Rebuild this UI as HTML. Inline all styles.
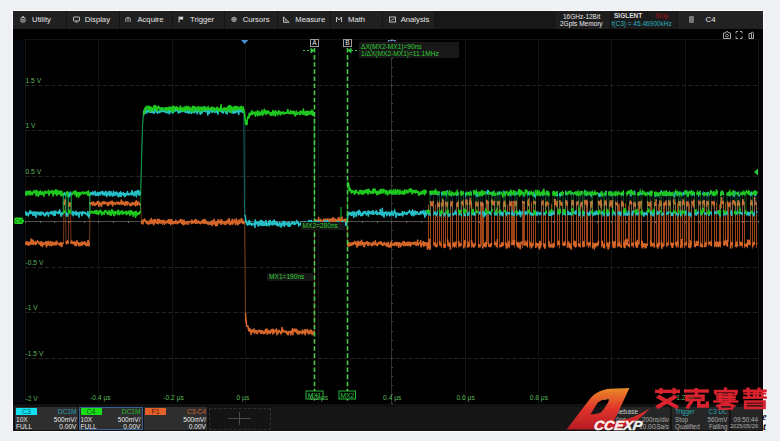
<!DOCTYPE html>
<html><head><meta charset="utf-8"><style>
*{margin:0;padding:0;box-sizing:border-box}
html,body{width:780px;height:441px;overflow:hidden;background:#eff0f4;font-family:"Liberation Sans",sans-serif}
.abs{position:absolute}
#scr{position:absolute;left:13px;top:11px;width:750px;height:420px;background:#000;outline:1px solid #fbfbfd}
#top{position:absolute;left:13px;top:11px;width:750px;height:17.5px;background:#181818}
.mi{position:absolute;top:11px;width:52.8px;height:17.5px;background:#202020;color:#e6e6e6;font-size:7.7px;line-height:17px;white-space:nowrap}
.mi .ic{position:absolute;left:8px;top:6px;width:5px;height:5px;border:1px solid #bbb;border-radius:1px}
.mi .mt{position:absolute;left:19.1px;top:0}
.mi svg{position:absolute;left:7px;top:5px}
.st{position:absolute;font-size:6.5px;color:#e8e8e8;white-space:nowrap;line-height:8px}
.ax{position:absolute;font-size:6.7px;color:#5cb85c;white-space:nowrap;line-height:9px}
svg{position:absolute;left:0;top:0}
.lab{position:absolute;background:#161616;color:#2ecc2e;font-size:6.6px;line-height:7.7px;height:7.7px;white-space:nowrap;padding:0 2px}
.ch{position:absolute;top:407px;height:23px;background:#2e2e2e;font-size:6.6px;color:#e8e8e8;line-height:7px;white-space:nowrap}
.ch .tag{position:absolute;left:1px;top:1px;width:21px;height:6.5px;text-align:center;color:#0a3a3a;font-size:7px;line-height:7px}
.ch .r{position:absolute;right:1px}
.ch .l{position:absolute;left:1px}
.bb{position:absolute;top:407px;height:23px;background:#262626;font-size:6.3px;color:#ababab;line-height:7px;white-space:nowrap;border-right:1px solid #141414}
.wm{position:absolute;white-space:nowrap}
</style></head><body>
<div id="scr"></div>
<div id="top"></div>
<div class="mi" style="left:13.0px"><svg width="7" height="7" viewBox="0 0 7 7"><rect x="1" y="1.5" width="4" height="4.5" rx="0.8" fill="none" stroke="#ccc" stroke-width="0.9"/><circle cx="3" cy="3.8" r="0.9" fill="#ccc"/><rect x="2.4" y="0" width="1.2" height="1.5" fill="#ccc"/></svg><span class="mt">Utility</span></div>
<div class="mi" style="left:65.7px"><svg width="7" height="7" viewBox="0 0 7 7"><rect x="0.5" y="1" width="6" height="4" rx="0.5" fill="none" stroke="#ccc" stroke-width="0.9"/><rect x="2.5" y="5.5" width="2" height="1" fill="#ccc"/></svg><span class="mt">Display</span></div>
<div class="mi" style="left:118.3px"><svg width="7" height="7" viewBox="0 0 7 7"><path d="M0.8,6 V2.5 Q3,0 5.2,2.5 V6 M3,2 V6" fill="none" stroke="#ccc" stroke-width="0.8"/></svg><span class="mt">Acquire</span></div>
<div class="mi" style="left:170.9px"><svg width="7" height="7" viewBox="0 0 7 7"><path d="M1,0.5 V6.5" stroke="#ddd" stroke-width="0.9"/><path d="M1.4,0.8 H5.5 L4.8,2.2 L5.5,3.6 H1.4 Z" fill="#ddd"/></svg><span class="mt">Trigger</span></div>
<div class="mi" style="left:223.6px"><svg width="7" height="7" viewBox="0 0 7 7"><circle cx="3" cy="3.3" r="2.6" fill="#aaa"/><path d="M1,2.3 H5 M1,4.3 H5 M2,1 V5.6 M4,1 V5.6" stroke="#666" stroke-width="0.5"/></svg><span class="mt">Cursors</span></div>
<div class="mi" style="left:276.2px"><svg width="7" height="7" viewBox="0 0 7 7"><path d="M0.5,6.3 V0.8 L6,6.3 Z" fill="none" stroke="#ccc" stroke-width="0.9"/><path d="M1.5,4 H3 M1.5,5 H4" stroke="#ccc" stroke-width="0.5"/></svg><span class="mt">Measure</span></div>
<div class="mi" style="left:328.9px"><svg width="7" height="7" viewBox="0 0 7 7"><path d="M0.5,6 V1 L3,4 L5.5,1 V6" fill="none" stroke="#ccc" stroke-width="0.9"/></svg><span class="mt">Math</span></div>
<div class="mi" style="left:381.6px"><svg width="7" height="7" viewBox="0 0 7 7"><rect x="0.5" y="1" width="6" height="5" fill="none" stroke="#ccc" stroke-width="0.9"/><path d="M1.5,5 L3,3 L4,4 L5.5,2" fill="none" stroke="#ccc" stroke-width="0.6"/></svg><span class="mt">Analysis</span></div>
<div class="abs" style="left:66.4px;top:11px;width:1px;height:17.5px;background:#151515"></div>
<div class="abs" style="left:119.0px;top:11px;width:1px;height:17.5px;background:#151515"></div>
<div class="abs" style="left:171.6px;top:11px;width:1px;height:17.5px;background:#151515"></div>
<div class="abs" style="left:224.3px;top:11px;width:1px;height:17.5px;background:#151515"></div>
<div class="abs" style="left:276.9px;top:11px;width:1px;height:17.5px;background:#151515"></div>
<div class="abs" style="left:329.6px;top:11px;width:1px;height:17.5px;background:#151515"></div>
<div class="abs" style="left:382.2px;top:11px;width:1px;height:17.5px;background:#151515"></div>
<div class="abs" style="left:434.9px;top:11px;width:1px;height:17.5px;background:#151515"></div>
<div class="abs" style="left:553.5px;top:11px;width:56px;height:17.5px;background:#1e1e1e;border-left:1px solid #141414"></div>
<div class="abs" style="left:609.5px;top:11px;width:67px;height:17.5px;background:#1b1b1b;border-left:1px solid #141414"></div>
<div class="abs" style="left:647px;top:11px;width:1px;height:7px;background:#141414"></div>
<div class="abs" style="left:676.5px;top:11px;width:86.5px;height:17.5px;background:#222;border-left:1px solid #141414"></div>
<div class="st" style="left:563px;top:12.5px">16GHz-12Bit</div>
<div class="st" style="left:560px;top:19.5px">2Gpts Memory</div>
<div class="st" style="left:614px;top:11.5px;font-weight:bold;color:#ddd">SIGLENT</div>
<div class="st" style="left:655px;top:12px;color:#a01818">Stop</div>
<div class="st" style="left:611.5px;top:19.5px;color:#2ab0bd">f(C3) = 45.46900kHz</div>
<div class="abs" style="left:689px;top:16px;width:5px;height:7px;background:#777;border-radius:1px"></div>
<div class="st" style="left:705.5px;top:15.5px;font-size:7.8px">C4</div>
<svg width="40" height="10" viewBox="0 0 40 10" style="position:absolute;left:722px;top:30px">
<path d="M1.5,3 H3 L4,1.8 H6 L7,3 H8.5 V8.5 H1.5 Z" fill="none" stroke="#bbb" stroke-width="0.9"/><circle cx="5" cy="5.6" r="1.4" fill="none" stroke="#bbb" stroke-width="0.8"/>
<path d="M14,3.5 V1.5 H16 M18,1.5 H20 V3.5 M20,6.5 V8.5 H18 M16,8.5 H14 V6.5" fill="none" stroke="#bbb" stroke-width="0.9"/>
<path d="M27,8.5 V3.5 H29.5 V8.5 Z M29,2.5 Q31,1 31.5,3.5 V8.5 H30" fill="none" stroke="#bbb" stroke-width="0.9"/>
</svg>
<div class="abs" style="left:14px;top:40px;width:10px;height:363px;background:#05070e"></div>
<svg width="780" height="441" viewBox="0 0 780 441">
<line x1="25.5" y1="39.4" x2="25.5" y2="403.4" stroke="#121212" stroke-width="1"/>
<line x1="98.5" y1="39.4" x2="98.5" y2="403.4" stroke="#121212" stroke-width="1"/>
<line x1="172.5" y1="39.4" x2="172.5" y2="403.4" stroke="#121212" stroke-width="1"/>
<line x1="245.5" y1="39.4" x2="245.5" y2="403.4" stroke="#121212" stroke-width="1"/>
<line x1="318.5" y1="39.4" x2="318.5" y2="403.4" stroke="#121212" stroke-width="1"/>
<line x1="391.5" y1="39.4" x2="391.5" y2="403.4" stroke="#303030" stroke-width="1"/>
<line x1="465.5" y1="39.4" x2="465.5" y2="403.4" stroke="#121212" stroke-width="1"/>
<line x1="538.5" y1="39.4" x2="538.5" y2="403.4" stroke="#121212" stroke-width="1"/>
<line x1="611.5" y1="39.4" x2="611.5" y2="403.4" stroke="#121212" stroke-width="1"/>
<line x1="685.5" y1="39.4" x2="685.5" y2="403.4" stroke="#121212" stroke-width="1"/>
<line x1="758.5" y1="39.4" x2="758.5" y2="403.4" stroke="#121212" stroke-width="1"/>
<line x1="25.0" y1="39.5" x2="757.8" y2="39.5" stroke="#121212" stroke-width="1"/>
<line x1="25.0" y1="85.5" x2="757.8" y2="85.5" stroke="#222" stroke-width="1" stroke-dasharray="4.5 2"/>
<line x1="25.0" y1="130.5" x2="757.8" y2="130.5" stroke="#222" stroke-width="1" stroke-dasharray="4.5 2"/>
<line x1="25.0" y1="176.5" x2="757.8" y2="176.5" stroke="#222" stroke-width="1" stroke-dasharray="4.5 2"/>
<line x1="25.0" y1="221.5" x2="757.8" y2="221.5" stroke="#4e4e4e" stroke-width="1"/>
<line x1="25.0" y1="267.5" x2="757.8" y2="267.5" stroke="#222" stroke-width="1" stroke-dasharray="4.5 2"/>
<line x1="25.0" y1="312.5" x2="757.8" y2="312.5" stroke="#222" stroke-width="1" stroke-dasharray="4.5 2"/>
<line x1="25.0" y1="358.5" x2="757.8" y2="358.5" stroke="#222" stroke-width="1" stroke-dasharray="4.5 2"/>
<rect x="25" y="221" width="1" height="2" fill="#6a6a6a"/>
<rect x="40" y="221" width="1" height="2" fill="#6a6a6a"/>
<rect x="54" y="221" width="1" height="2" fill="#6a6a6a"/>
<rect x="69" y="221" width="1" height="2" fill="#6a6a6a"/>
<rect x="84" y="221" width="1" height="2" fill="#6a6a6a"/>
<rect x="98" y="221" width="1" height="2" fill="#6a6a6a"/>
<rect x="113" y="221" width="1" height="2" fill="#6a6a6a"/>
<rect x="128" y="221" width="1" height="2" fill="#6a6a6a"/>
<rect x="142" y="221" width="1" height="2" fill="#6a6a6a"/>
<rect x="157" y="221" width="1" height="2" fill="#6a6a6a"/>
<rect x="172" y="221" width="1" height="2" fill="#6a6a6a"/>
<rect x="186" y="221" width="1" height="2" fill="#6a6a6a"/>
<rect x="201" y="221" width="1" height="2" fill="#6a6a6a"/>
<rect x="216" y="221" width="1" height="2" fill="#6a6a6a"/>
<rect x="230" y="221" width="1" height="2" fill="#6a6a6a"/>
<rect x="245" y="221" width="1" height="2" fill="#6a6a6a"/>
<rect x="259" y="221" width="1" height="2" fill="#6a6a6a"/>
<rect x="274" y="221" width="1" height="2" fill="#6a6a6a"/>
<rect x="289" y="221" width="1" height="2" fill="#6a6a6a"/>
<rect x="303" y="221" width="1" height="2" fill="#6a6a6a"/>
<rect x="318" y="221" width="1" height="2" fill="#6a6a6a"/>
<rect x="333" y="221" width="1" height="2" fill="#6a6a6a"/>
<rect x="347" y="221" width="1" height="2" fill="#6a6a6a"/>
<rect x="362" y="221" width="1" height="2" fill="#6a6a6a"/>
<rect x="377" y="221" width="1" height="2" fill="#6a6a6a"/>
<rect x="391" y="221" width="1" height="2" fill="#6a6a6a"/>
<rect x="406" y="221" width="1" height="2" fill="#6a6a6a"/>
<rect x="421" y="221" width="1" height="2" fill="#6a6a6a"/>
<rect x="435" y="221" width="1" height="2" fill="#6a6a6a"/>
<rect x="450" y="221" width="1" height="2" fill="#6a6a6a"/>
<rect x="465" y="221" width="1" height="2" fill="#6a6a6a"/>
<rect x="479" y="221" width="1" height="2" fill="#6a6a6a"/>
<rect x="494" y="221" width="1" height="2" fill="#6a6a6a"/>
<rect x="509" y="221" width="1" height="2" fill="#6a6a6a"/>
<rect x="523" y="221" width="1" height="2" fill="#6a6a6a"/>
<rect x="538" y="221" width="1" height="2" fill="#6a6a6a"/>
<rect x="553" y="221" width="1" height="2" fill="#6a6a6a"/>
<rect x="567" y="221" width="1" height="2" fill="#6a6a6a"/>
<rect x="582" y="221" width="1" height="2" fill="#6a6a6a"/>
<rect x="597" y="221" width="1" height="2" fill="#6a6a6a"/>
<rect x="611" y="221" width="1" height="2" fill="#6a6a6a"/>
<rect x="626" y="221" width="1" height="2" fill="#6a6a6a"/>
<rect x="641" y="221" width="1" height="2" fill="#6a6a6a"/>
<rect x="655" y="221" width="1" height="2" fill="#6a6a6a"/>
<rect x="670" y="221" width="1" height="2" fill="#6a6a6a"/>
<rect x="685" y="221" width="1" height="2" fill="#6a6a6a"/>
<rect x="699" y="221" width="1" height="2" fill="#6a6a6a"/>
<rect x="714" y="221" width="1" height="2" fill="#6a6a6a"/>
<rect x="728" y="221" width="1" height="2" fill="#6a6a6a"/>
<rect x="743" y="221" width="1" height="2" fill="#6a6a6a"/>
<rect x="758" y="221" width="1" height="2" fill="#6a6a6a"/>
<rect x="391" y="39" width="2" height="1" fill="#4c4c4c"/>
<rect x="391" y="48" width="2" height="1" fill="#4c4c4c"/>
<rect x="391" y="58" width="2" height="1" fill="#4c4c4c"/>
<rect x="391" y="67" width="2" height="1" fill="#4c4c4c"/>
<rect x="391" y="76" width="2" height="1" fill="#4c4c4c"/>
<rect x="391" y="85" width="2" height="1" fill="#4c4c4c"/>
<rect x="391" y="94" width="2" height="1" fill="#4c4c4c"/>
<rect x="391" y="103" width="2" height="1" fill="#4c4c4c"/>
<rect x="391" y="112" width="2" height="1" fill="#4c4c4c"/>
<rect x="391" y="121" width="2" height="1" fill="#4c4c4c"/>
<rect x="391" y="130" width="2" height="1" fill="#4c4c4c"/>
<rect x="391" y="140" width="2" height="1" fill="#4c4c4c"/>
<rect x="391" y="149" width="2" height="1" fill="#4c4c4c"/>
<rect x="391" y="158" width="2" height="1" fill="#4c4c4c"/>
<rect x="391" y="167" width="2" height="1" fill="#4c4c4c"/>
<rect x="391" y="176" width="2" height="1" fill="#4c4c4c"/>
<rect x="391" y="185" width="2" height="1" fill="#4c4c4c"/>
<rect x="391" y="194" width="2" height="1" fill="#4c4c4c"/>
<rect x="391" y="203" width="2" height="1" fill="#4c4c4c"/>
<rect x="391" y="212" width="2" height="1" fill="#4c4c4c"/>
<rect x="391" y="221" width="2" height="1" fill="#4c4c4c"/>
<rect x="391" y="230" width="2" height="1" fill="#4c4c4c"/>
<rect x="391" y="240" width="2" height="1" fill="#4c4c4c"/>
<rect x="391" y="249" width="2" height="1" fill="#4c4c4c"/>
<rect x="391" y="258" width="2" height="1" fill="#4c4c4c"/>
<rect x="391" y="267" width="2" height="1" fill="#4c4c4c"/>
<rect x="391" y="276" width="2" height="1" fill="#4c4c4c"/>
<rect x="391" y="285" width="2" height="1" fill="#4c4c4c"/>
<rect x="391" y="294" width="2" height="1" fill="#4c4c4c"/>
<rect x="391" y="303" width="2" height="1" fill="#4c4c4c"/>
<rect x="391" y="312" width="2" height="1" fill="#4c4c4c"/>
<rect x="391" y="321" width="2" height="1" fill="#4c4c4c"/>
<rect x="391" y="331" width="2" height="1" fill="#4c4c4c"/>
<rect x="391" y="340" width="2" height="1" fill="#4c4c4c"/>
<rect x="391" y="349" width="2" height="1" fill="#4c4c4c"/>
<rect x="391" y="358" width="2" height="1" fill="#4c4c4c"/>
<rect x="391" y="367" width="2" height="1" fill="#4c4c4c"/>
<rect x="391" y="376" width="2" height="1" fill="#4c4c4c"/>
<rect x="391" y="385" width="2" height="1" fill="#4c4c4c"/>
<rect x="391" y="394" width="2" height="1" fill="#4c4c4c"/>
<rect x="391" y="403" width="2" height="1" fill="#4c4c4c"/>
<g clip-path="url(#gc)">
<clipPath id="gc"><rect x="25" y="39" width="733" height="365"/></clipPath>
<polyline fill="none" stroke="#1ec81e" stroke-width="1" stroke-opacity="0.55" points="314.5,222.4 314.8,221.1 315.2,221.2 315.5,221.3 315.9,220.9 316.2,222.2 316.6,221.4 316.9,221.4 317.2,221.5 317.6,221.1 317.9,220.5 318.3,222.0 318.6,222.3 318.9,220.3 319.3,222.4 319.6,222.7 320.0,221.6 320.3,222.9 320.7,219.4 321.0,222.8 321.3,220.7 321.7,221.8 322.0,220.6 322.4,223.8 322.7,221.1 323.1,222.1 323.4,220.0 323.7,221.2 324.1,221.9 324.4,221.4 324.8,220.7 325.1,222.9 325.4,220.0 325.8,221.5 326.1,221.3 326.5,221.1 326.8,222.1 327.2,221.7 327.5,221.3 327.8,222.1 328.2,221.4 328.5,222.0 328.9,222.7 329.2,221.7 329.6,221.5 329.9,220.9 330.2,222.8 330.6,222.4 330.9,222.0 331.3,221.8 331.6,220.7 331.9,221.5 332.3,221.8 332.6,220.3 333.0,220.5 333.3,221.4 333.7,223.3 334.0,221.8 334.3,220.1 334.7,222.7 335.0,222.3 335.4,222.2 335.7,220.9 336.1,221.4 336.4,223.6 336.7,222.6 337.1,225.9 337.4,219.7 337.8,219.9 338.1,221.1 338.4,220.6 338.8,220.8 339.1,222.2 339.5,222.8 339.8,220.1 340.2,222.0 340.5,221.5 341.0,207.0 341.5,222.3 341.8,221.7 342.2,222.8 342.5,222.6 342.9,220.7 343.2,221.6 343.6,221.7 343.9,220.3 344.2,221.2 344.6,222.5 344.9,221.9 345.3,221.5 345.6,224.0 346.0,222.1 346.3,222.4 346.7,220.6 347.0,221.5"/><path fill="none" stroke="#1ec81e" stroke-width="1.1" stroke-linejoin="round" d="M314.5,222.4 L314.8,221.1 L315.2,221.2 L315.5,221.3 L315.9,220.9 L316.2,222.2 L316.6,221.4 L316.9,221.4 L317.2,221.5 L317.6,221.1 L317.9,220.5 L318.3,222.0 L318.6,222.3 L318.9,220.3 L319.3,222.4 L319.6,222.7 L320.0,221.6 L320.3,222.9 L320.7,219.4 L321.0,222.8 L321.3,220.7 L321.7,221.8 L322.0,220.6 L322.4,223.8 L322.7,221.1 L323.1,222.1 L323.4,220.0 L323.7,221.2 L324.1,221.9 L324.4,221.4 L324.8,220.7 L325.1,222.9 L325.4,220.0 L325.8,221.5 L326.1,221.3 L326.5,221.1 L326.8,222.1 L327.2,221.7 L327.5,221.3 L327.8,222.1 L328.2,221.4 L328.5,222.0 L328.9,222.7 L329.2,221.7 L329.6,221.5 L329.9,220.9 L330.2,222.8 L330.6,222.4 L330.9,222.0 L331.3,221.8 L331.6,220.7 L331.9,221.5 L332.3,221.8 L332.6,220.3 L333.0,220.5 L333.3,221.4 L333.7,223.3 L334.0,221.8 L334.3,220.1 L334.7,222.7 L335.0,222.3 L335.4,222.2 L335.7,220.9 L336.1,221.4 L336.4,223.6 L336.7,222.6 L337.1,225.9 L337.4,219.7 L337.8,219.9 L338.1,221.1 L338.4,220.6 L338.8,220.8 L339.1,222.2 L339.5,222.8 L339.8,220.1 L340.2,222.0 L340.5,221.5 M341.5,222.3 L341.8,221.7 L342.2,222.8 L342.5,222.6 L342.9,220.7 L343.2,221.6 L343.6,221.7 L343.9,220.3 L344.2,221.2 L344.6,222.5 L344.9,221.9 L345.3,221.5 L345.6,224.0 L346.0,222.1 L346.3,222.4 L346.7,220.6 L347.0,221.5"/>
<polyline fill="none" stroke="#d4662a" stroke-width="1" stroke-opacity="0.55" points="25.0,245.1 25.3,242.9 25.7,243.2 26.0,242.9 26.4,241.7 26.7,244.2 27.0,241.8 27.4,244.6 27.7,242.4 28.1,245.2 28.4,243.9 28.7,245.1 29.1,242.0 29.4,244.2 29.8,244.5 30.1,243.9 30.5,243.3 30.8,242.7 31.1,239.0 31.5,244.2 31.8,241.7 32.2,242.1 32.5,244.0 32.8,239.9 33.2,242.4 33.5,244.4 33.9,243.5 34.2,243.2 34.5,242.4 34.9,243.7 35.2,241.4 35.6,242.7 35.9,244.6 36.2,242.2 36.6,243.3 36.9,243.0 37.3,241.8 37.6,240.8 37.9,242.3 38.3,242.4 38.6,242.1 39.0,243.4 39.3,243.9 39.7,244.3 40.0,244.0 40.3,241.9 40.7,245.4 41.0,244.0 41.4,244.5 41.7,241.7 42.0,245.0 42.4,246.6 42.7,244.2 43.1,245.0 43.4,242.7 43.7,243.7 44.1,243.4 44.4,244.4 44.8,243.7 45.1,243.9 45.4,242.2 45.8,241.9 46.1,243.5 46.5,246.9 46.8,242.1 47.1,244.2 47.5,245.3 47.8,242.6 48.2,241.2 48.5,244.0 48.8,243.4 49.2,242.3 49.5,245.6 49.9,244.5 50.2,243.5 50.6,241.6 50.9,245.2 51.2,245.1 51.6,244.6 51.9,245.7 52.3,242.1 52.6,242.1 52.9,244.7 53.3,244.1 53.6,243.4 54.0,242.8 54.3,244.9 54.6,243.8 55.0,244.7 55.3,241.9 55.7,243.6 56.0,244.1 56.3,244.9 56.7,241.2 57.0,243.2 57.4,242.6 57.7,243.5 58.0,243.3 58.4,244.1 58.7,244.6 59.1,243.9 59.4,243.4 59.8,244.7 60.1,245.4 60.4,243.6 60.8,242.4 61.1,245.9 61.5,244.8 61.8,246.5 62.1,242.9 62.5,243.0 62.8,243.3 63.2,243.4 63.5,243.5 64.0,201.3 64.4,204.5 64.8,201.2 65.1,199.5 65.5,203.3 66.0,243.4 66.3,242.0 66.7,243.9 67.0,241.9 67.3,241.6 67.6,240.7 68.0,241.8 68.3,243.5 68.8,202.9 69.1,206.3 69.5,204.2 69.8,202.4 70.2,205.2 70.5,203.3 71.0,243.8 71.3,240.9 71.7,241.1 72.0,241.4 72.4,242.7 72.7,243.6 73.0,242.7 73.4,242.7 73.7,242.2 74.0,243.7 74.4,244.6 74.7,242.0 75.1,245.2 75.4,242.3 75.7,243.1 76.1,245.8 76.4,244.3 76.7,243.6 77.1,240.8 77.4,243.6 77.8,243.0 78.1,243.2 78.4,245.0 78.8,242.7 79.1,246.0 79.5,243.6 79.8,243.7 80.1,243.1 80.5,243.6 80.8,245.4 81.1,243.8 81.5,242.1 81.8,242.4 82.2,245.1 82.5,244.3 82.8,242.3 83.2,243.3 83.5,243.6 83.9,244.3 84.2,242.2 84.5,243.6 84.9,241.7 85.2,242.4 85.5,243.2 85.9,245.4 86.2,243.4 86.6,245.8 86.9,244.0 87.2,245.3 87.6,243.3 87.9,241.0 88.2,240.5 88.6,242.9 88.9,246.0 89.3,243.3 89.6,243.5 90.0,202.6 90.3,204.2 90.7,202.8 91.0,202.8 91.4,203.6 91.7,203.9 92.0,202.5 92.4,202.2 92.7,205.5 93.1,202.1 93.4,202.0 93.7,203.0 94.1,203.1 94.4,203.7 94.8,205.5 95.1,205.1 95.4,203.2 95.8,203.5 96.1,204.7 96.5,203.1 96.8,203.5 97.2,201.8 97.5,203.9 97.8,203.2 98.2,201.3 98.5,203.6 98.9,206.4 99.2,203.8 99.5,202.2 99.9,205.1 100.2,203.8 100.6,203.6 100.9,205.4 101.2,204.6 101.6,206.2 101.9,202.2 102.3,202.7 102.6,203.2 102.9,203.6 103.3,201.7 103.6,203.7 104.0,201.4 104.3,202.5 104.6,203.0 105.0,203.7 105.3,203.8 105.7,202.2 106.0,203.8 106.3,203.7 106.7,203.2 107.0,203.3 107.4,202.6 107.7,205.8 108.0,205.2 108.4,203.7 108.7,205.1 109.1,202.1 109.4,202.6 109.8,202.8 110.1,203.9 110.4,202.8 110.8,202.0 111.1,201.2 111.5,201.8 111.8,204.6 112.1,204.0 112.5,201.3 112.8,205.9 113.2,202.6 113.5,202.7 113.8,203.1 114.2,203.4 114.5,202.8 114.9,203.3 115.2,204.4 115.5,204.6 115.9,202.4 116.2,203.1 116.6,202.3 116.9,202.7 117.2,203.2 117.6,202.9 117.9,204.1 118.3,202.0 118.6,203.8 118.9,204.3 119.3,202.9 119.6,202.8 120.0,204.1 120.3,202.8 120.6,202.8 121.0,203.6 121.3,199.9 121.7,204.3 122.0,203.6 122.4,204.1 122.7,201.4 123.0,202.7 123.4,203.9 123.7,204.1 124.1,202.5 124.4,202.7 124.7,205.4 125.1,203.7 125.4,205.0 125.8,201.4 126.1,203.9 126.4,202.5 126.8,202.6 127.1,205.1 127.5,201.8 127.8,202.0 128.1,202.3 128.5,203.0 128.8,203.3 129.2,203.9 129.5,205.0 129.8,204.0 130.2,205.8 130.5,204.8 130.9,204.1 131.2,203.1 131.5,205.2 131.9,202.9 132.2,204.7 132.6,203.3 132.9,202.5 133.2,204.2 133.6,204.3 133.9,203.7 134.3,204.8 134.6,203.5 135.0,202.3 135.3,203.4 135.6,205.9 136.0,202.0 136.3,200.8 136.7,203.3 137.0,201.9 137.3,205.2 137.7,203.5 138.0,202.0 138.4,203.2 138.7,202.0 139.0,204.0 139.4,204.6 139.7,205.0 140.1,204.8 140.4,203.3 141.5,222.0 141.8,223.6 142.2,222.7 142.5,220.2 142.9,223.9 143.2,220.8 143.5,221.2 143.9,219.8 144.2,220.9 144.6,219.1 144.9,220.3 145.2,220.8 145.6,220.4 145.9,221.5 146.3,223.1 146.6,221.6 146.9,222.6 147.3,223.5 147.6,221.2 148.0,224.1 148.3,221.9 148.6,221.9 149.0,222.5 149.3,223.9 149.7,220.3 150.0,223.3 150.3,221.3 150.7,222.1 151.0,220.6 151.4,218.5 151.7,223.6 152.0,223.1 152.4,220.5 152.7,220.7 153.1,220.3 153.4,221.9 153.7,224.8 154.1,221.8 154.4,219.6 154.8,223.0 155.1,220.7 155.4,219.8 155.8,222.5 156.1,222.0 156.5,222.2 156.8,223.0 157.1,223.3 157.5,219.1 157.8,222.2 158.2,223.6 158.5,223.7 158.8,220.6 159.2,219.5 159.5,220.5 159.9,222.5 160.2,221.7 160.5,223.1 160.9,221.8 161.2,220.2 161.6,220.5 161.9,221.7 162.2,223.2 162.6,224.1 162.9,220.6 163.3,222.6 163.6,221.9 163.9,220.4 164.3,220.4 164.6,224.2 165.0,221.4 165.3,221.9 165.6,222.6 166.0,222.5 166.3,223.0 166.7,220.9 167.0,221.5 167.3,222.4 167.7,222.5 168.0,221.0 168.4,219.6 168.7,223.2 169.0,223.2 169.4,223.3 169.7,221.8 170.1,219.5 170.4,221.4 170.7,224.8 171.1,222.4 171.4,222.3 171.8,219.7 172.1,221.1 172.4,223.4 172.8,222.5 173.1,221.8 173.5,223.7 173.8,223.0 174.1,222.8 174.5,221.8 174.8,222.6 175.2,223.4 175.5,222.4 175.8,220.3 176.2,221.8 176.5,221.6 176.9,222.6 177.2,223.8 177.5,221.9 177.9,221.4 178.2,223.0 178.6,222.7 178.9,220.9 179.2,222.6 179.6,222.3 179.9,222.5 180.3,219.9 180.6,219.3 180.9,219.9 181.3,219.7 181.6,223.4 182.0,223.4 182.3,220.2 182.6,224.0 183.0,220.4 183.3,220.9 183.7,225.0 184.0,220.2 184.3,223.0 184.7,223.1 185.0,223.5 185.4,222.9 185.7,222.4 186.0,224.1 186.4,221.9 186.7,222.1 187.1,222.6 187.4,221.5 187.7,221.8 188.1,223.7 188.4,224.3 188.8,222.8 189.1,221.9 189.4,221.3 189.8,221.5 190.1,221.5 190.5,221.4 190.8,221.9 191.1,221.7 191.5,223.5 191.8,220.0 192.2,221.4 192.5,223.1 192.8,221.4 193.2,221.4 193.5,222.8 193.8,221.9 194.2,220.7 194.5,222.2 194.9,222.9 195.2,219.7 195.5,223.3 195.9,219.6 196.2,223.0 196.6,220.2 196.9,222.3 197.2,222.0 197.6,223.4 197.9,221.9 198.3,221.4 198.6,221.0 198.9,222.3 199.3,221.7 199.6,223.2 200.0,222.6 200.3,223.7 200.6,223.0 201.0,222.3 201.3,221.9 201.7,222.9 202.0,223.1 202.3,220.2 202.7,222.6 203.0,221.5 203.4,222.5 203.7,223.1 204.0,219.4 204.4,221.9 204.7,223.4 205.1,219.6 205.4,222.3 205.7,222.0 206.1,221.2 206.4,223.3 206.8,223.3 207.1,222.1 207.4,224.0 207.8,224.0 208.1,222.3 208.5,223.2 208.8,223.2 209.1,224.4 209.5,223.1 209.8,223.0 210.2,222.2 210.5,223.0 210.8,224.2 211.2,221.9 211.5,221.9 211.9,220.7 212.2,225.6 212.5,221.5 212.9,221.3 213.2,221.2 213.6,223.7 213.9,222.5 214.2,219.2 214.6,222.2 214.9,224.6 215.3,222.0 215.6,222.2 215.9,226.0 216.3,221.7 216.6,221.7 217.0,222.9 217.3,225.4 217.6,222.7 218.0,219.8 218.3,221.8 218.7,221.7 219.0,223.1 219.3,221.5 219.7,222.2 220.0,220.3 220.4,220.3 220.7,222.1 221.0,224.3 221.4,220.7 221.7,219.8 222.1,223.7 222.4,222.6 222.7,223.2 223.1,221.8 223.4,222.4 223.8,221.9 224.1,222.1 224.4,224.5 224.8,221.5 225.1,221.5 225.5,222.1 225.8,221.8 226.1,224.4 226.5,221.8 226.8,222.6 227.2,220.3 227.5,222.8 227.8,223.0 228.2,223.0 228.5,219.8 228.9,221.2 229.2,218.4 229.5,224.4 229.9,221.9 230.2,224.3 230.6,224.7 230.9,223.5 231.2,221.2 231.6,221.8 231.9,223.2 232.3,219.3 232.6,224.0 232.9,224.1 233.3,223.3 233.6,221.7 234.0,222.6 234.3,219.8 234.6,220.7 235.0,221.4 235.3,221.0 235.7,224.4 236.0,222.7 236.3,218.7 236.7,223.7 237.0,222.8 237.4,221.7 237.7,221.1 238.0,224.9 238.4,222.4 238.7,222.4 239.1,219.8 239.4,221.3 239.7,223.3 240.1,222.2 240.4,221.4 240.8,221.6 241.1,219.8 241.4,218.6 241.8,222.8 242.1,220.0 242.5,219.9 242.8,222.5 243.1,223.3 243.5,221.6 243.8,223.6 244.2,222.1 244.5,222.0 245.5,312.7 245.9,321.6 246.2,320.0 246.6,326.0 247.0,325.7 247.3,326.4 247.7,326.3 248.0,326.0 248.3,328.7 248.7,330.7 249.0,330.6 249.3,328.5 249.7,330.4 250.0,331.6 250.3,331.4 250.7,329.3 251.0,334.4 251.3,330.5 251.7,330.4 252.0,331.8 252.4,331.9 252.7,330.8 253.0,329.7 253.4,329.9 253.7,331.6 254.1,328.9 254.4,333.2 254.7,332.5 255.1,331.9 255.4,331.9 255.8,330.4 256.1,330.8 256.4,332.8 256.8,330.9 257.1,333.8 257.5,333.0 257.8,332.6 258.1,331.3 258.5,330.3 258.8,331.4 259.2,330.3 259.5,331.1 259.8,331.1 260.2,330.8 260.5,333.2 260.9,330.4 261.2,330.6 261.6,333.3 261.9,332.0 262.2,332.3 262.6,330.8 262.9,332.1 263.3,333.5 263.6,331.7 263.9,332.2 264.3,333.4 264.6,332.5 265.0,333.4 265.3,330.0 265.6,329.2 266.0,330.1 266.3,332.3 266.7,330.7 267.0,328.9 267.3,334.2 267.7,333.5 268.0,330.9 268.4,330.8 268.7,330.7 269.0,332.7 269.4,332.3 269.7,331.9 270.1,333.6 270.4,330.5 270.7,330.0 271.1,331.7 271.4,331.6 271.8,331.8 272.1,332.3 272.4,329.6 272.8,333.9 273.1,329.2 273.5,332.2 273.8,332.2 274.1,332.9 274.5,332.0 274.8,330.6 275.2,331.5 275.5,329.8 275.8,331.5 276.2,331.4 276.5,329.1 276.9,334.8 277.2,330.9 277.5,332.5 277.9,333.6 278.2,331.7 278.6,331.2 278.9,330.2 279.2,330.7 279.6,330.8 279.9,331.5 280.3,332.9 280.6,332.0 280.9,333.9 281.3,332.3 281.6,332.1 282.0,327.5 282.3,331.6 282.6,332.2 283.0,329.7 283.3,331.7 283.7,330.8 284.0,331.5 284.4,331.7 284.7,331.4 285.0,331.7 285.4,332.3 285.7,332.2 286.1,330.9 286.4,333.1 286.7,331.9 287.1,332.3 287.4,334.3 287.8,334.2 288.1,334.9 288.4,331.5 288.8,332.4 289.1,332.5 289.5,332.0 289.8,331.6 290.1,333.0 290.5,333.4 290.8,334.9 291.2,331.1 291.5,332.5 291.8,330.8 292.2,331.5 292.5,328.6 292.9,334.8 293.2,329.6 293.5,332.0 293.9,329.4 294.2,331.4 294.6,330.4 294.9,329.0 295.2,330.4 295.6,331.6 295.9,331.7 296.3,329.2 296.6,332.8 296.9,331.5 297.3,330.3 297.6,334.0 298.0,330.9 298.3,332.2 298.6,334.0 299.0,332.0 299.3,331.8 299.7,333.3 300.0,331.3 300.3,332.0 300.7,331.7 301.0,331.4 301.4,333.0 301.7,332.3 302.0,333.9 302.4,332.5 302.7,330.0 303.1,332.5 303.4,331.5 303.8,331.6 304.1,333.3 304.4,332.5 304.8,329.7 305.1,334.8 305.5,331.8 305.8,329.7 306.1,331.5 306.5,332.6 306.8,330.4 307.2,330.8 307.5,329.5 307.8,332.4 308.2,331.2 308.5,334.1 308.9,332.4 309.2,332.3 309.5,331.1 309.9,333.4 310.2,330.1 310.6,332.4 310.9,332.7 311.2,330.9 311.6,330.3 311.9,333.6 312.3,334.6 312.6,332.6 312.9,334.6 313.3,332.7 313.6,331.8 314.0,331.5 314.3,332.0 314.5,219.3 314.8,222.3 315.2,220.2 315.5,220.1 315.9,221.5 316.2,221.7 316.5,220.0 316.9,221.3 317.2,220.8 317.5,221.2 317.9,220.8 318.2,220.4 318.6,217.6 318.9,220.2 319.2,222.7 319.6,220.5 319.9,221.2 320.3,221.8 320.6,219.6 320.9,221.1 321.3,220.6 321.6,221.5 321.9,221.8 322.3,221.1 322.6,220.7 323.0,222.3 323.3,221.1 323.6,218.9 324.0,222.7 324.3,221.6 324.7,220.1 325.0,220.9 325.3,219.6 325.7,221.1 326.0,218.9 326.3,222.4 326.7,221.6 327.0,219.5 327.4,221.6 327.7,218.9 328.0,220.2 328.4,219.5 328.7,221.9 329.1,221.9 329.4,219.0 329.7,221.2 330.1,221.6 330.4,220.4 330.8,224.3 331.1,218.7 331.4,222.8 331.8,223.0 332.1,220.4 332.4,219.3 332.8,222.6 333.1,217.4 333.5,220.8 333.8,218.9 334.1,220.9 334.5,220.1 334.8,219.1 335.2,221.7 335.5,222.5 335.8,219.0 336.2,221.8 336.5,221.0 336.8,219.9 337.2,220.1 337.5,221.6 337.9,222.4 338.2,220.5 338.5,217.4 338.9,222.0 339.2,221.4 339.6,218.1 339.9,220.1 340.2,220.8 340.6,220.4 340.9,221.3 341.2,219.6 341.6,221.7 341.9,217.0 342.3,221.3 342.6,220.0 342.9,220.7 343.3,221.7 343.6,222.7 344.0,219.4 344.3,220.7 344.6,219.4 345.0,220.9 345.3,220.0 345.6,219.1 346.0,222.4 346.3,221.3 346.7,220.8 347.0,220.8 347.5,245.9 347.8,241.7 348.2,244.5 348.5,246.2 348.9,243.5 349.2,242.8 349.5,242.9 349.9,245.7 350.2,245.5 350.6,244.4 350.9,245.3 351.2,243.1 351.6,243.4 351.9,245.1 352.3,242.7 352.6,244.3 352.9,243.9 353.3,242.8 353.6,244.3 354.0,242.2 354.3,243.1 354.7,241.2 355.0,242.2 355.3,242.7 355.7,244.5 356.0,244.0 356.4,242.2 356.7,243.6 357.0,247.1 357.4,244.1 357.7,244.5 358.1,241.0 358.4,243.3 358.7,245.6 359.1,242.0 359.4,242.7 359.8,242.9 360.1,243.8 360.4,244.8 360.8,241.5 361.1,244.9 361.5,240.3 361.8,242.7 362.1,244.5 362.5,242.3 362.8,242.8 363.2,243.2 363.5,246.2 363.8,242.5 364.2,245.3 364.5,246.7 364.9,243.4 365.2,242.8 365.5,244.0 365.9,242.5 366.2,243.4 366.6,242.4 366.9,241.9 367.2,241.7 367.6,245.2 367.9,243.0 368.3,242.3 368.6,245.4 369.0,243.7 369.3,243.5 369.6,242.9 370.0,243.9 370.3,243.5 370.7,243.3 371.0,243.7 371.3,245.0 371.7,243.7 372.0,245.8 372.4,245.3 372.7,242.5 373.0,242.6 373.4,242.1 373.7,242.9 374.1,244.9 374.4,243.4 374.7,243.2 375.1,244.1 375.4,240.8 375.8,244.4 376.1,243.7 376.4,244.9 376.8,243.5 377.1,245.3 377.5,245.4 377.8,243.5 378.1,244.7 378.5,242.6 378.8,242.9 379.2,242.4 379.5,243.6 379.8,242.2 380.2,242.4 380.5,243.6 380.9,241.8 381.2,244.7 381.6,242.6 381.9,243.6 382.2,243.5 382.6,245.3 382.9,244.8 383.3,243.6 383.6,243.1 383.9,245.1 384.3,243.7 384.6,242.4 385.0,244.1 385.3,244.8 385.6,243.9 386.0,244.0 386.3,246.0 386.7,243.2 387.0,245.0 387.3,246.1 387.7,246.3 388.0,242.3 388.4,244.7 388.7,244.1 389.0,247.3 389.4,245.7 389.7,245.3 390.1,245.6 390.4,244.7 390.7,242.4 391.1,247.1 391.4,241.5 391.8,245.0 392.1,245.0 392.4,244.2 392.8,245.3 393.1,243.9 393.5,245.1 393.8,244.3 394.2,242.9 394.5,245.3 394.8,243.1 395.2,244.8 395.5,242.4 395.9,244.3 396.2,244.7 396.5,245.5 396.9,242.4 397.2,243.2 397.6,243.9 397.9,242.5 398.2,244.8 398.6,247.3 398.9,244.9 399.3,244.8 399.6,242.7 399.9,244.7 400.3,244.7 400.6,246.7 401.0,243.4 401.3,245.7 401.6,243.4 402.0,243.5 402.3,243.3 402.7,244.3 403.0,241.8 403.3,243.4 403.7,246.0 404.0,241.4 404.4,245.2 404.7,245.0 405.0,243.3 405.4,242.8 405.7,245.5 406.1,243.4 406.4,244.4 406.8,243.6 407.1,242.3 407.4,245.4 407.8,244.9 408.1,242.6 408.5,245.5 408.8,242.2 409.1,242.1 409.5,245.1 409.8,243.3 410.2,243.9 410.5,246.2 410.8,242.4 411.2,244.8 411.5,243.4 411.9,244.1 412.2,243.6 412.5,242.8 412.9,244.0 413.2,242.6 413.6,244.0 413.9,242.6 414.2,243.5 414.6,244.1 414.9,242.0 415.3,243.8 415.6,244.9 415.9,244.1 416.3,245.2 416.6,242.5 417.0,244.8 417.3,244.4 417.6,240.0 418.0,243.9 418.3,245.2 418.7,243.8 419.0,244.0 419.3,243.7 419.7,243.7 420.0,242.5 420.4,243.0 420.7,240.8 421.1,246.9 421.4,243.9 421.7,244.2 422.1,244.8 422.4,244.6 422.8,243.8 423.1,241.7 423.4,242.2 423.8,246.3 424.1,244.5 424.5,244.9 424.8,242.4 425.1,243.3 425.5,244.3 425.8,242.8 426.2,245.6 426.5,244.0"/><path fill="none" stroke="#d4662a" stroke-width="1.5" stroke-linejoin="round" d="M25.0,245.1 L25.3,242.9 L25.7,243.2 L26.0,242.9 L26.4,241.7 L26.7,244.2 L27.0,241.8 L27.4,244.6 L27.7,242.4 L28.1,245.2 L28.4,243.9 L28.7,245.1 L29.1,242.0 L29.4,244.2 L29.8,244.5 L30.1,243.9 L30.5,243.3 L30.8,242.7 L31.1,239.0 L31.5,244.2 L31.8,241.7 L32.2,242.1 L32.5,244.0 L32.8,239.9 L33.2,242.4 L33.5,244.4 L33.9,243.5 L34.2,243.2 L34.5,242.4 L34.9,243.7 L35.2,241.4 L35.6,242.7 L35.9,244.6 L36.2,242.2 L36.6,243.3 L36.9,243.0 L37.3,241.8 L37.6,240.8 L37.9,242.3 L38.3,242.4 L38.6,242.1 L39.0,243.4 L39.3,243.9 L39.7,244.3 L40.0,244.0 L40.3,241.9 L40.7,245.4 L41.0,244.0 L41.4,244.5 L41.7,241.7 L42.0,245.0 L42.4,246.6 L42.7,244.2 L43.1,245.0 L43.4,242.7 L43.7,243.7 L44.1,243.4 L44.4,244.4 L44.8,243.7 L45.1,243.9 L45.4,242.2 L45.8,241.9 L46.1,243.5 L46.5,246.9 L46.8,242.1 L47.1,244.2 L47.5,245.3 L47.8,242.6 L48.2,241.2 L48.5,244.0 L48.8,243.4 L49.2,242.3 L49.5,245.6 L49.9,244.5 L50.2,243.5 L50.6,241.6 L50.9,245.2 L51.2,245.1 L51.6,244.6 L51.9,245.7 L52.3,242.1 L52.6,242.1 L52.9,244.7 L53.3,244.1 L53.6,243.4 L54.0,242.8 L54.3,244.9 L54.6,243.8 L55.0,244.7 L55.3,241.9 L55.7,243.6 L56.0,244.1 L56.3,244.9 L56.7,241.2 L57.0,243.2 L57.4,242.6 L57.7,243.5 L58.0,243.3 L58.4,244.1 L58.7,244.6 L59.1,243.9 L59.4,243.4 L59.8,244.7 L60.1,245.4 L60.4,243.6 L60.8,242.4 L61.1,245.9 L61.5,244.8 L61.8,246.5 L62.1,242.9 L62.5,243.0 L62.8,243.3 L63.2,243.4 L63.5,243.5 M64.0,201.3 L64.4,204.5 L64.8,201.2 L65.1,199.5 L65.5,203.3 M66.0,243.4 L66.3,242.0 L66.7,243.9 L67.0,241.9 L67.3,241.6 L67.6,240.7 L68.0,241.8 L68.3,243.5 M68.8,202.9 L69.1,206.3 L69.5,204.2 L69.8,202.4 L70.2,205.2 L70.5,203.3 M71.0,243.8 L71.3,240.9 L71.7,241.1 L72.0,241.4 L72.4,242.7 L72.7,243.6 L73.0,242.7 L73.4,242.7 L73.7,242.2 L74.0,243.7 L74.4,244.6 L74.7,242.0 L75.1,245.2 L75.4,242.3 L75.7,243.1 L76.1,245.8 L76.4,244.3 L76.7,243.6 L77.1,240.8 L77.4,243.6 L77.8,243.0 L78.1,243.2 L78.4,245.0 L78.8,242.7 L79.1,246.0 L79.5,243.6 L79.8,243.7 L80.1,243.1 L80.5,243.6 L80.8,245.4 L81.1,243.8 L81.5,242.1 L81.8,242.4 L82.2,245.1 L82.5,244.3 L82.8,242.3 L83.2,243.3 L83.5,243.6 L83.9,244.3 L84.2,242.2 L84.5,243.6 L84.9,241.7 L85.2,242.4 L85.5,243.2 L85.9,245.4 L86.2,243.4 L86.6,245.8 L86.9,244.0 L87.2,245.3 L87.6,243.3 L87.9,241.0 L88.2,240.5 L88.6,242.9 L88.9,246.0 L89.3,243.3 L89.6,243.5 M90.0,202.6 L90.3,204.2 L90.7,202.8 L91.0,202.8 L91.4,203.6 L91.7,203.9 L92.0,202.5 L92.4,202.2 L92.7,205.5 L93.1,202.1 L93.4,202.0 L93.7,203.0 L94.1,203.1 L94.4,203.7 L94.8,205.5 L95.1,205.1 L95.4,203.2 L95.8,203.5 L96.1,204.7 L96.5,203.1 L96.8,203.5 L97.2,201.8 L97.5,203.9 L97.8,203.2 L98.2,201.3 L98.5,203.6 L98.9,206.4 L99.2,203.8 L99.5,202.2 L99.9,205.1 L100.2,203.8 L100.6,203.6 L100.9,205.4 L101.2,204.6 L101.6,206.2 L101.9,202.2 L102.3,202.7 L102.6,203.2 L102.9,203.6 L103.3,201.7 L103.6,203.7 L104.0,201.4 L104.3,202.5 L104.6,203.0 L105.0,203.7 L105.3,203.8 L105.7,202.2 L106.0,203.8 L106.3,203.7 L106.7,203.2 L107.0,203.3 L107.4,202.6 L107.7,205.8 L108.0,205.2 L108.4,203.7 L108.7,205.1 L109.1,202.1 L109.4,202.6 L109.8,202.8 L110.1,203.9 L110.4,202.8 L110.8,202.0 L111.1,201.2 L111.5,201.8 L111.8,204.6 L112.1,204.0 L112.5,201.3 L112.8,205.9 L113.2,202.6 L113.5,202.7 L113.8,203.1 L114.2,203.4 L114.5,202.8 L114.9,203.3 L115.2,204.4 L115.5,204.6 L115.9,202.4 L116.2,203.1 L116.6,202.3 L116.9,202.7 L117.2,203.2 L117.6,202.9 L117.9,204.1 L118.3,202.0 L118.6,203.8 L118.9,204.3 L119.3,202.9 L119.6,202.8 L120.0,204.1 L120.3,202.8 L120.6,202.8 L121.0,203.6 L121.3,199.9 L121.7,204.3 L122.0,203.6 L122.4,204.1 L122.7,201.4 L123.0,202.7 L123.4,203.9 L123.7,204.1 L124.1,202.5 L124.4,202.7 L124.7,205.4 L125.1,203.7 L125.4,205.0 L125.8,201.4 L126.1,203.9 L126.4,202.5 L126.8,202.6 L127.1,205.1 L127.5,201.8 L127.8,202.0 L128.1,202.3 L128.5,203.0 L128.8,203.3 L129.2,203.9 L129.5,205.0 L129.8,204.0 L130.2,205.8 L130.5,204.8 L130.9,204.1 L131.2,203.1 L131.5,205.2 L131.9,202.9 L132.2,204.7 L132.6,203.3 L132.9,202.5 L133.2,204.2 L133.6,204.3 L133.9,203.7 L134.3,204.8 L134.6,203.5 L135.0,202.3 L135.3,203.4 L135.6,205.9 L136.0,202.0 L136.3,200.8 L136.7,203.3 L137.0,201.9 L137.3,205.2 L137.7,203.5 L138.0,202.0 L138.4,203.2 L138.7,202.0 L139.0,204.0 L139.4,204.6 L139.7,205.0 L140.1,204.8 L140.4,203.3 M141.5,222.0 L141.8,223.6 L142.2,222.7 L142.5,220.2 L142.9,223.9 L143.2,220.8 L143.5,221.2 L143.9,219.8 L144.2,220.9 L144.6,219.1 L144.9,220.3 L145.2,220.8 L145.6,220.4 L145.9,221.5 L146.3,223.1 L146.6,221.6 L146.9,222.6 L147.3,223.5 L147.6,221.2 L148.0,224.1 L148.3,221.9 L148.6,221.9 L149.0,222.5 L149.3,223.9 L149.7,220.3 L150.0,223.3 L150.3,221.3 L150.7,222.1 L151.0,220.6 L151.4,218.5 L151.7,223.6 L152.0,223.1 L152.4,220.5 L152.7,220.7 L153.1,220.3 L153.4,221.9 L153.7,224.8 L154.1,221.8 L154.4,219.6 L154.8,223.0 L155.1,220.7 L155.4,219.8 L155.8,222.5 L156.1,222.0 L156.5,222.2 L156.8,223.0 L157.1,223.3 L157.5,219.1 L157.8,222.2 L158.2,223.6 L158.5,223.7 L158.8,220.6 L159.2,219.5 L159.5,220.5 L159.9,222.5 L160.2,221.7 L160.5,223.1 L160.9,221.8 L161.2,220.2 L161.6,220.5 L161.9,221.7 L162.2,223.2 L162.6,224.1 L162.9,220.6 L163.3,222.6 L163.6,221.9 L163.9,220.4 L164.3,220.4 L164.6,224.2 L165.0,221.4 L165.3,221.9 L165.6,222.6 L166.0,222.5 L166.3,223.0 L166.7,220.9 L167.0,221.5 L167.3,222.4 L167.7,222.5 L168.0,221.0 L168.4,219.6 L168.7,223.2 L169.0,223.2 L169.4,223.3 L169.7,221.8 L170.1,219.5 L170.4,221.4 L170.7,224.8 L171.1,222.4 L171.4,222.3 L171.8,219.7 L172.1,221.1 L172.4,223.4 L172.8,222.5 L173.1,221.8 L173.5,223.7 L173.8,223.0 L174.1,222.8 L174.5,221.8 L174.8,222.6 L175.2,223.4 L175.5,222.4 L175.8,220.3 L176.2,221.8 L176.5,221.6 L176.9,222.6 L177.2,223.8 L177.5,221.9 L177.9,221.4 L178.2,223.0 L178.6,222.7 L178.9,220.9 L179.2,222.6 L179.6,222.3 L179.9,222.5 L180.3,219.9 L180.6,219.3 L180.9,219.9 L181.3,219.7 L181.6,223.4 L182.0,223.4 L182.3,220.2 L182.6,224.0 L183.0,220.4 L183.3,220.9 L183.7,225.0 L184.0,220.2 L184.3,223.0 L184.7,223.1 L185.0,223.5 L185.4,222.9 L185.7,222.4 L186.0,224.1 L186.4,221.9 L186.7,222.1 L187.1,222.6 L187.4,221.5 L187.7,221.8 L188.1,223.7 L188.4,224.3 L188.8,222.8 L189.1,221.9 L189.4,221.3 L189.8,221.5 L190.1,221.5 L190.5,221.4 L190.8,221.9 L191.1,221.7 L191.5,223.5 L191.8,220.0 L192.2,221.4 L192.5,223.1 L192.8,221.4 L193.2,221.4 L193.5,222.8 L193.8,221.9 L194.2,220.7 L194.5,222.2 L194.9,222.9 L195.2,219.7 L195.5,223.3 L195.9,219.6 L196.2,223.0 L196.6,220.2 L196.9,222.3 L197.2,222.0 L197.6,223.4 L197.9,221.9 L198.3,221.4 L198.6,221.0 L198.9,222.3 L199.3,221.7 L199.6,223.2 L200.0,222.6 L200.3,223.7 L200.6,223.0 L201.0,222.3 L201.3,221.9 L201.7,222.9 L202.0,223.1 L202.3,220.2 L202.7,222.6 L203.0,221.5 L203.4,222.5 L203.7,223.1 L204.0,219.4 L204.4,221.9 L204.7,223.4 L205.1,219.6 L205.4,222.3 L205.7,222.0 L206.1,221.2 L206.4,223.3 L206.8,223.3 L207.1,222.1 L207.4,224.0 L207.8,224.0 L208.1,222.3 L208.5,223.2 L208.8,223.2 L209.1,224.4 L209.5,223.1 L209.8,223.0 L210.2,222.2 L210.5,223.0 L210.8,224.2 L211.2,221.9 L211.5,221.9 L211.9,220.7 L212.2,225.6 L212.5,221.5 L212.9,221.3 L213.2,221.2 L213.6,223.7 L213.9,222.5 L214.2,219.2 L214.6,222.2 L214.9,224.6 L215.3,222.0 L215.6,222.2 L215.9,226.0 L216.3,221.7 L216.6,221.7 L217.0,222.9 L217.3,225.4 L217.6,222.7 L218.0,219.8 L218.3,221.8 L218.7,221.7 L219.0,223.1 L219.3,221.5 L219.7,222.2 L220.0,220.3 L220.4,220.3 L220.7,222.1 L221.0,224.3 L221.4,220.7 L221.7,219.8 L222.1,223.7 L222.4,222.6 L222.7,223.2 L223.1,221.8 L223.4,222.4 L223.8,221.9 L224.1,222.1 L224.4,224.5 L224.8,221.5 L225.1,221.5 L225.5,222.1 L225.8,221.8 L226.1,224.4 L226.5,221.8 L226.8,222.6 L227.2,220.3 L227.5,222.8 L227.8,223.0 L228.2,223.0 L228.5,219.8 L228.9,221.2 L229.2,218.4 L229.5,224.4 L229.9,221.9 L230.2,224.3 L230.6,224.7 L230.9,223.5 L231.2,221.2 L231.6,221.8 L231.9,223.2 L232.3,219.3 L232.6,224.0 L232.9,224.1 L233.3,223.3 L233.6,221.7 L234.0,222.6 L234.3,219.8 L234.6,220.7 L235.0,221.4 L235.3,221.0 L235.7,224.4 L236.0,222.7 L236.3,218.7 L236.7,223.7 L237.0,222.8 L237.4,221.7 L237.7,221.1 L238.0,224.9 L238.4,222.4 L238.7,222.4 L239.1,219.8 L239.4,221.3 L239.7,223.3 L240.1,222.2 L240.4,221.4 L240.8,221.6 L241.1,219.8 L241.4,218.6 L241.8,222.8 L242.1,220.0 L242.5,219.9 L242.8,222.5 L243.1,223.3 L243.5,221.6 L243.8,223.6 L244.2,222.1 L244.5,222.0 M245.5,312.7 L245.9,321.6 L246.2,320.0 L246.6,326.0 L247.0,325.7 L247.3,326.4 L247.7,326.3 L248.0,326.0 L248.3,328.7 L248.7,330.7 L249.0,330.6 L249.3,328.5 L249.7,330.4 L250.0,331.6 L250.3,331.4 L250.7,329.3 L251.0,334.4 L251.3,330.5 L251.7,330.4 L252.0,331.8 L252.4,331.9 L252.7,330.8 L253.0,329.7 L253.4,329.9 L253.7,331.6 L254.1,328.9 L254.4,333.2 L254.7,332.5 L255.1,331.9 L255.4,331.9 L255.8,330.4 L256.1,330.8 L256.4,332.8 L256.8,330.9 L257.1,333.8 L257.5,333.0 L257.8,332.6 L258.1,331.3 L258.5,330.3 L258.8,331.4 L259.2,330.3 L259.5,331.1 L259.8,331.1 L260.2,330.8 L260.5,333.2 L260.9,330.4 L261.2,330.6 L261.6,333.3 L261.9,332.0 L262.2,332.3 L262.6,330.8 L262.9,332.1 L263.3,333.5 L263.6,331.7 L263.9,332.2 L264.3,333.4 L264.6,332.5 L265.0,333.4 L265.3,330.0 L265.6,329.2 L266.0,330.1 L266.3,332.3 L266.7,330.7 L267.0,328.9 L267.3,334.2 L267.7,333.5 L268.0,330.9 L268.4,330.8 L268.7,330.7 L269.0,332.7 L269.4,332.3 L269.7,331.9 L270.1,333.6 L270.4,330.5 L270.7,330.0 L271.1,331.7 L271.4,331.6 L271.8,331.8 L272.1,332.3 L272.4,329.6 L272.8,333.9 L273.1,329.2 L273.5,332.2 L273.8,332.2 L274.1,332.9 L274.5,332.0 L274.8,330.6 L275.2,331.5 L275.5,329.8 L275.8,331.5 L276.2,331.4 L276.5,329.1 L276.9,334.8 L277.2,330.9 L277.5,332.5 L277.9,333.6 L278.2,331.7 L278.6,331.2 L278.9,330.2 L279.2,330.7 L279.6,330.8 L279.9,331.5 L280.3,332.9 L280.6,332.0 L280.9,333.9 L281.3,332.3 L281.6,332.1 L282.0,327.5 L282.3,331.6 L282.6,332.2 L283.0,329.7 L283.3,331.7 L283.7,330.8 L284.0,331.5 L284.4,331.7 L284.7,331.4 L285.0,331.7 L285.4,332.3 L285.7,332.2 L286.1,330.9 L286.4,333.1 L286.7,331.9 L287.1,332.3 L287.4,334.3 L287.8,334.2 L288.1,334.9 L288.4,331.5 L288.8,332.4 L289.1,332.5 L289.5,332.0 L289.8,331.6 L290.1,333.0 L290.5,333.4 L290.8,334.9 L291.2,331.1 L291.5,332.5 L291.8,330.8 L292.2,331.5 L292.5,328.6 L292.9,334.8 L293.2,329.6 L293.5,332.0 L293.9,329.4 L294.2,331.4 L294.6,330.4 L294.9,329.0 L295.2,330.4 L295.6,331.6 L295.9,331.7 L296.3,329.2 L296.6,332.8 L296.9,331.5 L297.3,330.3 L297.6,334.0 L298.0,330.9 L298.3,332.2 L298.6,334.0 L299.0,332.0 L299.3,331.8 L299.7,333.3 L300.0,331.3 L300.3,332.0 L300.7,331.7 L301.0,331.4 L301.4,333.0 L301.7,332.3 L302.0,333.9 L302.4,332.5 L302.7,330.0 L303.1,332.5 L303.4,331.5 L303.8,331.6 L304.1,333.3 L304.4,332.5 L304.8,329.7 L305.1,334.8 L305.5,331.8 L305.8,329.7 L306.1,331.5 L306.5,332.6 L306.8,330.4 L307.2,330.8 L307.5,329.5 L307.8,332.4 L308.2,331.2 L308.5,334.1 L308.9,332.4 L309.2,332.3 L309.5,331.1 L309.9,333.4 L310.2,330.1 L310.6,332.4 L310.9,332.7 L311.2,330.9 L311.6,330.3 L311.9,333.6 L312.3,334.6 L312.6,332.6 L312.9,334.6 L313.3,332.7 L313.6,331.8 L314.0,331.5 L314.3,332.0 M314.5,219.3 L314.8,222.3 L315.2,220.2 L315.5,220.1 L315.9,221.5 L316.2,221.7 L316.5,220.0 L316.9,221.3 L317.2,220.8 L317.5,221.2 L317.9,220.8 L318.2,220.4 L318.6,217.6 L318.9,220.2 L319.2,222.7 L319.6,220.5 L319.9,221.2 L320.3,221.8 L320.6,219.6 L320.9,221.1 L321.3,220.6 L321.6,221.5 L321.9,221.8 L322.3,221.1 L322.6,220.7 L323.0,222.3 L323.3,221.1 L323.6,218.9 L324.0,222.7 L324.3,221.6 L324.7,220.1 L325.0,220.9 L325.3,219.6 L325.7,221.1 L326.0,218.9 L326.3,222.4 L326.7,221.6 L327.0,219.5 L327.4,221.6 L327.7,218.9 L328.0,220.2 L328.4,219.5 L328.7,221.9 L329.1,221.9 L329.4,219.0 L329.7,221.2 L330.1,221.6 L330.4,220.4 L330.8,224.3 L331.1,218.7 L331.4,222.8 L331.8,223.0 L332.1,220.4 L332.4,219.3 L332.8,222.6 L333.1,217.4 L333.5,220.8 L333.8,218.9 L334.1,220.9 L334.5,220.1 L334.8,219.1 L335.2,221.7 L335.5,222.5 L335.8,219.0 L336.2,221.8 L336.5,221.0 L336.8,219.9 L337.2,220.1 L337.5,221.6 L337.9,222.4 L338.2,220.5 L338.5,217.4 L338.9,222.0 L339.2,221.4 L339.6,218.1 L339.9,220.1 L340.2,220.8 L340.6,220.4 L340.9,221.3 L341.2,219.6 L341.6,221.7 L341.9,217.0 L342.3,221.3 L342.6,220.0 L342.9,220.7 L343.3,221.7 L343.6,222.7 L344.0,219.4 L344.3,220.7 L344.6,219.4 L345.0,220.9 L345.3,220.0 L345.6,219.1 L346.0,222.4 L346.3,221.3 L346.7,220.8 L347.0,220.8 M347.5,245.9 L347.8,241.7 L348.2,244.5 L348.5,246.2 L348.9,243.5 L349.2,242.8 L349.5,242.9 L349.9,245.7 L350.2,245.5 L350.6,244.4 L350.9,245.3 L351.2,243.1 L351.6,243.4 L351.9,245.1 L352.3,242.7 L352.6,244.3 L352.9,243.9 L353.3,242.8 L353.6,244.3 L354.0,242.2 L354.3,243.1 L354.7,241.2 L355.0,242.2 L355.3,242.7 L355.7,244.5 L356.0,244.0 L356.4,242.2 L356.7,243.6 L357.0,247.1 L357.4,244.1 L357.7,244.5 L358.1,241.0 L358.4,243.3 L358.7,245.6 L359.1,242.0 L359.4,242.7 L359.8,242.9 L360.1,243.8 L360.4,244.8 L360.8,241.5 L361.1,244.9 L361.5,240.3 L361.8,242.7 L362.1,244.5 L362.5,242.3 L362.8,242.8 L363.2,243.2 L363.5,246.2 L363.8,242.5 L364.2,245.3 L364.5,246.7 L364.9,243.4 L365.2,242.8 L365.5,244.0 L365.9,242.5 L366.2,243.4 L366.6,242.4 L366.9,241.9 L367.2,241.7 L367.6,245.2 L367.9,243.0 L368.3,242.3 L368.6,245.4 L369.0,243.7 L369.3,243.5 L369.6,242.9 L370.0,243.9 L370.3,243.5 L370.7,243.3 L371.0,243.7 L371.3,245.0 L371.7,243.7 L372.0,245.8 L372.4,245.3 L372.7,242.5 L373.0,242.6 L373.4,242.1 L373.7,242.9 L374.1,244.9 L374.4,243.4 L374.7,243.2 L375.1,244.1 L375.4,240.8 L375.8,244.4 L376.1,243.7 L376.4,244.9 L376.8,243.5 L377.1,245.3 L377.5,245.4 L377.8,243.5 L378.1,244.7 L378.5,242.6 L378.8,242.9 L379.2,242.4 L379.5,243.6 L379.8,242.2 L380.2,242.4 L380.5,243.6 L380.9,241.8 L381.2,244.7 L381.6,242.6 L381.9,243.6 L382.2,243.5 L382.6,245.3 L382.9,244.8 L383.3,243.6 L383.6,243.1 L383.9,245.1 L384.3,243.7 L384.6,242.4 L385.0,244.1 L385.3,244.8 L385.6,243.9 L386.0,244.0 L386.3,246.0 L386.7,243.2 L387.0,245.0 L387.3,246.1 L387.7,246.3 L388.0,242.3 L388.4,244.7 L388.7,244.1 L389.0,247.3 L389.4,245.7 L389.7,245.3 L390.1,245.6 L390.4,244.7 L390.7,242.4 L391.1,247.1 L391.4,241.5 L391.8,245.0 L392.1,245.0 L392.4,244.2 L392.8,245.3 L393.1,243.9 L393.5,245.1 L393.8,244.3 L394.2,242.9 L394.5,245.3 L394.8,243.1 L395.2,244.8 L395.5,242.4 L395.9,244.3 L396.2,244.7 L396.5,245.5 L396.9,242.4 L397.2,243.2 L397.6,243.9 L397.9,242.5 L398.2,244.8 L398.6,247.3 L398.9,244.9 L399.3,244.8 L399.6,242.7 L399.9,244.7 L400.3,244.7 L400.6,246.7 L401.0,243.4 L401.3,245.7 L401.6,243.4 L402.0,243.5 L402.3,243.3 L402.7,244.3 L403.0,241.8 L403.3,243.4 L403.7,246.0 L404.0,241.4 L404.4,245.2 L404.7,245.0 L405.0,243.3 L405.4,242.8 L405.7,245.5 L406.1,243.4 L406.4,244.4 L406.8,243.6 L407.1,242.3 L407.4,245.4 L407.8,244.9 L408.1,242.6 L408.5,245.5 L408.8,242.2 L409.1,242.1 L409.5,245.1 L409.8,243.3 L410.2,243.9 L410.5,246.2 L410.8,242.4 L411.2,244.8 L411.5,243.4 L411.9,244.1 L412.2,243.6 L412.5,242.8 L412.9,244.0 L413.2,242.6 L413.6,244.0 L413.9,242.6 L414.2,243.5 L414.6,244.1 L414.9,242.0 L415.3,243.8 L415.6,244.9 L415.9,244.1 L416.3,245.2 L416.6,242.5 L417.0,244.8 L417.3,244.4 L417.6,240.0 L418.0,243.9 L418.3,245.2 L418.7,243.8 L419.0,244.0 L419.3,243.7 L419.7,243.7 L420.0,242.5 L420.4,243.0 L420.7,240.8 L421.1,246.9 L421.4,243.9 L421.7,244.2 L422.1,244.8 L422.4,244.6 L422.8,243.8 L423.1,241.7 L423.4,242.2 L423.8,246.3 L424.1,244.5 L424.5,244.9 L424.8,242.4 L425.1,243.3 L425.5,244.3 L425.8,242.8 L426.2,245.6 L426.5,244.0"/>
<path fill="none" stroke="#9a4418" stroke-width="1" d="M430.5,201.9 L430.5,248.1 M433.5,201.0 L433.5,245.8 M437.5,203.1 L437.5,244.6 M439.5,200.4 L439.5,245.8 M441.5,202.2 L441.5,247.8 M443.5,202.5 L443.5,248.2 M445.5,201.3 L445.5,247.0 M447.5,202.2 L447.5,245.8 M450.5,201.0 L450.5,246.8 M452.5,200.8 L452.5,245.1 M456.5,203.2 L456.5,247.9 M458.5,202.8 L458.5,246.6 M461.5,202.7 L461.5,245.8 M463.5,202.9 L463.5,246.0 M465.5,200.9 L465.5,247.3 M467.5,200.4 L467.5,247.5 M469.5,200.8 L469.5,247.1 M471.5,202.0 L471.5,247.9 M475.5,203.3 L475.5,244.5 M478.5,201.1 L478.5,247.9 M480.5,201.9 L480.5,247.2 M482.5,203.0 L482.5,244.6 M486.5,203.0 L486.5,247.1 M488.5,202.9 L488.5,247.2 M491.5,201.9 L491.5,244.5 M494.5,200.9 L494.5,245.7 M497.5,202.2 L497.5,248.5 M499.5,200.6 L499.5,245.4 M503.5,201.3 L503.5,245.4 M505.5,200.9 L505.5,245.3 M509.5,200.5 L509.5,248.3 M511.5,200.7 L511.5,245.5 M514.5,202.0 L514.5,247.3 M516.5,200.4 L516.5,246.1 M522.5,202.2 L522.5,247.9 M524.5,202.4 L524.5,246.0 M527.5,200.7 L527.5,245.9 M529.5,203.1 L529.5,247.7 M533.5,200.4 L533.5,245.9 M535.5,201.0 L535.5,247.2 M541.5,200.8 L541.5,244.9 M543.5,201.9 L543.5,246.8 M545.5,202.5 L545.5,247.6 M548.5,202.8 L548.5,247.5 M554.5,202.2 L554.5,245.5 M557.5,202.2 L557.5,246.3 M559.5,202.0 L559.5,248.3 M562.5,203.0 L562.5,244.6 M565.5,201.1 L565.5,245.7 M567.5,202.7 L567.5,247.7 M571.5,201.8 L571.5,244.7 M573.5,202.6 L573.5,244.8 M576.5,203.2 L576.5,247.2 M578.5,203.2 L578.5,246.4 M580.5,203.0 L580.5,247.6 M582.5,201.1 L582.5,247.2 M584.5,200.6 L584.5,244.7 M587.5,200.6 L587.5,244.5 M590.5,201.2 L590.5,247.4 M592.5,200.5 L592.5,248.1 M598.5,203.0 L598.5,245.3 M601.5,200.4 L601.5,247.4 M604.5,201.3 L604.5,245.8 M606.5,200.8 L606.5,246.8 M609.5,202.0 L609.5,247.2 M612.5,201.9 L612.5,247.2 M615.5,201.2 L615.5,248.2 M617.5,200.6 L617.5,247.2 M621.5,201.4 L621.5,248.0 M623.5,202.5 L623.5,247.3 M629.5,200.4 L629.5,245.3 M631.5,201.8 L631.5,246.6 M633.5,201.5 L633.5,248.0 M635.5,201.5 L635.5,245.0 M638.5,201.5 L638.5,245.8 M641.5,200.6 L641.5,247.8 M647.5,201.2 L647.5,245.8 M650.5,200.4 L650.5,246.9 M654.5,202.4 L654.5,245.4 M656.5,203.0 L656.5,244.6 M659.5,202.6 L659.5,245.1 M661.5,200.6 L661.5,244.8 M663.5,203.0 L663.5,246.6 M666.5,203.3 L666.5,246.7 M668.5,201.9 L668.5,245.6 M670.5,200.3 L670.5,245.2 M673.5,201.9 L673.5,245.0 M675.5,201.8 L675.5,244.6 M678.5,200.8 L678.5,247.7 M680.5,200.7 L680.5,248.4 M682.5,201.3 L682.5,248.3 M684.5,201.1 L684.5,247.9 M686.5,202.9 L686.5,246.3 M688.5,202.5 L688.5,247.9 M691.5,203.2 L691.5,246.7 M694.5,201.1 L694.5,245.6 M698.5,200.6 L698.5,245.9 M700.5,202.6 L700.5,244.9 M702.5,200.8 L702.5,247.8 M704.5,202.6 L704.5,247.1 M706.5,200.8 L706.5,246.7 M708.5,200.5 L708.5,245.7 M711.5,203.1 L711.5,246.6 M714.5,201.1 L714.5,245.2 M720.5,201.5 L720.5,247.6 M723.5,201.9 L723.5,245.2 M727.5,200.7 L727.5,244.5 M730.5,200.7 L730.5,245.0 M732.5,200.7 L732.5,244.7 M735.5,202.0 L735.5,246.9 M737.5,202.3 L737.5,245.5 M739.5,201.7 L739.5,246.7 M742.5,203.1 L742.5,247.8 M744.5,203.0 L744.5,248.2 M750.5,203.0 L750.5,245.5 M752.5,202.3 L752.5,248.5 M754.5,203.2 L754.5,244.8 M756.5,202.5 L756.5,247.6 M428.5,204.4 L428.5,248.5 M435.5,204.5 L435.5,247.4 M437.5,200.9 L437.5,242.4 M445.5,202.0 L445.5,248.1 M456.5,206.0 L456.5,244.7 M450.5,204.3 L450.5,248.0 M465.5,202.4 L465.5,244.2 M469.5,203.4 L469.5,242.5 M481.5,201.8 L481.5,245.7 M483.5,202.9 L483.5,247.0 M487.5,201.8 L487.5,243.6 M512.5,201.0 L512.5,243.1 M507.5,205.7 L507.5,248.3 M507.5,204.7 L507.5,246.1 M513.5,200.7 L513.5,243.1 M523.5,205.1 L523.5,245.7 M531.5,201.4 L531.5,245.2 M551.5,203.5 L551.5,247.7 M567.5,204.3 L567.5,243.2 M586.5,202.1 L586.5,246.4 M586.5,203.0 L586.5,244.5 M618.5,204.2 L618.5,243.7 M619.5,203.4 L619.5,244.0 M625.5,203.2 L625.5,248.2 M633.5,206.1 L633.5,247.0 M628.5,205.6 L628.5,242.0 M633.5,204.3 L633.5,247.3 M639.5,200.9 L639.5,244.2 M651.5,201.1 L651.5,243.3 M658.5,203.8 L658.5,246.5 M659.5,204.6 L659.5,245.5 M664.5,203.6 L664.5,245.7 M677.5,203.1 L677.5,242.9 M689.5,203.1 L689.5,244.0 M702.5,201.0 L702.5,241.7 M716.5,204.0 L716.5,246.1 M716.5,202.4 L716.5,247.4 M719.5,204.4 L719.5,242.7 M725.5,202.6 L725.5,243.8 M728.5,202.7 L728.5,242.2 M732.5,202.9 L732.5,248.3"/>
<path fill="none" stroke="#d4662a" stroke-width="1.6" d="M426.5,244.9 L426.8,243.9 L427.2,244.6 L427.5,249.6 L427.8,242.3 L428.2,243.9 L428.5,243.1 L428.8,248.0 L429.2,238.7 L429.5,243.9 L429.8,249.8 L430.2,247.2 L430.5,245.6 M430.5,203.4 L430.8,201.2 L431.2,205.0 L431.5,205.2 L431.8,204.9 L432.2,205.2 L432.5,202.5 L432.8,203.5 L433.2,200.8 L433.5,202.3 M433.5,243.9 L433.8,243.9 L434.2,243.3 L434.5,242.3 L434.8,245.3 L435.2,243.2 L435.5,246.6 L435.8,244.3 L436.2,244.2 L436.5,245.0 L436.8,247.2 L437.2,244.7 L437.5,245.2 M437.5,205.6 L437.8,202.7 L438.2,205.5 L438.5,204.9 L438.8,203.0 L439.2,206.8 L439.5,202.8 M439.5,241.3 L439.8,244.8 L440.2,243.5 L440.5,244.6 L440.8,244.9 L441.2,245.6 L441.5,246.3 M441.5,203.1 L441.8,206.9 L442.2,204.4 L442.5,205.8 L442.8,200.0 L443.2,200.4 L443.5,205.7 M443.5,245.2 L443.8,244.5 L444.2,247.5 L444.5,245.4 L444.8,246.5 L445.2,245.9 L445.5,244.2 M445.5,203.0 L445.8,202.7 L446.2,203.8 L446.5,204.6 L446.8,202.4 L447.2,206.9 L447.5,201.7 M447.5,239.4 L447.8,242.3 L448.2,246.5 L448.5,243.8 L448.8,244.5 L449.2,242.6 L449.5,244.6 L449.8,243.9 L450.2,244.4 L450.5,249.8 M450.5,204.2 L450.8,204.8 L451.2,205.3 L451.5,204.3 L451.8,202.7 L452.2,201.1 L452.5,203.3 M452.5,244.6 L452.8,245.7 L453.2,244.4 L453.5,243.7 L453.8,244.8 L454.2,244.1 L454.5,245.3 L454.8,246.5 L455.2,246.0 L455.5,242.3 L455.8,244.4 L456.2,241.3 L456.5,244.4 M456.5,202.7 L456.8,203.6 L457.2,203.7 L457.5,207.1 L457.8,204.0 L458.2,202.7 L458.5,203.8 M458.5,241.1 L458.8,242.0 L459.2,245.4 L459.5,244.7 L459.8,244.2 L460.2,245.7 L460.5,245.5 L460.8,245.3 L461.2,243.8 L461.5,243.6 M461.5,202.5 L461.8,204.1 L462.2,201.2 L462.5,202.4 L462.8,201.7 L463.2,204.7 L463.5,205.8 M463.5,245.1 L463.8,248.5 L464.2,244.7 L464.5,242.9 L464.8,243.5 L465.2,240.1 L465.5,243.3 M465.5,202.8 L465.8,201.5 L466.2,202.2 L466.5,199.3 L466.8,204.8 L467.2,203.7 L467.5,202.5 M467.5,247.6 L467.8,245.6 L468.2,243.9 L468.5,241.6 L468.8,246.8 L469.2,244.6 L469.5,243.6 M469.5,204.5 L469.8,202.0 L470.2,199.5 L470.5,200.3 L470.8,205.3 L471.2,201.8 L471.5,208.7 M471.5,240.0 L471.8,245.5 L472.2,244.2 L472.5,242.5 L472.8,245.9 L473.2,246.7 L473.5,246.9 L473.8,247.0 L474.2,245.5 L474.5,244.2 L474.8,246.1 L475.2,243.5 L475.5,243.7 M475.5,204.8 L475.8,203.2 L476.2,201.4 L476.5,205.5 L476.8,204.7 L477.2,206.7 L477.5,204.1 L477.8,205.6 L478.2,203.3 L478.5,203.4 M478.5,243.8 L478.8,245.8 L479.2,247.2 L479.5,244.4 L479.8,247.3 L480.2,245.7 L480.5,244.7 M480.5,205.5 L480.8,205.1 L481.2,202.5 L481.5,202.5 L481.8,205.0 L482.2,202.1 L482.5,206.2 M482.5,246.4 L482.8,247.2 L483.2,245.8 L483.5,244.2 L483.8,243.7 L484.2,243.7 L484.5,246.4 L484.8,244.9 L485.2,245.8 L485.5,247.3 L485.8,241.9 L486.2,243.3 L486.5,245.1 M486.5,203.2 L486.8,199.9 L487.2,204.2 L487.5,202.3 L487.8,201.1 L488.2,204.4 L488.5,201.9 M488.5,245.9 L488.8,244.7 L489.2,245.6 L489.5,244.7 L489.8,246.7 L490.2,245.4 L490.5,246.3 L490.8,246.4 L491.2,245.3 L491.5,242.9 M491.5,202.8 L491.8,199.4 L492.2,200.9 L492.5,202.5 L492.8,205.2 L493.2,201.1 L493.5,204.8 L493.8,203.1 L494.2,203.7 L494.5,200.6 M494.5,243.0 L494.8,244.7 L495.2,242.7 L495.5,243.1 L495.8,243.8 L496.2,244.5 L496.5,246.3 L496.8,246.4 L497.2,242.1 L497.5,239.2 M497.5,201.1 L497.8,203.9 L498.2,203.9 L498.5,201.5 L498.8,205.2 L499.2,202.3 L499.5,201.6 M499.5,245.8 L499.8,246.3 L500.2,245.1 L500.5,247.0 L500.8,245.9 L501.2,245.1 L501.5,245.4 L501.8,242.2 L502.2,245.7 L502.5,244.7 L502.8,242.4 L503.2,244.0 L503.5,246.2 M503.5,207.2 L503.8,203.6 L504.2,202.3 L504.5,203.4 L504.8,205.9 L505.2,206.3 L505.5,203.3 M505.5,243.8 L505.8,242.1 L506.2,245.4 L506.5,248.7 L506.8,245.9 L507.2,244.0 L507.5,245.4 L507.8,244.7 L508.2,243.6 L508.5,247.2 L508.8,245.1 L509.2,240.5 L509.5,245.3 M509.5,205.8 L509.8,204.0 L510.2,201.7 L510.5,203.6 L510.8,204.4 L511.2,202.7 L511.5,202.8 M511.5,243.9 L511.8,243.3 L512.2,243.4 L512.5,243.8 L512.8,240.4 L513.2,244.7 L513.5,244.0 L513.8,243.5 L514.2,244.5 L514.5,240.0 M514.5,202.0 L514.8,201.7 L515.2,202.8 L515.5,204.8 L515.8,206.0 L516.2,203.4 L516.5,201.6 M516.5,244.2 L516.8,242.4 L517.2,245.1 L517.5,245.1 L517.8,246.2 L518.2,247.6 L518.5,241.8 L518.8,244.6 L519.2,243.3 L519.5,245.9 L519.8,246.8 L520.2,249.1 L520.5,243.7 L520.8,243.9 L521.2,243.7 L521.5,242.0 L521.8,242.0 L522.2,242.4 L522.5,241.5 M522.5,200.9 L522.8,202.2 L523.2,201.8 L523.5,201.8 L523.8,204.3 L524.2,202.2 L524.5,201.9 M524.5,245.4 L524.8,241.8 L525.2,245.5 L525.5,242.9 L525.8,243.6 L526.2,243.4 L526.5,244.2 L526.8,245.3 L527.2,245.8 L527.5,240.4 M527.5,204.1 L527.8,204.0 L528.2,200.7 L528.5,200.2 L528.8,204.6 L529.2,204.0 L529.5,203.4 M529.5,243.1 L529.8,243.2 L530.2,244.7 L530.5,244.0 L530.8,246.4 L531.2,244.0 L531.5,247.5 L531.8,247.2 L532.2,245.0 L532.5,245.0 L532.8,242.9 L533.2,244.8 L533.5,245.4 M533.5,203.0 L533.8,203.1 L534.2,200.8 L534.5,204.0 L534.8,203.1 L535.2,203.8 L535.5,201.7 M535.5,245.3 L535.8,247.9 L536.2,242.7 L536.5,243.6 L536.8,244.1 L537.2,244.8 L537.5,243.7 L537.8,243.7 L538.2,244.2 L538.5,246.1 L538.8,245.6 L539.2,247.8 L539.5,249.4 L539.8,240.9 L540.2,242.6 L540.5,247.6 L540.8,243.6 L541.2,243.2 L541.5,242.8 M541.5,204.6 L541.8,205.3 L542.2,201.3 L542.5,204.5 L542.8,202.6 L543.2,200.5 L543.5,200.3 M543.5,243.1 L543.8,244.9 L544.2,245.0 L544.5,247.1 L544.8,248.6 L545.2,243.8 L545.5,246.4 M545.5,202.7 L545.8,206.5 L546.2,201.5 L546.5,206.5 L546.8,203.3 L547.2,203.2 L547.5,202.5 L547.8,203.1 L548.2,203.8 L548.5,202.8 M548.5,242.1 L548.8,243.0 L549.2,242.5 L549.5,245.7 L549.8,245.1 L550.2,246.5 L550.5,244.4 L550.8,247.3 L551.2,245.3 L551.5,245.1 L551.8,245.3 L552.2,246.7 L552.5,244.4 L552.8,244.4 L553.2,248.1 L553.5,244.2 L553.8,243.7 L554.2,245.3 L554.5,246.9 M554.5,198.7 L554.8,205.2 L555.2,199.2 L555.5,203.5 L555.8,204.2 L556.2,204.0 L556.5,204.5 L556.8,206.7 L557.2,200.9 L557.5,202.3 M557.5,244.7 L557.8,242.7 L558.2,242.1 L558.5,244.8 L558.8,242.5 L559.2,242.4 L559.5,245.1 M559.5,202.1 L559.8,200.5 L560.2,202.2 L560.5,205.5 L560.8,203.7 L561.2,203.8 L561.5,201.9 L561.8,204.5 L562.2,204.1 L562.5,203.5 M562.5,244.7 L562.8,244.1 L563.2,243.8 L563.5,246.2 L563.8,244.1 L564.2,245.5 L564.5,241.4 L564.8,242.5 L565.2,243.6 L565.5,245.3 M565.5,203.4 L565.8,201.9 L566.2,202.8 L566.5,200.0 L566.8,204.4 L567.2,203.9 L567.5,202.0 M567.5,247.5 L567.8,242.8 L568.2,245.0 L568.5,241.2 L568.8,245.1 L569.2,244.2 L569.5,248.0 L569.8,246.8 L570.2,243.3 L570.5,248.8 L570.8,243.4 L571.2,247.3 L571.5,249.7 M571.5,204.5 L571.8,204.4 L572.2,199.9 L572.5,204.6 L572.8,202.8 L573.2,202.1 L573.5,206.3 M573.5,242.2 L573.8,244.1 L574.2,246.0 L574.5,240.5 L574.8,246.7 L575.2,241.6 L575.5,242.5 L575.8,245.8 L576.2,245.1 L576.5,244.3 M576.5,201.6 L576.8,205.2 L577.2,203.9 L577.5,201.5 L577.8,202.7 L578.2,201.9 L578.5,202.7 M578.5,243.4 L578.8,246.4 L579.2,243.4 L579.5,245.5 L579.8,246.0 L580.2,245.0 L580.5,244.2 M580.5,204.2 L580.8,207.2 L581.2,203.8 L581.5,202.0 L581.8,204.9 L582.2,202.9 L582.5,203.2 M582.5,242.4 L582.8,243.7 L583.2,242.7 L583.5,247.1 L583.8,241.1 L584.2,244.4 L584.5,246.6 M584.5,199.8 L584.8,201.0 L585.2,203.9 L585.5,201.3 L585.8,202.2 L586.2,204.9 L586.5,199.9 L586.8,206.3 L587.2,204.3 L587.5,201.4 M587.5,242.8 L587.8,242.7 L588.2,244.8 L588.5,245.6 L588.8,244.1 L589.2,243.5 L589.5,244.1 L589.8,244.6 L590.2,242.3 L590.5,244.4 M590.5,201.7 L590.8,203.8 L591.2,206.4 L591.5,205.7 L591.8,201.0 L592.2,203.2 L592.5,204.1 M592.5,248.6 L592.8,246.1 L593.2,244.0 L593.5,244.4 L593.8,242.8 L594.2,244.7 L594.5,247.6 L594.8,246.9 L595.2,245.4 L595.5,244.1 L595.8,243.1 L596.2,245.0 L596.5,244.1 L596.8,243.7 L597.2,243.5 L597.5,246.2 L597.8,242.5 L598.2,244.8 L598.5,240.8 M598.5,200.7 L598.8,204.0 L599.2,202.1 L599.5,203.4 L599.8,205.4 L600.2,201.7 L600.5,201.3 L600.8,199.9 L601.2,208.1 L601.5,203.2 M601.5,244.8 L601.8,244.1 L602.2,240.9 L602.5,245.8 L602.8,244.9 L603.2,244.7 L603.5,247.8 L603.8,245.7 L604.2,243.6 L604.5,248.5 M604.5,206.3 L604.8,200.2 L605.2,203.8 L605.5,203.5 L605.8,201.0 L606.2,203.0 L606.5,205.6 M606.5,243.8 L606.8,243.7 L607.2,245.8 L607.5,244.3 L607.8,245.2 L608.2,249.3 L608.5,248.6 L608.8,243.2 L609.2,246.5 L609.5,241.4 M609.5,206.1 L609.8,204.7 L610.2,205.2 L610.5,200.2 L610.8,204.0 L611.2,203.5 L611.5,203.0 L611.8,201.1 L612.2,207.9 L612.5,199.7 M612.5,243.0 L612.8,242.0 L613.2,242.7 L613.5,246.5 L613.8,248.2 L614.2,246.2 L614.5,243.9 L614.8,241.1 L615.2,243.2 L615.5,244.8 M615.5,202.4 L615.8,203.0 L616.2,205.2 L616.5,203.3 L616.8,203.3 L617.2,204.7 L617.5,203.7 M617.5,246.4 L617.8,244.3 L618.2,244.2 L618.5,246.3 L618.8,242.6 L619.2,244.2 L619.5,241.9 L619.8,243.4 L620.2,245.9 L620.5,247.0 L620.8,245.7 L621.2,247.2 L621.5,245.5 M621.5,200.6 L621.8,201.2 L622.2,206.7 L622.5,202.4 L622.8,205.4 L623.2,203.2 L623.5,205.9 M623.5,244.7 L623.8,243.1 L624.2,243.3 L624.5,248.1 L624.8,244.6 L625.2,240.6 L625.5,240.6 L625.8,241.4 L626.2,242.4 L626.5,245.3 L626.8,238.7 L627.2,240.6 L627.5,245.5 L627.8,244.3 L628.2,244.7 L628.5,243.7 L628.8,246.1 L629.2,246.4 L629.5,244.4 M629.5,204.6 L629.8,204.2 L630.2,202.5 L630.5,203.9 L630.8,201.7 L631.2,202.1 L631.5,203.9 M631.5,242.9 L631.8,243.2 L632.2,244.2 L632.5,246.1 L632.8,244.6 L633.2,245.7 L633.5,243.5 M633.5,203.1 L633.8,205.6 L634.2,204.9 L634.5,204.0 L634.8,202.5 L635.2,206.7 L635.5,203.7 M635.5,241.6 L635.8,244.5 L636.2,243.9 L636.5,246.7 L636.8,246.8 L637.2,247.6 L637.5,239.7 L637.8,244.7 L638.2,243.4 L638.5,242.1 M638.5,202.2 L638.8,205.5 L639.2,202.9 L639.5,202.7 L639.8,208.6 L640.2,202.8 L640.5,203.8 L640.8,202.6 L641.2,202.0 L641.5,203.6 M641.5,246.1 L641.8,242.4 L642.2,241.0 L642.5,248.5 L642.8,244.3 L643.2,245.8 L643.5,243.8 L643.8,244.9 L644.2,243.8 L644.5,243.8 L644.8,244.1 L645.2,248.3 L645.5,247.2 L645.8,246.6 L646.2,246.7 L646.5,244.4 L646.8,244.5 L647.2,244.7 L647.5,243.9 M647.5,201.2 L647.8,203.3 L648.2,206.2 L648.5,203.8 L648.8,205.6 L649.2,203.9 L649.5,205.9 L649.8,202.0 L650.2,205.6 L650.5,205.3 M650.5,244.8 L650.8,242.0 L651.2,242.5 L651.5,245.7 L651.8,244.2 L652.2,246.0 L652.5,245.8 L652.8,243.4 L653.2,244.7 L653.5,242.7 L653.8,244.5 L654.2,244.6 L654.5,247.6 M654.5,202.6 L654.8,204.3 L655.2,203.7 L655.5,205.8 L655.8,204.1 L656.2,199.9 L656.5,200.0 M656.5,244.7 L656.8,245.6 L657.2,246.7 L657.5,244.9 L657.8,242.9 L658.2,245.4 L658.5,246.1 L658.8,244.0 L659.2,245.6 L659.5,242.4 M659.5,200.3 L659.8,200.8 L660.2,206.1 L660.5,204.2 L660.8,203.6 L661.2,206.2 L661.5,204.8 M661.5,241.8 L661.8,248.6 L662.2,243.6 L662.5,246.6 L662.8,243.4 L663.2,246.2 L663.5,245.1 M663.5,203.1 L663.8,203.8 L664.2,204.6 L664.5,202.1 L664.8,204.9 L665.2,204.2 L665.5,203.9 L665.8,205.2 L666.2,201.2 L666.5,201.4 M666.5,246.4 L666.8,245.2 L667.2,245.0 L667.5,243.1 L667.8,245.1 L668.2,243.2 L668.5,241.9 M668.5,205.4 L668.8,200.4 L669.2,202.6 L669.5,206.1 L669.8,202.4 L670.2,203.5 L670.5,204.5 M670.5,243.7 L670.8,244.2 L671.2,243.8 L671.5,242.6 L671.8,245.4 L672.2,244.8 L672.5,247.9 L672.8,243.0 L673.2,245.9 L673.5,243.2 M673.5,202.6 L673.8,198.8 L674.2,203.3 L674.5,203.5 L674.8,203.9 L675.2,203.9 L675.5,204.2 M675.5,242.1 L675.8,243.9 L676.2,243.7 L676.5,246.2 L676.8,246.4 L677.2,242.4 L677.5,241.8 L677.8,245.0 L678.2,243.6 L678.5,244.1 M678.5,204.3 L678.8,205.2 L679.2,201.2 L679.5,204.1 L679.8,201.2 L680.2,206.4 L680.5,201.4 M680.5,244.9 L680.8,246.2 L681.2,247.5 L681.5,245.6 L681.8,239.0 L682.2,245.4 L682.5,244.0 M682.5,205.3 L682.8,203.5 L683.2,199.4 L683.5,204.6 L683.8,202.6 L684.2,202.8 L684.5,202.8 M684.5,243.4 L684.8,244.5 L685.2,243.9 L685.5,244.2 L685.8,243.7 L686.2,244.7 L686.5,241.5 M686.5,205.0 L686.8,201.3 L687.2,203.8 L687.5,206.5 L687.8,204.4 L688.2,201.5 L688.5,202.5 M688.5,245.4 L688.8,244.9 L689.2,246.3 L689.5,245.5 L689.8,246.8 L690.2,247.2 L690.5,241.6 L690.8,242.1 L691.2,243.4 L691.5,244.1 M691.5,200.9 L691.8,201.9 L692.2,202.9 L692.5,202.9 L692.8,203.9 L693.2,205.2 L693.5,205.8 L693.8,199.5 L694.2,202.1 L694.5,202.5 M694.5,240.8 L694.8,246.9 L695.2,244.8 L695.5,245.7 L695.8,245.0 L696.2,244.5 L696.5,245.9 L696.8,240.9 L697.2,244.7 L697.5,244.8 L697.8,243.2 L698.2,243.8 L698.5,241.4 M698.5,200.5 L698.8,202.1 L699.2,202.3 L699.5,203.4 L699.8,201.8 L700.2,205.3 L700.5,201.2 M700.5,246.9 L700.8,243.8 L701.2,244.4 L701.5,247.2 L701.8,244.2 L702.2,245.4 L702.5,247.0 M702.5,203.9 L702.8,203.5 L703.2,202.3 L703.5,203.3 L703.8,201.8 L704.2,200.4 L704.5,206.6 M704.5,247.1 L704.8,244.2 L705.2,246.9 L705.5,243.5 L705.8,243.0 L706.2,243.7 L706.5,242.7 M706.5,205.0 L706.8,205.3 L707.2,201.0 L707.5,203.4 L707.8,203.7 L708.2,201.9 L708.5,204.8 M708.5,241.9 L708.8,244.2 L709.2,241.8 L709.5,243.6 L709.8,242.2 L710.2,243.6 L710.5,244.6 L710.8,245.5 L711.2,240.8 L711.5,246.0 M711.5,201.3 L711.8,202.3 L712.2,202.2 L712.5,203.6 L712.8,203.5 L713.2,202.5 L713.5,203.5 L713.8,204.8 L714.2,203.7 L714.5,204.5 M714.5,245.8 L714.8,246.9 L715.2,242.4 L715.5,242.9 L715.8,241.9 L716.2,244.8 L716.5,243.9 L716.8,246.5 L717.2,244.0 L717.5,243.3 L717.8,244.2 L718.2,242.0 L718.5,247.1 L718.8,244.1 L719.2,241.4 L719.5,243.5 L719.8,244.1 L720.2,246.3 L720.5,241.7 M720.5,204.6 L720.8,208.5 L721.2,201.8 L721.5,197.1 L721.8,203.5 L722.2,201.9 L722.5,202.0 L722.8,203.6 L723.2,203.5 L723.5,200.8 M723.5,242.9 L723.8,241.6 L724.2,245.7 L724.5,242.4 L724.8,242.9 L725.2,241.8 L725.5,243.7 L725.8,243.7 L726.2,244.2 L726.5,243.2 L726.8,241.9 L727.2,240.0 L727.5,246.7 M727.5,201.5 L727.8,203.2 L728.2,205.3 L728.5,206.7 L728.8,204.6 L729.2,206.0 L729.5,204.4 L729.8,205.3 L730.2,204.1 L730.5,203.3 M730.5,248.6 L730.8,243.9 L731.2,241.9 L731.5,245.4 L731.8,243.4 L732.2,244.8 L732.5,243.2 M732.5,204.9 L732.8,201.2 L733.2,202.8 L733.5,200.1 L733.8,202.2 L734.2,201.9 L734.5,202.3 L734.8,205.8 L735.2,202.6 L735.5,203.0 M735.5,246.9 L735.8,243.2 L736.2,242.7 L736.5,244.2 L736.8,245.6 L737.2,244.7 L737.5,246.5 M737.5,203.0 L737.8,205.9 L738.2,200.0 L738.5,203.9 L738.8,203.8 L739.2,202.0 L739.5,205.7 M739.5,244.2 L739.8,244.0 L740.2,242.5 L740.5,243.9 L740.8,243.2 L741.2,245.5 L741.5,243.4 L741.8,245.9 L742.2,243.0 L742.5,242.5 M742.5,204.8 L742.8,199.0 L743.2,201.6 L743.5,203.3 L743.8,202.5 L744.2,203.6 L744.5,203.3 M744.5,244.4 L744.8,245.0 L745.2,245.5 L745.5,246.5 L745.8,244.7 L746.2,244.2 L746.5,244.7 L746.8,244.8 L747.2,246.1 L747.5,245.0 L747.8,239.5 L748.2,244.8 L748.5,242.3 L748.8,241.5 L749.2,241.0 L749.5,242.2 L749.8,243.8 L750.2,243.3 L750.5,243.0 M750.5,204.9 L750.8,202.0 L751.2,203.4 L751.5,199.9 L751.8,203.5 L752.2,202.9 L752.5,205.8 M752.5,245.4 L752.8,246.6 L753.2,244.0 L753.5,243.2 L753.8,243.6 L754.2,242.2 L754.5,244.5 M754.5,197.0 L754.8,201.1 L755.2,203.9 L755.5,203.7 L755.8,204.0 L756.2,202.8 L756.5,202.6 M756.5,243.3 L757.0,244.2"/>
<polyline fill="none" stroke="#26c0c8" stroke-width="1" stroke-opacity="0.55" points="25.0,212.4 25.3,212.8 25.7,211.8 26.0,213.9 26.4,215.3 26.7,213.7 27.0,213.4 27.4,212.9 27.7,214.6 28.1,213.4 28.4,215.9 28.7,213.1 29.1,212.9 29.4,212.7 29.8,210.7 30.1,213.8 30.4,213.6 30.8,211.2 31.1,211.8 31.4,211.9 31.8,213.0 32.1,212.0 32.5,214.5 32.8,215.1 33.1,212.5 33.5,213.5 33.8,211.9 34.2,215.3 34.5,211.9 34.8,212.3 35.2,213.4 35.5,212.3 35.9,217.2 36.2,213.2 36.5,213.1 36.9,212.0 37.2,213.3 37.6,212.6 37.9,212.8 38.2,214.8 38.6,212.6 38.9,214.0 39.2,212.5 39.6,214.8 39.9,212.4 40.3,212.1 40.6,213.1 40.9,215.2 41.3,212.9 41.6,212.2 42.0,213.2 42.3,212.4 42.6,213.8 43.0,212.5 43.3,213.9 43.7,214.7 44.0,214.1 44.3,215.5 44.7,213.9 45.0,216.0 45.4,215.2 45.7,213.0 46.0,214.5 46.4,212.4 46.7,213.1 47.1,213.3 47.4,212.3 47.7,213.9 48.1,213.3 48.4,216.2 48.8,214.5 49.1,213.1 49.4,212.5 49.8,212.7 50.1,212.5 50.4,212.4 50.8,213.4 51.1,211.5 51.5,213.0 51.8,214.1 52.1,212.6 52.5,211.9 52.8,212.7 53.2,214.6 53.5,212.4 53.8,215.6 54.2,211.1 54.5,212.3 54.9,214.3 55.2,215.3 55.5,213.1 55.9,211.1 56.2,213.0 56.6,212.2 56.9,212.5 57.2,212.9 57.6,212.6 57.9,213.4 58.2,213.6 58.6,213.0 58.9,210.9 59.3,213.2 59.6,209.8 59.9,213.5 60.3,212.8 60.6,212.1 61.0,216.3 61.3,215.7 61.6,215.3 62.0,213.7 62.3,212.7 62.7,214.1 63.0,213.5 63.5,196.0 63.8,193.6 64.2,193.5 64.5,192.9 64.8,193.6 65.2,194.9 65.5,193.8 66.0,212.2 66.3,214.9 66.7,213.6 67.0,216.5 67.3,213.7 67.7,215.2 68.0,213.5 68.5,192.4 68.9,197.1 69.2,193.8 69.6,193.6 69.9,195.8 70.3,194.0 70.6,192.0 71.0,193.8 71.5,214.3 71.8,214.2 72.2,213.4 72.5,212.8 72.9,211.2 73.2,215.8 73.5,212.8 73.9,213.9 74.2,212.7 74.6,212.4 74.9,213.8 75.3,212.2 75.6,214.7 75.9,211.2 76.3,214.3 76.6,215.1 77.0,212.8 77.3,213.7 77.6,214.6 78.0,212.8 78.3,213.1 78.7,213.2 79.0,217.2 79.4,212.3 79.7,213.2 80.0,212.8 80.4,212.7 80.7,212.2 81.1,212.5 81.4,213.7 81.7,215.1 82.1,215.7 82.4,211.7 82.8,212.1 83.1,213.4 83.5,212.1 83.8,212.4 84.1,213.1 84.5,212.7 84.8,212.3 85.2,213.7 85.5,212.4 85.8,213.1 86.2,213.9 86.5,214.4 86.9,213.7 87.2,215.0 87.6,213.7 87.9,211.4 88.2,215.5 88.6,217.4 88.9,214.6 89.3,215.7 89.6,213.5 90.0,195.3 90.3,193.1 90.7,194.6 91.0,192.8 91.4,193.0 91.7,194.5 92.0,193.9 92.4,192.8 92.7,191.8 93.1,194.9 93.4,193.8 93.7,194.0 94.1,192.5 94.4,192.7 94.8,193.7 95.1,191.2 95.4,195.4 95.8,193.8 96.1,195.3 96.5,195.1 96.8,193.0 97.2,194.5 97.5,192.2 97.8,192.5 98.2,195.6 98.5,193.0 98.9,192.7 99.2,194.4 99.5,193.8 99.9,195.1 100.2,192.0 100.6,193.4 100.9,192.3 101.2,193.8 101.6,193.4 101.9,192.5 102.3,191.3 102.6,191.9 102.9,195.1 103.3,193.2 103.6,192.2 104.0,194.0 104.3,192.2 104.6,195.0 105.0,195.0 105.3,193.8 105.7,193.0 106.0,191.2 106.3,194.4 106.7,196.6 107.0,194.0 107.4,193.0 107.7,194.9 108.0,193.2 108.4,192.1 108.7,193.6 109.1,194.6 109.4,191.2 109.8,195.2 110.1,196.0 110.4,193.7 110.8,193.1 111.1,191.8 111.5,194.5 111.8,193.4 112.1,195.5 112.5,195.9 112.8,195.5 113.2,194.0 113.5,191.2 113.8,195.6 114.2,193.1 114.5,193.1 114.9,195.3 115.2,194.4 115.5,192.3 115.9,193.3 116.2,193.4 116.6,193.6 116.9,192.1 117.2,195.8 117.6,193.6 117.9,194.7 118.3,195.2 118.6,196.8 118.9,194.8 119.3,192.8 119.6,193.2 120.0,195.0 120.3,196.1 120.6,191.7 121.0,196.4 121.3,193.0 121.7,193.5 122.0,193.2 122.4,194.6 122.7,193.5 123.0,193.7 123.4,192.5 123.7,195.8 124.1,194.3 124.4,193.7 124.7,196.7 125.1,194.7 125.4,195.7 125.8,193.4 126.1,194.0 126.4,193.6 126.8,195.0 127.1,194.2 127.5,191.4 127.8,194.6 128.1,193.5 128.5,194.1 128.8,195.1 129.2,193.4 129.5,194.7 129.8,193.8 130.2,193.7 130.5,193.1 130.9,193.6 131.2,193.3 131.5,194.9 131.9,190.6 132.2,194.6 132.6,193.7 132.9,192.3 133.2,194.9 133.6,193.7 133.9,194.6 134.3,195.6 134.6,194.1 135.0,191.6 135.3,191.6 135.6,193.7 136.0,192.1 136.3,196.8 136.7,193.6 137.0,191.3 137.3,190.8 137.7,193.0 138.0,190.4 138.4,194.5 138.7,190.6 139.0,195.0 139.4,193.1 139.7,195.3 140.1,192.2 140.4,193.8 142.5,127.0 143.5,113.3 143.9,114.7 144.2,110.1 144.6,112.5 145.0,112.8 145.3,109.4 145.7,110.6 146.0,113.1 146.4,112.8 146.7,113.0 147.0,110.6 147.4,110.3 147.7,110.5 148.1,110.3 148.4,111.9 148.7,112.0 149.1,111.5 149.4,109.8 149.8,111.9 150.1,111.5 150.4,111.1 150.8,112.5 151.1,110.3 151.5,111.0 151.8,112.3 152.1,109.7 152.5,112.0 152.8,111.8 153.1,112.9 153.5,112.6 153.8,110.0 154.2,113.3 154.5,110.2 154.8,109.1 155.2,110.4 155.5,110.3 155.9,109.6 156.2,112.2 156.5,111.5 156.9,111.7 157.2,108.9 157.6,113.3 157.9,111.5 158.2,112.4 158.6,111.3 158.9,111.3 159.3,111.9 159.6,111.0 159.9,112.7 160.3,110.1 160.6,108.0 161.0,110.3 161.3,110.8 161.6,111.4 162.0,110.9 162.3,111.4 162.7,111.4 163.0,110.6 163.3,111.6 163.7,111.6 164.0,109.7 164.4,108.4 164.7,111.1 165.0,111.5 165.4,112.3 165.7,112.4 166.1,111.2 166.4,112.4 166.7,110.0 167.1,110.2 167.4,112.7 167.7,109.2 168.1,110.8 168.4,109.4 168.8,109.1 169.1,113.8 169.4,108.4 169.8,113.3 170.1,110.2 170.5,109.8 170.8,108.5 171.1,111.1 171.5,111.7 171.8,111.6 172.2,109.6 172.5,113.1 172.8,111.1 173.2,111.5 173.5,111.6 173.9,111.6 174.2,110.4 174.5,111.3 174.9,109.8 175.2,111.2 175.6,109.5 175.9,108.8 176.2,110.0 176.6,110.6 176.9,109.9 177.3,110.4 177.6,110.1 177.9,110.9 178.3,113.2 178.6,111.6 179.0,112.0 179.3,112.2 179.6,112.0 180.0,111.4 180.3,112.0 180.6,112.3 181.0,110.6 181.3,110.4 181.7,110.8 182.0,110.7 182.3,111.5 182.7,110.2 183.0,110.2 183.4,111.1 183.7,111.5 184.0,110.7 184.4,108.8 184.7,110.5 185.1,112.0 185.4,110.5 185.7,112.5 186.1,110.1 186.4,110.5 186.8,111.9 187.1,112.4 187.4,110.4 187.8,112.8 188.1,111.1 188.5,111.4 188.8,113.3 189.1,112.0 189.5,110.5 189.8,110.7 190.2,109.6 190.5,112.4 190.8,111.3 191.2,113.4 191.5,112.5 191.9,110.9 192.2,110.0 192.5,110.4 192.9,112.6 193.2,110.7 193.6,112.4 193.9,112.5 194.2,112.9 194.6,111.2 194.9,111.8 195.2,109.1 195.6,111.3 195.9,110.9 196.3,112.1 196.6,108.4 196.9,110.4 197.3,114.0 197.6,111.1 198.0,110.2 198.3,111.0 198.6,110.6 199.0,110.4 199.3,111.7 199.7,111.2 200.0,112.4 200.3,114.3 200.7,111.8 201.0,111.3 201.4,112.9 201.7,108.9 202.0,113.3 202.4,109.3 202.7,110.2 203.1,110.9 203.4,109.0 203.7,110.0 204.1,111.1 204.4,111.4 204.8,108.9 205.1,106.7 205.4,111.7 205.8,108.6 206.1,111.3 206.5,111.5 206.8,111.9 207.1,110.1 207.5,110.0 207.8,115.1 208.2,110.7 208.5,109.4 208.8,109.0 209.2,110.5 209.5,113.2 209.8,111.8 210.2,109.6 210.5,108.9 210.9,110.0 211.2,110.8 211.5,111.2 211.9,111.5 212.2,112.4 212.6,109.0 212.9,108.7 213.2,110.7 213.6,111.6 213.9,110.1 214.3,111.2 214.6,110.7 214.9,112.4 215.3,110.5 215.6,110.2 216.0,111.5 216.3,112.2 216.6,109.9 217.0,110.7 217.3,109.8 217.7,109.3 218.0,114.2 218.3,110.0 218.7,110.4 219.0,110.4 219.4,109.7 219.7,110.6 220.0,110.7 220.4,111.3 220.7,110.1 221.1,108.9 221.4,110.6 221.7,111.8 222.1,112.6 222.4,110.7 222.7,110.5 223.1,109.8 223.4,112.9 223.8,110.0 224.1,110.1 224.4,110.8 224.8,110.5 225.1,110.9 225.5,111.4 225.8,113.2 226.1,111.5 226.5,111.4 226.8,108.8 227.2,113.9 227.5,111.5 227.8,112.0 228.2,110.4 228.5,110.7 228.9,110.3 229.2,110.6 229.5,110.3 229.9,111.9 230.2,112.3 230.6,110.8 230.9,110.4 231.2,112.0 231.6,110.5 231.9,111.6 232.3,109.9 232.6,112.8 232.9,110.2 233.3,111.6 233.6,113.2 234.0,111.4 234.3,110.5 234.6,111.9 235.0,112.9 235.3,107.8 235.7,110.3 236.0,110.6 236.3,112.0 236.7,108.8 237.0,111.9 237.3,110.9 237.7,111.6 238.0,109.4 238.4,112.6 238.7,114.4 239.0,111.0 239.4,111.7 239.7,109.4 240.1,106.9 240.4,110.7 240.7,110.5 241.1,111.8 241.4,110.9 241.8,109.0 242.1,107.8 242.4,112.4 242.8,112.2 243.1,110.6 243.5,110.5 243.8,110.8 244.6,215.0 244.9,215.3 245.3,216.3 245.7,221.8 246.0,220.1 246.4,221.7 246.7,224.3 247.1,223.3 247.4,224.4 247.8,225.2 248.1,223.6 248.5,221.5 248.8,221.2 249.2,220.5 249.5,224.6 249.9,221.5 250.2,223.4 250.5,223.7 250.9,224.0 251.2,223.5 251.6,225.3 251.9,224.0 252.2,225.0 252.6,223.4 252.9,223.6 253.3,223.8 253.6,224.2 253.9,224.6 254.3,222.9 254.6,224.4 254.9,227.4 255.3,219.8 255.6,224.4 256.0,223.4 256.3,223.2 256.6,222.7 257.0,221.9 257.3,223.9 257.7,222.5 258.0,225.7 258.3,224.0 258.7,226.0 259.0,223.7 259.4,221.5 259.7,224.1 260.0,223.8 260.4,224.7 260.7,220.2 261.1,223.6 261.4,225.6 261.7,223.6 262.1,220.7 262.4,224.1 262.8,224.2 263.1,225.5 263.4,224.3 263.8,222.1 264.1,225.2 264.5,224.5 264.8,225.2 265.1,223.3 265.5,225.0 265.8,220.6 266.2,221.7 266.5,224.4 266.8,225.8 267.2,224.3 267.5,223.8 267.9,223.3 268.2,222.9 268.5,225.1 268.9,221.0 269.2,223.9 269.5,225.7 269.9,221.2 270.2,220.4 270.6,222.2 270.9,223.5 271.2,224.3 271.6,222.7 271.9,224.6 272.3,222.8 272.6,221.3 272.9,225.0 273.3,223.5 273.6,222.6 274.0,221.2 274.3,220.0 274.6,222.1 275.0,224.5 275.3,222.3 275.7,221.6 276.0,222.4 276.3,224.4 276.7,224.4 277.0,225.3 277.4,222.3 277.7,225.7 278.0,225.8 278.4,224.1 278.7,225.0 279.1,225.9 279.4,224.1 279.7,222.3 280.1,224.3 280.4,224.1 280.8,224.5 281.1,227.2 281.4,223.6 281.8,223.2 282.1,225.3 282.4,223.6 282.8,221.8 283.1,224.0 283.5,224.9 283.8,221.3 284.1,225.9 284.5,226.3 284.8,222.0 285.2,223.9 285.5,224.1 285.8,224.3 286.2,223.9 286.5,224.5 286.9,222.5 287.2,223.2 287.5,223.4 287.9,224.2 288.2,226.3 288.6,224.8 288.9,222.1 289.2,224.1 289.6,226.2 289.9,226.4 290.3,225.9 290.6,223.7 290.9,224.6 291.3,223.8 291.6,222.0 292.0,223.6 292.3,223.0 292.6,221.8 293.0,223.3 293.3,223.0 293.6,223.2 294.0,224.6 294.3,222.1 294.7,223.7 295.0,224.1 295.3,224.0 295.7,223.9 296.0,223.7 296.4,221.3 296.7,220.6 297.0,222.7 297.4,223.0 297.7,222.2 298.1,222.5 298.4,223.0 298.7,226.0 299.1,223.4 299.4,224.7 299.8,224.5 300.1,223.8 300.4,224.9 300.8,222.8 301.1,223.3 301.5,221.9 301.8,223.4 302.1,224.8 302.5,222.3 302.8,223.4 303.2,223.2 303.5,223.5 303.8,223.0 304.2,224.0 304.5,221.8 304.9,223.7 305.2,225.9 305.5,222.0 305.9,224.7 306.2,222.6 306.6,222.7 306.9,226.1 307.2,224.5 307.6,224.4 307.9,225.9 308.2,224.5 308.6,223.4 308.9,220.3 309.3,224.5 309.6,226.0 309.9,222.9 310.3,221.8 310.6,221.1 311.0,224.4 311.3,220.2 311.6,224.1 312.0,224.7 312.3,222.9 312.7,222.1 313.0,223.1 313.3,225.7 313.7,221.9 314.0,222.4 314.4,224.3 314.7,222.7 315.0,225.4 315.4,222.5 315.7,221.8 316.1,221.4 316.4,223.2 316.7,225.1 317.1,223.6 317.4,222.7 317.8,221.4 318.1,223.9 318.4,222.6 318.8,226.8 319.1,221.9 319.5,221.6 319.8,221.7 320.1,223.8 320.5,224.4 320.8,223.9 321.2,225.2 321.5,224.5 321.8,222.7 322.2,225.9 322.5,222.4 322.9,223.8 323.2,223.6 323.5,225.1 323.9,223.5 324.2,224.0 324.6,220.8 324.9,223.4 325.2,223.7 325.6,225.7 325.9,221.1 326.3,221.8 326.6,224.7 326.9,226.8 327.3,223.7 327.6,220.5 328.0,221.0 328.3,223.0 328.6,222.3 329.0,224.2 329.3,225.0 329.7,224.6 330.0,222.2 330.3,222.5 330.7,223.3 331.0,224.1 331.4,224.3 331.7,223.0 332.0,225.0 332.4,224.5 332.7,223.1 333.1,223.8 333.4,225.8 333.7,224.4 334.1,223.1 334.4,223.1 334.8,224.9 335.1,224.1 335.4,223.7 335.8,222.5 336.1,223.2 336.5,223.8 336.8,226.0 337.1,221.7 337.5,223.7 337.8,222.2 338.2,221.6 338.5,226.8 338.8,221.7 339.2,225.3 339.5,225.0 339.9,224.2 340.2,223.6 340.5,223.5 340.9,224.2 341.2,224.1 341.6,224.3 341.9,224.4 342.2,221.2 342.6,221.7 342.9,223.5 343.3,223.5 343.6,221.6 343.9,224.9 344.3,224.2 344.6,224.0 345.0,225.0 345.3,224.4 345.6,223.4 346.0,222.7 346.3,225.2 346.7,222.9 347.0,222.5 347.3,218.8 347.7,217.7 348.0,213.7 348.3,213.1 348.7,214.7 349.0,212.2 349.4,214.5 349.7,212.6 350.0,213.1 350.4,213.1 350.7,213.6 351.1,215.3 351.4,212.5 351.7,214.8 352.1,215.1 352.4,213.1 352.8,212.4 353.1,211.7 353.4,213.2 353.8,217.4 354.1,213.1 354.5,213.5 354.8,212.0 355.1,214.0 355.5,213.7 355.8,214.7 356.2,216.3 356.5,214.8 356.8,212.2 357.2,213.1 357.5,211.5 357.9,212.7 358.2,211.3 358.5,214.9 358.9,210.3 359.2,214.2 359.6,213.5 359.9,211.2 360.2,214.4 360.6,215.2 360.9,215.8 361.3,213.0 361.6,214.4 361.9,213.6 362.3,215.4 362.6,213.3 363.0,214.9 363.3,211.9 363.6,212.4 364.0,211.8 364.3,213.1 364.7,211.6 365.0,213.5 365.3,212.5 365.7,211.4 366.0,213.7 366.4,214.9 366.7,214.1 367.0,213.8 367.4,213.0 367.7,213.1 368.0,211.1 368.4,216.1 368.7,211.0 369.1,212.1 369.4,211.9 369.7,211.8 370.1,213.5 370.4,212.3 370.8,212.5 371.1,213.8 371.4,211.6 371.8,211.8 372.1,214.0 372.5,212.6 372.8,210.7 373.1,214.2 373.5,211.3 373.8,213.3 374.2,213.3 374.5,213.7 374.8,213.7 375.2,212.7 375.5,213.3 375.9,211.0 376.2,213.7 376.5,210.7 376.9,214.3 377.2,212.3 377.6,214.5 377.9,213.2 378.2,214.0 378.6,212.7 378.9,213.0 379.3,214.0 379.6,214.2 379.9,212.8 380.3,209.4 380.6,213.5 381.0,214.3 381.3,215.1 381.6,212.9 382.0,214.8 382.3,208.3 382.7,212.7 383.0,212.4 383.3,216.2 383.7,213.0 384.0,217.0 384.4,213.4 384.7,212.7 385.0,212.5 385.4,212.1 385.7,213.5 386.1,213.5 386.4,211.9 386.7,215.8 387.1,214.8 387.4,212.9 387.8,214.1 388.1,213.1 388.4,212.6 388.8,212.1 389.1,212.4 389.5,215.8 389.8,215.7 390.1,213.1 390.5,212.9 390.8,214.9 391.2,212.1 391.5,214.4 391.8,211.1 392.2,213.9 392.5,214.4 392.9,214.5 393.2,215.6 393.5,215.0 393.9,212.7 394.2,211.4 394.6,210.0 394.9,211.8 395.2,213.1 395.6,212.5 395.9,217.3 396.3,214.0 396.6,213.9 396.9,213.5 397.3,213.0 397.6,213.8 398.0,214.9 398.3,213.4 398.6,214.7 399.0,215.4 399.3,213.6 399.7,214.3 400.0,213.8 400.3,215.0 400.7,214.6 401.0,213.7 401.4,215.0 401.7,215.1 402.0,213.7 402.4,211.6 402.7,215.9 403.1,213.7 403.4,214.4 403.7,213.6 404.1,212.9 404.4,211.7 404.8,213.4 405.1,213.1 405.4,214.1 405.8,213.0 406.1,213.3 406.5,214.4 406.8,213.4 407.1,212.5 407.5,214.1 407.8,212.9 408.1,211.9 408.5,211.9 408.8,212.1 409.2,212.5 409.5,210.2 409.8,211.3 410.2,212.5 410.5,212.8 410.9,213.1 411.2,214.2 411.5,211.8 411.9,215.5 412.2,213.9 412.6,209.9 412.9,213.3 413.2,211.9 413.6,214.1 413.9,215.8 414.3,211.3 414.6,213.5 414.9,211.8 415.3,211.2 415.6,214.3 416.0,214.5 416.3,212.4 416.6,212.8 417.0,211.6 417.3,212.4 417.7,213.0 418.0,213.1 418.3,214.4 418.7,213.6 419.0,213.3 419.4,213.5 419.7,214.2 420.0,214.1 420.4,211.4 420.7,213.1 421.1,213.9 421.4,212.2 421.7,211.2 422.1,211.9 422.4,211.6 422.8,213.0 423.1,213.1 423.4,214.1 423.8,210.6 424.1,214.0 424.5,214.5 424.8,217.1 425.1,212.9 425.5,214.4 425.8,210.8 426.2,214.9 426.5,213.3"/><path fill="none" stroke="#26c0c8" stroke-width="1.5" stroke-linejoin="round" d="M25.0,212.4 L25.3,212.8 L25.7,211.8 L26.0,213.9 L26.4,215.3 L26.7,213.7 L27.0,213.4 L27.4,212.9 L27.7,214.6 L28.1,213.4 L28.4,215.9 L28.7,213.1 L29.1,212.9 L29.4,212.7 L29.8,210.7 L30.1,213.8 L30.4,213.6 L30.8,211.2 L31.1,211.8 L31.4,211.9 L31.8,213.0 L32.1,212.0 L32.5,214.5 L32.8,215.1 L33.1,212.5 L33.5,213.5 L33.8,211.9 L34.2,215.3 L34.5,211.9 L34.8,212.3 L35.2,213.4 L35.5,212.3 L35.9,217.2 L36.2,213.2 L36.5,213.1 L36.9,212.0 L37.2,213.3 L37.6,212.6 L37.9,212.8 L38.2,214.8 L38.6,212.6 L38.9,214.0 L39.2,212.5 L39.6,214.8 L39.9,212.4 L40.3,212.1 L40.6,213.1 L40.9,215.2 L41.3,212.9 L41.6,212.2 L42.0,213.2 L42.3,212.4 L42.6,213.8 L43.0,212.5 L43.3,213.9 L43.7,214.7 L44.0,214.1 L44.3,215.5 L44.7,213.9 L45.0,216.0 L45.4,215.2 L45.7,213.0 L46.0,214.5 L46.4,212.4 L46.7,213.1 L47.1,213.3 L47.4,212.3 L47.7,213.9 L48.1,213.3 L48.4,216.2 L48.8,214.5 L49.1,213.1 L49.4,212.5 L49.8,212.7 L50.1,212.5 L50.4,212.4 L50.8,213.4 L51.1,211.5 L51.5,213.0 L51.8,214.1 L52.1,212.6 L52.5,211.9 L52.8,212.7 L53.2,214.6 L53.5,212.4 L53.8,215.6 L54.2,211.1 L54.5,212.3 L54.9,214.3 L55.2,215.3 L55.5,213.1 L55.9,211.1 L56.2,213.0 L56.6,212.2 L56.9,212.5 L57.2,212.9 L57.6,212.6 L57.9,213.4 L58.2,213.6 L58.6,213.0 L58.9,210.9 L59.3,213.2 L59.6,209.8 L59.9,213.5 L60.3,212.8 L60.6,212.1 L61.0,216.3 L61.3,215.7 L61.6,215.3 L62.0,213.7 L62.3,212.7 L62.7,214.1 L63.0,213.5 M63.5,196.0 L63.8,193.6 L64.2,193.5 L64.5,192.9 L64.8,193.6 L65.2,194.9 L65.5,193.8 M66.0,212.2 L66.3,214.9 L66.7,213.6 L67.0,216.5 L67.3,213.7 L67.7,215.2 L68.0,213.5 M68.5,192.4 L68.9,197.1 L69.2,193.8 L69.6,193.6 L69.9,195.8 L70.3,194.0 L70.6,192.0 L71.0,193.8 M71.5,214.3 L71.8,214.2 L72.2,213.4 L72.5,212.8 L72.9,211.2 L73.2,215.8 L73.5,212.8 L73.9,213.9 L74.2,212.7 L74.6,212.4 L74.9,213.8 L75.3,212.2 L75.6,214.7 L75.9,211.2 L76.3,214.3 L76.6,215.1 L77.0,212.8 L77.3,213.7 L77.6,214.6 L78.0,212.8 L78.3,213.1 L78.7,213.2 L79.0,217.2 L79.4,212.3 L79.7,213.2 L80.0,212.8 L80.4,212.7 L80.7,212.2 L81.1,212.5 L81.4,213.7 L81.7,215.1 L82.1,215.7 L82.4,211.7 L82.8,212.1 L83.1,213.4 L83.5,212.1 L83.8,212.4 L84.1,213.1 L84.5,212.7 L84.8,212.3 L85.2,213.7 L85.5,212.4 L85.8,213.1 L86.2,213.9 L86.5,214.4 L86.9,213.7 L87.2,215.0 L87.6,213.7 L87.9,211.4 L88.2,215.5 L88.6,217.4 L88.9,214.6 L89.3,215.7 L89.6,213.5 M90.0,195.3 L90.3,193.1 L90.7,194.6 L91.0,192.8 L91.4,193.0 L91.7,194.5 L92.0,193.9 L92.4,192.8 L92.7,191.8 L93.1,194.9 L93.4,193.8 L93.7,194.0 L94.1,192.5 L94.4,192.7 L94.8,193.7 L95.1,191.2 L95.4,195.4 L95.8,193.8 L96.1,195.3 L96.5,195.1 L96.8,193.0 L97.2,194.5 L97.5,192.2 L97.8,192.5 L98.2,195.6 L98.5,193.0 L98.9,192.7 L99.2,194.4 L99.5,193.8 L99.9,195.1 L100.2,192.0 L100.6,193.4 L100.9,192.3 L101.2,193.8 L101.6,193.4 L101.9,192.5 L102.3,191.3 L102.6,191.9 L102.9,195.1 L103.3,193.2 L103.6,192.2 L104.0,194.0 L104.3,192.2 L104.6,195.0 L105.0,195.0 L105.3,193.8 L105.7,193.0 L106.0,191.2 L106.3,194.4 L106.7,196.6 L107.0,194.0 L107.4,193.0 L107.7,194.9 L108.0,193.2 L108.4,192.1 L108.7,193.6 L109.1,194.6 L109.4,191.2 L109.8,195.2 L110.1,196.0 L110.4,193.7 L110.8,193.1 L111.1,191.8 L111.5,194.5 L111.8,193.4 L112.1,195.5 L112.5,195.9 L112.8,195.5 L113.2,194.0 L113.5,191.2 L113.8,195.6 L114.2,193.1 L114.5,193.1 L114.9,195.3 L115.2,194.4 L115.5,192.3 L115.9,193.3 L116.2,193.4 L116.6,193.6 L116.9,192.1 L117.2,195.8 L117.6,193.6 L117.9,194.7 L118.3,195.2 L118.6,196.8 L118.9,194.8 L119.3,192.8 L119.6,193.2 L120.0,195.0 L120.3,196.1 L120.6,191.7 L121.0,196.4 L121.3,193.0 L121.7,193.5 L122.0,193.2 L122.4,194.6 L122.7,193.5 L123.0,193.7 L123.4,192.5 L123.7,195.8 L124.1,194.3 L124.4,193.7 L124.7,196.7 L125.1,194.7 L125.4,195.7 L125.8,193.4 L126.1,194.0 L126.4,193.6 L126.8,195.0 L127.1,194.2 L127.5,191.4 L127.8,194.6 L128.1,193.5 L128.5,194.1 L128.8,195.1 L129.2,193.4 L129.5,194.7 L129.8,193.8 L130.2,193.7 L130.5,193.1 L130.9,193.6 L131.2,193.3 L131.5,194.9 L131.9,190.6 L132.2,194.6 L132.6,193.7 L132.9,192.3 L133.2,194.9 L133.6,193.7 L133.9,194.6 L134.3,195.6 L134.6,194.1 L135.0,191.6 L135.3,191.6 L135.6,193.7 L136.0,192.1 L136.3,196.8 L136.7,193.6 L137.0,191.3 L137.3,190.8 L137.7,193.0 L138.0,190.4 L138.4,194.5 L138.7,190.6 L139.0,195.0 L139.4,193.1 L139.7,195.3 L140.1,192.2 L140.4,193.8 M143.5,113.3 L143.9,114.7 L144.2,110.1 L144.6,112.5 L145.0,112.8 L145.3,109.4 L145.7,110.6 L146.0,113.1 L146.4,112.8 L146.7,113.0 L147.0,110.6 L147.4,110.3 L147.7,110.5 L148.1,110.3 L148.4,111.9 L148.7,112.0 L149.1,111.5 L149.4,109.8 L149.8,111.9 L150.1,111.5 L150.4,111.1 L150.8,112.5 L151.1,110.3 L151.5,111.0 L151.8,112.3 L152.1,109.7 L152.5,112.0 L152.8,111.8 L153.1,112.9 L153.5,112.6 L153.8,110.0 L154.2,113.3 L154.5,110.2 L154.8,109.1 L155.2,110.4 L155.5,110.3 L155.9,109.6 L156.2,112.2 L156.5,111.5 L156.9,111.7 L157.2,108.9 L157.6,113.3 L157.9,111.5 L158.2,112.4 L158.6,111.3 L158.9,111.3 L159.3,111.9 L159.6,111.0 L159.9,112.7 L160.3,110.1 L160.6,108.0 L161.0,110.3 L161.3,110.8 L161.6,111.4 L162.0,110.9 L162.3,111.4 L162.7,111.4 L163.0,110.6 L163.3,111.6 L163.7,111.6 L164.0,109.7 L164.4,108.4 L164.7,111.1 L165.0,111.5 L165.4,112.3 L165.7,112.4 L166.1,111.2 L166.4,112.4 L166.7,110.0 L167.1,110.2 L167.4,112.7 L167.7,109.2 L168.1,110.8 L168.4,109.4 L168.8,109.1 L169.1,113.8 L169.4,108.4 L169.8,113.3 L170.1,110.2 L170.5,109.8 L170.8,108.5 L171.1,111.1 L171.5,111.7 L171.8,111.6 L172.2,109.6 L172.5,113.1 L172.8,111.1 L173.2,111.5 L173.5,111.6 L173.9,111.6 L174.2,110.4 L174.5,111.3 L174.9,109.8 L175.2,111.2 L175.6,109.5 L175.9,108.8 L176.2,110.0 L176.6,110.6 L176.9,109.9 L177.3,110.4 L177.6,110.1 L177.9,110.9 L178.3,113.2 L178.6,111.6 L179.0,112.0 L179.3,112.2 L179.6,112.0 L180.0,111.4 L180.3,112.0 L180.6,112.3 L181.0,110.6 L181.3,110.4 L181.7,110.8 L182.0,110.7 L182.3,111.5 L182.7,110.2 L183.0,110.2 L183.4,111.1 L183.7,111.5 L184.0,110.7 L184.4,108.8 L184.7,110.5 L185.1,112.0 L185.4,110.5 L185.7,112.5 L186.1,110.1 L186.4,110.5 L186.8,111.9 L187.1,112.4 L187.4,110.4 L187.8,112.8 L188.1,111.1 L188.5,111.4 L188.8,113.3 L189.1,112.0 L189.5,110.5 L189.8,110.7 L190.2,109.6 L190.5,112.4 L190.8,111.3 L191.2,113.4 L191.5,112.5 L191.9,110.9 L192.2,110.0 L192.5,110.4 L192.9,112.6 L193.2,110.7 L193.6,112.4 L193.9,112.5 L194.2,112.9 L194.6,111.2 L194.9,111.8 L195.2,109.1 L195.6,111.3 L195.9,110.9 L196.3,112.1 L196.6,108.4 L196.9,110.4 L197.3,114.0 L197.6,111.1 L198.0,110.2 L198.3,111.0 L198.6,110.6 L199.0,110.4 L199.3,111.7 L199.7,111.2 L200.0,112.4 L200.3,114.3 L200.7,111.8 L201.0,111.3 L201.4,112.9 L201.7,108.9 L202.0,113.3 L202.4,109.3 L202.7,110.2 L203.1,110.9 L203.4,109.0 L203.7,110.0 L204.1,111.1 L204.4,111.4 L204.8,108.9 L205.1,106.7 L205.4,111.7 L205.8,108.6 L206.1,111.3 L206.5,111.5 L206.8,111.9 L207.1,110.1 L207.5,110.0 L207.8,115.1 L208.2,110.7 L208.5,109.4 L208.8,109.0 L209.2,110.5 L209.5,113.2 L209.8,111.8 L210.2,109.6 L210.5,108.9 L210.9,110.0 L211.2,110.8 L211.5,111.2 L211.9,111.5 L212.2,112.4 L212.6,109.0 L212.9,108.7 L213.2,110.7 L213.6,111.6 L213.9,110.1 L214.3,111.2 L214.6,110.7 L214.9,112.4 L215.3,110.5 L215.6,110.2 L216.0,111.5 L216.3,112.2 L216.6,109.9 L217.0,110.7 L217.3,109.8 L217.7,109.3 L218.0,114.2 L218.3,110.0 L218.7,110.4 L219.0,110.4 L219.4,109.7 L219.7,110.6 L220.0,110.7 L220.4,111.3 L220.7,110.1 L221.1,108.9 L221.4,110.6 L221.7,111.8 L222.1,112.6 L222.4,110.7 L222.7,110.5 L223.1,109.8 L223.4,112.9 L223.8,110.0 L224.1,110.1 L224.4,110.8 L224.8,110.5 L225.1,110.9 L225.5,111.4 L225.8,113.2 L226.1,111.5 L226.5,111.4 L226.8,108.8 L227.2,113.9 L227.5,111.5 L227.8,112.0 L228.2,110.4 L228.5,110.7 L228.9,110.3 L229.2,110.6 L229.5,110.3 L229.9,111.9 L230.2,112.3 L230.6,110.8 L230.9,110.4 L231.2,112.0 L231.6,110.5 L231.9,111.6 L232.3,109.9 L232.6,112.8 L232.9,110.2 L233.3,111.6 L233.6,113.2 L234.0,111.4 L234.3,110.5 L234.6,111.9 L235.0,112.9 L235.3,107.8 L235.7,110.3 L236.0,110.6 L236.3,112.0 L236.7,108.8 L237.0,111.9 L237.3,110.9 L237.7,111.6 L238.0,109.4 L238.4,112.6 L238.7,114.4 L239.0,111.0 L239.4,111.7 L239.7,109.4 L240.1,106.9 L240.4,110.7 L240.7,110.5 L241.1,111.8 L241.4,110.9 L241.8,109.0 L242.1,107.8 L242.4,112.4 L242.8,112.2 L243.1,110.6 L243.5,110.5 L243.8,110.8 M244.6,215.0 L244.9,215.3 L245.3,216.3 L245.7,221.8 L246.0,220.1 L246.4,221.7 L246.7,224.3 L247.1,223.3 L247.4,224.4 L247.8,225.2 L248.1,223.6 L248.5,221.5 L248.8,221.2 L249.2,220.5 L249.5,224.6 L249.9,221.5 L250.2,223.4 L250.5,223.7 L250.9,224.0 L251.2,223.5 L251.6,225.3 L251.9,224.0 L252.2,225.0 L252.6,223.4 L252.9,223.6 L253.3,223.8 L253.6,224.2 L253.9,224.6 L254.3,222.9 L254.6,224.4 L254.9,227.4 L255.3,219.8 L255.6,224.4 L256.0,223.4 L256.3,223.2 L256.6,222.7 L257.0,221.9 L257.3,223.9 L257.7,222.5 L258.0,225.7 L258.3,224.0 L258.7,226.0 L259.0,223.7 L259.4,221.5 L259.7,224.1 L260.0,223.8 L260.4,224.7 L260.7,220.2 L261.1,223.6 L261.4,225.6 L261.7,223.6 L262.1,220.7 L262.4,224.1 L262.8,224.2 L263.1,225.5 L263.4,224.3 L263.8,222.1 L264.1,225.2 L264.5,224.5 L264.8,225.2 L265.1,223.3 L265.5,225.0 L265.8,220.6 L266.2,221.7 L266.5,224.4 L266.8,225.8 L267.2,224.3 L267.5,223.8 L267.9,223.3 L268.2,222.9 L268.5,225.1 L268.9,221.0 L269.2,223.9 L269.5,225.7 L269.9,221.2 L270.2,220.4 L270.6,222.2 L270.9,223.5 L271.2,224.3 L271.6,222.7 L271.9,224.6 L272.3,222.8 L272.6,221.3 L272.9,225.0 L273.3,223.5 L273.6,222.6 L274.0,221.2 L274.3,220.0 L274.6,222.1 L275.0,224.5 L275.3,222.3 L275.7,221.6 L276.0,222.4 L276.3,224.4 L276.7,224.4 L277.0,225.3 L277.4,222.3 L277.7,225.7 L278.0,225.8 L278.4,224.1 L278.7,225.0 L279.1,225.9 L279.4,224.1 L279.7,222.3 L280.1,224.3 L280.4,224.1 L280.8,224.5 L281.1,227.2 L281.4,223.6 L281.8,223.2 L282.1,225.3 L282.4,223.6 L282.8,221.8 L283.1,224.0 L283.5,224.9 L283.8,221.3 L284.1,225.9 L284.5,226.3 L284.8,222.0 L285.2,223.9 L285.5,224.1 L285.8,224.3 L286.2,223.9 L286.5,224.5 L286.9,222.5 L287.2,223.2 L287.5,223.4 L287.9,224.2 L288.2,226.3 L288.6,224.8 L288.9,222.1 L289.2,224.1 L289.6,226.2 L289.9,226.4 L290.3,225.9 L290.6,223.7 L290.9,224.6 L291.3,223.8 L291.6,222.0 L292.0,223.6 L292.3,223.0 L292.6,221.8 L293.0,223.3 L293.3,223.0 L293.6,223.2 L294.0,224.6 L294.3,222.1 L294.7,223.7 L295.0,224.1 L295.3,224.0 L295.7,223.9 L296.0,223.7 L296.4,221.3 L296.7,220.6 L297.0,222.7 L297.4,223.0 L297.7,222.2 L298.1,222.5 L298.4,223.0 L298.7,226.0 L299.1,223.4 L299.4,224.7 L299.8,224.5 L300.1,223.8 L300.4,224.9 L300.8,222.8 L301.1,223.3 L301.5,221.9 L301.8,223.4 L302.1,224.8 L302.5,222.3 L302.8,223.4 L303.2,223.2 L303.5,223.5 L303.8,223.0 L304.2,224.0 L304.5,221.8 L304.9,223.7 L305.2,225.9 L305.5,222.0 L305.9,224.7 L306.2,222.6 L306.6,222.7 L306.9,226.1 L307.2,224.5 L307.6,224.4 L307.9,225.9 L308.2,224.5 L308.6,223.4 L308.9,220.3 L309.3,224.5 L309.6,226.0 L309.9,222.9 L310.3,221.8 L310.6,221.1 L311.0,224.4 L311.3,220.2 L311.6,224.1 L312.0,224.7 L312.3,222.9 L312.7,222.1 L313.0,223.1 L313.3,225.7 L313.7,221.9 L314.0,222.4 L314.4,224.3 L314.7,222.7 L315.0,225.4 L315.4,222.5 L315.7,221.8 L316.1,221.4 L316.4,223.2 L316.7,225.1 L317.1,223.6 L317.4,222.7 L317.8,221.4 L318.1,223.9 L318.4,222.6 L318.8,226.8 L319.1,221.9 L319.5,221.6 L319.8,221.7 L320.1,223.8 L320.5,224.4 L320.8,223.9 L321.2,225.2 L321.5,224.5 L321.8,222.7 L322.2,225.9 L322.5,222.4 L322.9,223.8 L323.2,223.6 L323.5,225.1 L323.9,223.5 L324.2,224.0 L324.6,220.8 L324.9,223.4 L325.2,223.7 L325.6,225.7 L325.9,221.1 L326.3,221.8 L326.6,224.7 L326.9,226.8 L327.3,223.7 L327.6,220.5 L328.0,221.0 L328.3,223.0 L328.6,222.3 L329.0,224.2 L329.3,225.0 L329.7,224.6 L330.0,222.2 L330.3,222.5 L330.7,223.3 L331.0,224.1 L331.4,224.3 L331.7,223.0 L332.0,225.0 L332.4,224.5 L332.7,223.1 L333.1,223.8 L333.4,225.8 L333.7,224.4 L334.1,223.1 L334.4,223.1 L334.8,224.9 L335.1,224.1 L335.4,223.7 L335.8,222.5 L336.1,223.2 L336.5,223.8 L336.8,226.0 L337.1,221.7 L337.5,223.7 L337.8,222.2 L338.2,221.6 L338.5,226.8 L338.8,221.7 L339.2,225.3 L339.5,225.0 L339.9,224.2 L340.2,223.6 L340.5,223.5 L340.9,224.2 L341.2,224.1 L341.6,224.3 L341.9,224.4 L342.2,221.2 L342.6,221.7 L342.9,223.5 L343.3,223.5 L343.6,221.6 L343.9,224.9 L344.3,224.2 L344.6,224.0 L345.0,225.0 L345.3,224.4 L345.6,223.4 L346.0,222.7 L346.3,225.2 L346.7,222.9 L347.0,222.5 L347.3,218.8 L347.7,217.7 L348.0,213.7 L348.3,213.1 L348.7,214.7 L349.0,212.2 L349.4,214.5 L349.7,212.6 L350.0,213.1 L350.4,213.1 L350.7,213.6 L351.1,215.3 L351.4,212.5 L351.7,214.8 L352.1,215.1 L352.4,213.1 L352.8,212.4 L353.1,211.7 L353.4,213.2 L353.8,217.4 L354.1,213.1 L354.5,213.5 L354.8,212.0 L355.1,214.0 L355.5,213.7 L355.8,214.7 L356.2,216.3 L356.5,214.8 L356.8,212.2 L357.2,213.1 L357.5,211.5 L357.9,212.7 L358.2,211.3 L358.5,214.9 L358.9,210.3 L359.2,214.2 L359.6,213.5 L359.9,211.2 L360.2,214.4 L360.6,215.2 L360.9,215.8 L361.3,213.0 L361.6,214.4 L361.9,213.6 L362.3,215.4 L362.6,213.3 L363.0,214.9 L363.3,211.9 L363.6,212.4 L364.0,211.8 L364.3,213.1 L364.7,211.6 L365.0,213.5 L365.3,212.5 L365.7,211.4 L366.0,213.7 L366.4,214.9 L366.7,214.1 L367.0,213.8 L367.4,213.0 L367.7,213.1 L368.0,211.1 L368.4,216.1 L368.7,211.0 L369.1,212.1 L369.4,211.9 L369.7,211.8 L370.1,213.5 L370.4,212.3 L370.8,212.5 L371.1,213.8 L371.4,211.6 L371.8,211.8 L372.1,214.0 L372.5,212.6 L372.8,210.7 L373.1,214.2 L373.5,211.3 L373.8,213.3 L374.2,213.3 L374.5,213.7 L374.8,213.7 L375.2,212.7 L375.5,213.3 L375.9,211.0 L376.2,213.7 L376.5,210.7 L376.9,214.3 L377.2,212.3 L377.6,214.5 L377.9,213.2 L378.2,214.0 L378.6,212.7 L378.9,213.0 L379.3,214.0 L379.6,214.2 L379.9,212.8 L380.3,209.4 L380.6,213.5 L381.0,214.3 L381.3,215.1 L381.6,212.9 L382.0,214.8 L382.3,208.3 L382.7,212.7 L383.0,212.4 L383.3,216.2 L383.7,213.0 L384.0,217.0 L384.4,213.4 L384.7,212.7 L385.0,212.5 L385.4,212.1 L385.7,213.5 L386.1,213.5 L386.4,211.9 L386.7,215.8 L387.1,214.8 L387.4,212.9 L387.8,214.1 L388.1,213.1 L388.4,212.6 L388.8,212.1 L389.1,212.4 L389.5,215.8 L389.8,215.7 L390.1,213.1 L390.5,212.9 L390.8,214.9 L391.2,212.1 L391.5,214.4 L391.8,211.1 L392.2,213.9 L392.5,214.4 L392.9,214.5 L393.2,215.6 L393.5,215.0 L393.9,212.7 L394.2,211.4 L394.6,210.0 L394.9,211.8 L395.2,213.1 L395.6,212.5 L395.9,217.3 L396.3,214.0 L396.6,213.9 L396.9,213.5 L397.3,213.0 L397.6,213.8 L398.0,214.9 L398.3,213.4 L398.6,214.7 L399.0,215.4 L399.3,213.6 L399.7,214.3 L400.0,213.8 L400.3,215.0 L400.7,214.6 L401.0,213.7 L401.4,215.0 L401.7,215.1 L402.0,213.7 L402.4,211.6 L402.7,215.9 L403.1,213.7 L403.4,214.4 L403.7,213.6 L404.1,212.9 L404.4,211.7 L404.8,213.4 L405.1,213.1 L405.4,214.1 L405.8,213.0 L406.1,213.3 L406.5,214.4 L406.8,213.4 L407.1,212.5 L407.5,214.1 L407.8,212.9 L408.1,211.9 L408.5,211.9 L408.8,212.1 L409.2,212.5 L409.5,210.2 L409.8,211.3 L410.2,212.5 L410.5,212.8 L410.9,213.1 L411.2,214.2 L411.5,211.8 L411.9,215.5 L412.2,213.9 L412.6,209.9 L412.9,213.3 L413.2,211.9 L413.6,214.1 L413.9,215.8 L414.3,211.3 L414.6,213.5 L414.9,211.8 L415.3,211.2 L415.6,214.3 L416.0,214.5 L416.3,212.4 L416.6,212.8 L417.0,211.6 L417.3,212.4 L417.7,213.0 L418.0,213.1 L418.3,214.4 L418.7,213.6 L419.0,213.3 L419.4,213.5 L419.7,214.2 L420.0,214.1 L420.4,211.4 L420.7,213.1 L421.1,213.9 L421.4,212.2 L421.7,211.2 L422.1,211.9 L422.4,211.6 L422.8,213.0 L423.1,213.1 L423.4,214.1 L423.8,210.6 L424.1,214.0 L424.5,214.5 L424.8,217.1 L425.1,212.9 L425.5,214.4 L425.8,210.8 L426.2,214.9 L426.5,213.3"/>
<path fill="none" stroke="#26c0c8" stroke-width="1.5" d="M426.5,213.8 L426.8,212.9 L427.2,212.5 L427.5,212.5 L427.8,212.4 L428.2,213.1 L428.5,213.1 L428.8,215.4 L429.2,212.6 L429.5,213.3 L429.8,213.5 L430.2,214.6 L430.5,214.1 M430.5,195.1 L430.8,194.1 L431.2,194.1 L431.5,194.3 L431.8,194.0 L432.2,193.6 L432.5,193.2 L432.8,191.8 L433.2,194.4 L433.5,193.1 M433.5,213.6 L433.8,214.4 L434.2,213.8 L434.5,211.4 L434.8,213.4 L435.2,212.0 L435.5,214.7 L435.8,213.5 L436.2,215.4 L436.5,213.0 L436.8,214.5 L437.2,213.6 L437.5,211.2 M437.5,192.1 L437.8,194.7 L438.2,192.2 L438.5,192.2 L438.8,194.0 L439.2,193.2 L439.5,192.5 M439.5,214.7 L439.8,215.1 L440.2,213.6 L440.5,216.5 L440.8,212.3 L441.2,214.7 L441.5,214.9 M441.5,191.6 L441.8,195.5 L442.2,194.2 L442.5,193.8 L442.8,193.7 L443.2,193.2 L443.5,194.8 M443.5,213.8 L443.8,214.3 L444.2,214.2 L444.5,215.0 L444.8,213.7 L445.2,212.3 L445.5,213.6 M445.5,194.3 L445.8,193.0 L446.2,192.5 L446.5,194.8 L446.8,194.1 L447.2,190.4 L447.5,192.4 M447.5,214.7 L447.8,213.9 L448.2,214.1 L448.5,215.7 L448.8,215.2 L449.2,213.5 L449.5,214.9 L449.8,214.3 L450.2,214.2 L450.5,215.0 M450.5,194.0 L450.8,193.7 L451.2,194.7 L451.5,192.7 L451.8,193.9 L452.2,193.8 L452.5,194.2 M452.5,213.3 L452.8,214.0 L453.2,214.1 L453.5,214.8 L453.8,214.3 L454.2,213.5 L454.5,214.4 L454.8,212.5 L455.2,211.6 L455.5,214.6 L455.8,213.2 L456.2,213.8 L456.5,211.8 M456.5,193.3 L456.8,196.0 L457.2,192.9 L457.5,195.1 L457.8,193.8 L458.2,194.8 L458.5,192.1 M458.5,213.8 L458.8,214.0 L459.2,214.5 L459.5,214.0 L459.8,213.5 L460.2,212.5 L460.5,213.3 L460.8,213.5 L461.2,214.3 L461.5,216.4 M461.5,194.6 L461.8,191.8 L462.2,193.7 L462.5,192.6 L462.8,194.5 L463.2,191.7 L463.5,194.2 M463.5,210.0 L463.8,212.0 L464.2,214.6 L464.5,213.5 L464.8,216.1 L465.2,215.1 L465.5,213.7 M465.5,192.6 L465.8,195.1 L466.2,194.2 L466.5,192.7 L466.8,193.1 L467.2,192.9 L467.5,193.3 M467.5,216.1 L467.8,212.5 L468.2,215.2 L468.5,214.0 L468.8,215.4 L469.2,211.8 L469.5,213.0 M469.5,194.5 L469.8,194.7 L470.2,193.7 L470.5,193.9 L470.8,192.6 L471.2,193.8 L471.5,193.2 M471.5,214.8 L471.8,214.3 L472.2,212.8 L472.5,213.5 L472.8,212.9 L473.2,214.8 L473.5,213.4 L473.8,214.3 L474.2,213.3 L474.5,211.9 L474.8,214.5 L475.2,213.9 L475.5,214.4 M475.5,193.5 L475.8,194.5 L476.2,191.5 L476.5,196.6 L476.8,194.8 L477.2,195.2 L477.5,192.6 L477.8,195.0 L478.2,194.2 L478.5,195.4 M478.5,212.5 L478.8,212.5 L479.2,213.0 L479.5,213.3 L479.8,214.5 L480.2,211.9 L480.5,211.8 M480.5,194.3 L480.8,194.0 L481.2,195.4 L481.5,192.5 L481.8,193.2 L482.2,195.5 L482.5,194.1 M482.5,211.2 L482.8,211.9 L483.2,214.3 L483.5,214.6 L483.8,215.5 L484.2,213.4 L484.5,212.7 L484.8,215.3 L485.2,214.7 L485.5,213.4 L485.8,213.9 L486.2,213.0 L486.5,214.9 M486.5,193.7 L486.8,192.1 L487.2,191.5 L487.5,194.8 L487.8,191.9 L488.2,190.0 L488.5,193.5 M488.5,213.3 L488.8,212.6 L489.2,214.0 L489.5,212.3 L489.8,211.2 L490.2,213.0 L490.5,213.8 L490.8,214.4 L491.2,213.2 L491.5,213.1 M491.5,192.9 L491.8,193.9 L492.2,194.5 L492.5,191.6 L492.8,194.0 L493.2,192.3 L493.5,195.6 L493.8,192.6 L494.2,194.5 L494.5,194.7 M494.5,212.1 L494.8,215.5 L495.2,213.8 L495.5,213.0 L495.8,214.0 L496.2,214.6 L496.5,214.5 L496.8,212.1 L497.2,213.9 L497.5,213.2 M497.5,192.1 L497.8,192.0 L498.2,193.7 L498.5,193.0 L498.8,193.2 L499.2,192.7 L499.5,194.9 M499.5,213.6 L499.8,213.2 L500.2,215.1 L500.5,213.2 L500.8,212.8 L501.2,214.8 L501.5,214.8 L501.8,212.9 L502.2,213.6 L502.5,215.6 L502.8,215.4 L503.2,212.6 L503.5,212.8 M503.5,193.1 L503.8,192.0 L504.2,193.1 L504.5,194.6 L504.8,193.2 L505.2,194.2 L505.5,192.9 M505.5,212.6 L505.8,212.1 L506.2,213.9 L506.5,214.5 L506.8,213.1 L507.2,213.2 L507.5,212.7 L507.8,212.6 L508.2,213.0 L508.5,214.2 L508.8,212.8 L509.2,214.6 L509.5,212.1 M509.5,192.3 L509.8,195.1 L510.2,192.7 L510.5,193.0 L510.8,195.0 L511.2,194.3 L511.5,193.5 M511.5,214.8 L511.8,212.9 L512.2,211.8 L512.5,213.5 L512.8,214.7 L513.2,215.2 L513.5,215.4 L513.8,213.5 L514.2,214.8 L514.5,212.3 M514.5,195.7 L514.8,193.3 L515.2,193.6 L515.5,194.2 L515.8,193.5 L516.2,193.0 L516.5,194.7 M516.5,212.1 L516.8,215.6 L517.2,213.7 L517.5,213.4 L517.8,212.6 L518.2,212.5 L518.5,212.6 L518.8,214.5 L519.2,212.8 L519.5,215.1 L519.8,211.0 L520.2,211.5 L520.5,217.2 L520.8,212.9 L521.2,211.7 L521.5,214.9 L521.8,212.4 L522.2,212.0 L522.5,213.9 M522.5,193.8 L522.8,193.3 L523.2,193.1 L523.5,194.6 L523.8,193.7 L524.2,193.3 L524.5,194.3 M524.5,214.1 L524.8,213.9 L525.2,212.5 L525.5,212.2 L525.8,213.5 L526.2,212.6 L526.5,214.2 L526.8,211.7 L527.2,213.6 L527.5,212.9 M527.5,195.6 L527.8,191.6 L528.2,194.0 L528.5,193.6 L528.8,192.9 L529.2,195.0 L529.5,193.2 M529.5,213.4 L529.8,212.9 L530.2,213.5 L530.5,212.9 L530.8,213.2 L531.2,214.7 L531.5,214.3 L531.8,212.9 L532.2,215.5 L532.5,213.5 L532.8,214.7 L533.2,214.3 L533.5,213.8 M533.5,191.5 L533.8,194.4 L534.2,195.7 L534.5,195.2 L534.8,195.6 L535.2,196.4 L535.5,192.6 M535.5,213.3 L535.8,214.7 L536.2,213.2 L536.5,214.2 L536.8,213.5 L537.2,214.3 L537.5,211.7 L537.8,213.3 L538.2,212.8 L538.5,213.2 L538.8,213.4 L539.2,214.3 L539.5,214.1 L539.8,215.2 L540.2,213.1 L540.5,213.7 L540.8,213.2 L541.2,213.1 L541.5,213.7 M541.5,194.7 L541.8,193.3 L542.2,192.1 L542.5,193.9 L542.8,196.0 L543.2,191.9 L543.5,192.5 M543.5,212.9 L543.8,212.9 L544.2,215.4 L544.5,213.4 L544.8,214.6 L545.2,212.3 L545.5,214.1 M545.5,193.4 L545.8,193.9 L546.2,194.0 L546.5,193.4 L546.8,192.3 L547.2,193.5 L547.5,193.1 L547.8,194.3 L548.2,194.7 L548.5,194.5 M548.5,213.7 L548.8,215.5 L549.2,213.3 L549.5,213.5 L549.8,210.9 L550.2,215.2 L550.5,215.1 L550.8,213.6 L551.2,214.6 L551.5,213.2 L551.8,212.6 L552.2,212.8 L552.5,213.0 L552.8,215.1 L553.2,212.6 L553.5,212.9 L553.8,212.1 L554.2,213.5 L554.5,213.5 M554.5,193.4 L554.8,193.5 L555.2,195.9 L555.5,191.7 L555.8,194.9 L556.2,193.0 L556.5,194.4 L556.8,193.6 L557.2,193.3 L557.5,196.1 M557.5,213.3 L557.8,214.4 L558.2,211.6 L558.5,213.2 L558.8,213.2 L559.2,213.5 L559.5,213.1 M559.5,195.3 L559.8,193.0 L560.2,196.6 L560.5,194.2 L560.8,193.8 L561.2,192.2 L561.5,195.8 L561.8,193.9 L562.2,192.2 L562.5,194.7 M562.5,215.4 L562.8,214.4 L563.2,211.6 L563.5,214.2 L563.8,212.6 L564.2,214.4 L564.5,212.9 L564.8,213.7 L565.2,212.7 L565.5,215.3 M565.5,194.7 L565.8,192.3 L566.2,193.2 L566.5,193.6 L566.8,194.6 L567.2,194.5 L567.5,195.3 M567.5,213.1 L567.8,212.2 L568.2,214.3 L568.5,213.8 L568.8,213.0 L569.2,214.5 L569.5,212.5 L569.8,214.8 L570.2,213.7 L570.5,212.2 L570.8,214.8 L571.2,214.8 L571.5,212.9 M571.5,193.9 L571.8,193.2 L572.2,193.8 L572.5,193.1 L572.8,193.1 L573.2,193.4 L573.5,193.4 M573.5,214.1 L573.8,212.3 L574.2,213.4 L574.5,211.4 L574.8,212.5 L575.2,212.5 L575.5,214.7 L575.8,210.2 L576.2,213.9 L576.5,212.6 M576.5,195.4 L576.8,193.6 L577.2,192.2 L577.5,193.8 L577.8,194.2 L578.2,194.3 L578.5,192.8 M578.5,212.4 L578.8,212.5 L579.2,216.1 L579.5,213.1 L579.8,212.2 L580.2,213.9 L580.5,213.7 M580.5,195.8 L580.8,194.0 L581.2,193.5 L581.5,193.3 L581.8,192.3 L582.2,192.8 L582.5,193.5 M582.5,213.7 L582.8,211.3 L583.2,215.2 L583.5,214.7 L583.8,213.7 L584.2,214.3 L584.5,211.9 M584.5,193.4 L584.8,191.6 L585.2,192.5 L585.5,195.4 L585.8,193.0 L586.2,191.9 L586.5,196.0 L586.8,193.6 L587.2,192.8 L587.5,195.0 M587.5,212.0 L587.8,215.0 L588.2,213.7 L588.5,213.5 L588.8,214.5 L589.2,213.5 L589.5,214.1 L589.8,212.5 L590.2,213.6 L590.5,213.3 M590.5,194.7 L590.8,195.1 L591.2,195.8 L591.5,194.8 L591.8,192.5 L592.2,191.9 L592.5,193.3 M592.5,215.3 L592.8,212.5 L593.2,213.5 L593.5,213.9 L593.8,214.5 L594.2,213.1 L594.5,213.7 L594.8,212.6 L595.2,212.4 L595.5,213.8 L595.8,213.1 L596.2,210.6 L596.5,212.0 L596.8,213.4 L597.2,213.0 L597.5,214.2 L597.8,214.1 L598.2,213.3 L598.5,215.1 M598.5,193.2 L598.8,195.0 L599.2,194.7 L599.5,196.4 L599.8,196.3 L600.2,192.9 L600.5,196.1 L600.8,195.4 L601.2,194.5 L601.5,194.1 M601.5,213.6 L601.8,212.6 L602.2,211.3 L602.5,213.8 L602.8,212.1 L603.2,214.8 L603.5,214.2 L603.8,214.1 L604.2,214.8 L604.5,212.6 M604.5,194.9 L604.8,192.6 L605.2,194.5 L605.5,195.0 L605.8,194.5 L606.2,190.8 L606.5,192.7 M606.5,213.2 L606.8,214.5 L607.2,212.7 L607.5,210.8 L607.8,216.4 L608.2,213.1 L608.5,215.6 L608.8,212.4 L609.2,213.7 L609.5,213.4 M609.5,193.2 L609.8,192.3 L610.2,191.7 L610.5,192.0 L610.8,195.0 L611.2,194.6 L611.5,194.1 L611.8,193.7 L612.2,195.6 L612.5,195.4 M612.5,215.7 L612.8,214.0 L613.2,213.0 L613.5,212.2 L613.8,211.7 L614.2,212.5 L614.5,213.5 L614.8,213.5 L615.2,215.4 L615.5,214.4 M615.5,192.9 L615.8,194.4 L616.2,193.7 L616.5,194.0 L616.8,193.9 L617.2,192.9 L617.5,192.5 M617.5,212.7 L617.8,212.7 L618.2,213.7 L618.5,214.0 L618.8,213.0 L619.2,214.0 L619.5,214.2 L619.8,211.4 L620.2,213.8 L620.5,213.1 L620.8,214.3 L621.2,213.0 L621.5,212.7 M621.5,194.3 L621.8,193.3 L622.2,193.9 L622.5,194.8 L622.8,192.9 L623.2,195.5 L623.5,192.8 M623.5,211.6 L623.8,213.6 L624.2,212.6 L624.5,213.7 L624.8,214.7 L625.2,214.7 L625.5,213.4 L625.8,211.9 L626.2,215.6 L626.5,214.7 L626.8,213.4 L627.2,214.9 L627.5,215.1 L627.8,213.7 L628.2,212.4 L628.5,213.8 L628.8,212.4 L629.2,213.1 L629.5,215.1 M629.5,193.9 L629.8,193.6 L630.2,192.6 L630.5,193.8 L630.8,196.2 L631.2,194.9 L631.5,194.3 M631.5,214.1 L631.8,214.5 L632.2,213.0 L632.5,214.1 L632.8,213.2 L633.2,212.9 L633.5,210.7 M633.5,192.7 L633.8,191.6 L634.2,193.4 L634.5,190.9 L634.8,192.7 L635.2,194.1 L635.5,194.5 M635.5,214.2 L635.8,213.9 L636.2,214.5 L636.5,214.5 L636.8,213.8 L637.2,213.8 L637.5,214.1 L637.8,212.0 L638.2,213.2 L638.5,211.6 M638.5,193.0 L638.8,194.5 L639.2,194.2 L639.5,194.7 L639.8,194.3 L640.2,194.0 L640.5,191.1 L640.8,193.1 L641.2,193.8 L641.5,193.0 M641.5,214.9 L641.8,214.8 L642.2,213.3 L642.5,211.6 L642.8,212.1 L643.2,212.7 L643.5,213.7 L643.8,216.6 L644.2,212.4 L644.5,215.5 L644.8,213.8 L645.2,213.2 L645.5,213.7 L645.8,213.9 L646.2,214.1 L646.5,213.4 L646.8,212.7 L647.2,214.3 L647.5,213.6 M647.5,193.0 L647.8,192.7 L648.2,193.9 L648.5,194.0 L648.8,193.7 L649.2,194.1 L649.5,193.7 L649.8,195.5 L650.2,192.9 L650.5,194.8 M650.5,212.0 L650.8,215.5 L651.2,212.4 L651.5,212.9 L651.8,212.2 L652.2,213.2 L652.5,212.2 L652.8,215.8 L653.2,213.8 L653.5,216.3 L653.8,215.0 L654.2,211.5 L654.5,214.2 M654.5,195.0 L654.8,194.7 L655.2,195.5 L655.5,193.9 L655.8,195.4 L656.2,195.4 L656.5,196.2 M656.5,213.1 L656.8,212.5 L657.2,212.2 L657.5,213.0 L657.8,214.8 L658.2,212.8 L658.5,213.5 L658.8,213.5 L659.2,212.6 L659.5,213.5 M659.5,193.3 L659.8,193.9 L660.2,192.4 L660.5,193.8 L660.8,191.8 L661.2,191.3 L661.5,193.6 M661.5,214.8 L661.8,213.7 L662.2,215.7 L662.5,213.8 L662.8,212.6 L663.2,214.7 L663.5,212.7 M663.5,195.1 L663.8,193.3 L664.2,192.8 L664.5,193.9 L664.8,194.6 L665.2,192.6 L665.5,193.4 L665.8,194.5 L666.2,194.3 L666.5,196.0 M666.5,215.1 L666.8,212.6 L667.2,214.1 L667.5,211.7 L667.8,214.3 L668.2,211.5 L668.5,214.5 M668.5,195.8 L668.8,194.0 L669.2,193.7 L669.5,192.7 L669.8,193.7 L670.2,194.2 L670.5,192.2 M670.5,213.2 L670.8,213.2 L671.2,213.2 L671.5,213.0 L671.8,215.9 L672.2,213.2 L672.5,213.2 L672.8,214.2 L673.2,212.8 L673.5,211.6 M673.5,195.2 L673.8,195.2 L674.2,196.1 L674.5,194.7 L674.8,194.0 L675.2,191.7 L675.5,194.9 M675.5,212.4 L675.8,212.3 L676.2,213.6 L676.5,213.3 L676.8,213.7 L677.2,214.6 L677.5,215.3 L677.8,213.7 L678.2,215.2 L678.5,213.8 M678.5,192.0 L678.8,193.7 L679.2,194.6 L679.5,192.7 L679.8,192.3 L680.2,194.8 L680.5,193.4 M680.5,212.8 L680.8,216.4 L681.2,211.2 L681.5,211.4 L681.8,213.7 L682.2,212.4 L682.5,213.2 M682.5,195.2 L682.8,194.8 L683.2,192.7 L683.5,191.8 L683.8,194.1 L684.2,193.8 L684.5,194.6 M684.5,213.3 L684.8,213.9 L685.2,214.6 L685.5,213.9 L685.8,210.6 L686.2,213.0 L686.5,212.7 M686.5,192.8 L686.8,190.8 L687.2,194.3 L687.5,194.7 L687.8,194.7 L688.2,193.0 L688.5,191.9 M688.5,215.9 L688.8,212.5 L689.2,213.5 L689.5,215.0 L689.8,215.0 L690.2,213.5 L690.5,214.3 L690.8,215.4 L691.2,214.1 L691.5,213.7 M691.5,193.4 L691.8,191.9 L692.2,192.9 L692.5,195.7 L692.8,192.7 L693.2,192.3 L693.5,192.6 L693.8,194.1 L694.2,194.9 L694.5,194.6 M694.5,213.9 L694.8,213.7 L695.2,213.3 L695.5,215.3 L695.8,212.9 L696.2,213.7 L696.5,212.1 L696.8,214.2 L697.2,213.5 L697.5,212.3 L697.8,212.4 L698.2,212.0 L698.5,213.2 M698.5,193.6 L698.8,195.1 L699.2,194.3 L699.5,194.3 L699.8,193.8 L700.2,192.8 L700.5,194.7 M700.5,214.3 L700.8,212.4 L701.2,212.6 L701.5,213.0 L701.8,214.1 L702.2,213.4 L702.5,213.2 M702.5,194.6 L702.8,192.8 L703.2,194.4 L703.5,194.5 L703.8,193.2 L704.2,194.3 L704.5,192.0 M704.5,212.3 L704.8,214.0 L705.2,212.8 L705.5,215.0 L705.8,212.6 L706.2,214.0 L706.5,213.7 M706.5,192.5 L706.8,192.7 L707.2,194.1 L707.5,196.4 L707.8,191.8 L708.2,194.1 L708.5,192.6 M708.5,212.9 L708.8,215.3 L709.2,215.2 L709.5,213.0 L709.8,212.9 L710.2,212.4 L710.5,213.0 L710.8,212.8 L711.2,213.7 L711.5,212.0 M711.5,193.7 L711.8,193.6 L712.2,192.0 L712.5,194.8 L712.8,193.7 L713.2,195.5 L713.5,194.0 L713.8,195.0 L714.2,194.6 L714.5,193.8 M714.5,211.6 L714.8,212.4 L715.2,214.1 L715.5,212.5 L715.8,211.9 L716.2,212.5 L716.5,213.6 L716.8,211.5 L717.2,212.7 L717.5,213.1 L717.8,213.1 L718.2,212.0 L718.5,210.1 L718.8,212.5 L719.2,214.9 L719.5,215.1 L719.8,212.6 L720.2,215.2 L720.5,214.4 M720.5,193.5 L720.8,193.1 L721.2,193.8 L721.5,192.0 L721.8,192.0 L722.2,193.3 L722.5,193.0 L722.8,194.2 L723.2,192.6 L723.5,194.8 M723.5,214.8 L723.8,215.1 L724.2,213.4 L724.5,214.6 L724.8,213.2 L725.2,213.5 L725.5,213.0 L725.8,212.9 L726.2,215.2 L726.5,212.7 L726.8,211.4 L727.2,212.8 L727.5,214.2 M727.5,194.9 L727.8,194.0 L728.2,193.4 L728.5,193.2 L728.8,192.9 L729.2,196.1 L729.5,194.6 L729.8,193.4 L730.2,194.1 L730.5,194.3 M730.5,213.4 L730.8,212.6 L731.2,211.7 L731.5,213.6 L731.8,215.7 L732.2,213.9 L732.5,214.0 M732.5,193.2 L732.8,192.5 L733.2,195.9 L733.5,194.1 L733.8,195.1 L734.2,193.3 L734.5,195.0 L734.8,194.4 L735.2,192.4 L735.5,191.1 M735.5,211.3 L735.8,213.0 L736.2,213.0 L736.5,214.6 L736.8,213.3 L737.2,212.3 L737.5,214.0 M737.5,193.5 L737.8,193.1 L738.2,192.6 L738.5,195.3 L738.8,194.3 L739.2,196.2 L739.5,194.4 M739.5,212.9 L739.8,213.4 L740.2,213.1 L740.5,213.4 L740.8,213.1 L741.2,214.3 L741.5,212.2 L741.8,213.0 L742.2,213.2 L742.5,214.6 M742.5,194.1 L742.8,194.1 L743.2,193.5 L743.5,194.0 L743.8,193.9 L744.2,193.6 L744.5,193.1 M744.5,213.1 L744.8,212.5 L745.2,212.5 L745.5,213.7 L745.8,212.5 L746.2,213.1 L746.5,212.9 L746.8,214.2 L747.2,213.3 L747.5,214.4 L747.8,214.5 L748.2,213.6 L748.5,212.7 L748.8,213.0 L749.2,215.3 L749.5,215.0 L749.8,212.1 L750.2,213.8 L750.5,212.5 M750.5,196.1 L750.8,192.8 L751.2,192.2 L751.5,192.6 L751.8,193.8 L752.2,192.7 L752.5,194.7 M752.5,211.4 L752.8,213.1 L753.2,214.2 L753.5,213.0 L753.8,214.5 L754.2,213.6 L754.5,215.6 M754.5,194.2 L754.8,194.7 L755.2,196.1 L755.5,194.7 L755.8,192.2 L756.2,193.1 L756.5,191.9 M756.5,211.2 L757.0,212.7"/>
<path fill="none" stroke="#26c0c8" stroke-width="0.6" stroke-opacity="0.35" d="M430.5,191.2 L430.5,217.0 M433.5,191.3 L433.5,215.8 M437.5,193.1 L437.5,214.2 M439.5,192.5 L439.5,216.0 M441.5,191.6 L441.5,217.5 M443.5,192.9 L443.5,216.7 M445.5,192.2 L445.5,216.7 M447.5,193.4 L447.5,216.0 M450.5,193.6 L450.5,217.1 M452.5,191.9 L452.5,214.6 M456.5,193.3 L456.5,213.6 M458.5,193.8 L458.5,215.6 M461.5,193.5 L461.5,217.3 M463.5,193.1 L463.5,215.1 M465.5,192.8 L465.5,213.9 M467.5,193.3 L467.5,213.9 M469.5,190.9 L469.5,214.3 M471.5,191.8 L471.5,217.3 M475.5,191.1 L475.5,216.9 M478.5,192.5 L478.5,215.0 M480.5,192.5 L480.5,215.9 M482.5,193.1 L482.5,216.9 M486.5,193.6 L486.5,217.0 M488.5,192.1 L488.5,216.6 M491.5,193.5 L491.5,213.6 M494.5,190.8 L494.5,214.3 M497.5,192.9 L497.5,216.0 M499.5,193.2 L499.5,217.5 M503.5,191.3 L503.5,215.1 M505.5,192.4 L505.5,217.2 M509.5,190.9 L509.5,214.7 M511.5,191.2 L511.5,215.9 M514.5,191.6 L514.5,216.2 M516.5,192.4 L516.5,215.1 M522.5,192.6 L522.5,216.5 M524.5,192.4 L524.5,213.6 M527.5,191.4 L527.5,214.7 M529.5,192.4 L529.5,215.7 M533.5,192.0 L533.5,217.0 M535.5,193.0 L535.5,213.9 M541.5,191.1 L541.5,215.1 M543.5,192.7 L543.5,215.2 M545.5,192.9 L545.5,215.4 M548.5,193.5 L548.5,214.5 M554.5,192.8 L554.5,214.8 M557.5,191.9 L557.5,215.7 M559.5,190.8 L559.5,217.2 M562.5,193.6 L562.5,214.0 M565.5,191.0 L565.5,214.3 M567.5,191.7 L567.5,215.1 M571.5,192.8 L571.5,215.9 M573.5,193.1 L573.5,214.5 M576.5,191.7 L576.5,215.2 M578.5,193.5 L578.5,214.7 M580.5,193.3 L580.5,217.3 M582.5,193.4 L582.5,216.6 M584.5,193.0 L584.5,214.5 M587.5,192.3 L587.5,217.0 M590.5,192.2 L590.5,216.1 M592.5,193.6 L592.5,217.1 M598.5,192.1 L598.5,217.4 M601.5,193.2 L601.5,216.3 M604.5,192.1 L604.5,214.0 M606.5,192.3 L606.5,215.9 M609.5,190.9 L609.5,213.6 M612.5,190.9 L612.5,216.8 M615.5,192.8 L615.5,216.2 M617.5,192.2 L617.5,214.5 M621.5,192.2 L621.5,213.8 M623.5,191.6 L623.5,215.4 M629.5,191.2 L629.5,217.3 M631.5,193.2 L631.5,214.0 M633.5,191.0 L633.5,213.8 M635.5,192.2 L635.5,217.3 M638.5,192.9 L638.5,216.7 M641.5,191.4 L641.5,215.5 M647.5,191.9 L647.5,214.8 M650.5,190.8 L650.5,214.7 M654.5,192.9 L654.5,213.9 M656.5,192.1 L656.5,216.0 M659.5,193.5 L659.5,216.7 M661.5,192.5 L661.5,215.7 M663.5,191.4 L663.5,217.4 M666.5,192.9 L666.5,214.5 M668.5,191.1 L668.5,217.2 M670.5,190.8 L670.5,216.0 M673.5,191.0 L673.5,216.1 M675.5,192.3 L675.5,214.8 M678.5,191.0 L678.5,217.1 M680.5,192.3 L680.5,213.6 M682.5,192.1 L682.5,214.5 M684.5,192.6 L684.5,214.4 M686.5,192.1 L686.5,216.1 M688.5,192.1 L688.5,214.6 M691.5,190.9 L691.5,217.1 M694.5,191.7 L694.5,214.0 M698.5,193.5 L698.5,217.3 M700.5,191.2 L700.5,215.5 M702.5,192.5 L702.5,215.0 M704.5,192.4 L704.5,217.0 M706.5,191.8 L706.5,216.5 M708.5,190.9 L708.5,214.9 M711.5,191.1 L711.5,213.7 M714.5,192.1 L714.5,215.6 M720.5,192.4 L720.5,215.6 M723.5,192.7 L723.5,215.6 M727.5,193.5 L727.5,216.7 M730.5,191.7 L730.5,216.3 M732.5,193.1 L732.5,214.4 M735.5,191.3 L735.5,217.2 M737.5,192.7 L737.5,214.4 M739.5,190.8 L739.5,215.9 M742.5,193.0 L742.5,216.2 M744.5,191.5 L744.5,216.0 M750.5,192.4 L750.5,215.6 M752.5,191.9 L752.5,214.6 M754.5,192.4 L754.5,215.1 M756.5,190.8 L756.5,217.2"/>
<polyline fill="none" stroke="#1ec81e" stroke-width="1" stroke-opacity="0.55" points="25.0,195.2 25.3,193.2 25.7,192.0 26.0,195.0 26.4,191.5 26.7,195.4 27.0,191.3 27.4,193.5 27.7,193.3 28.1,193.1 28.4,192.0 28.7,191.4 29.1,194.8 29.4,193.5 29.8,191.6 30.1,191.0 30.4,193.9 30.8,194.8 31.1,192.7 31.4,192.2 31.8,193.7 32.1,193.5 32.5,194.6 32.8,192.6 33.1,191.8 33.5,192.7 33.8,190.9 34.2,191.3 34.5,192.0 34.8,192.6 35.2,192.9 35.5,190.8 35.9,192.3 36.2,195.7 36.5,190.4 36.9,192.3 37.2,192.1 37.6,193.7 37.9,191.7 38.2,196.1 38.6,192.0 38.9,193.2 39.2,193.0 39.6,194.8 39.9,193.4 40.3,190.8 40.6,192.9 40.9,191.9 41.3,194.5 41.6,193.6 42.0,193.3 42.3,192.7 42.6,191.8 43.0,194.3 43.3,194.1 43.7,196.1 44.0,192.5 44.3,194.4 44.7,191.3 45.0,193.6 45.4,192.8 45.7,191.3 46.0,191.9 46.4,193.0 46.7,192.5 47.1,192.4 47.4,192.4 47.7,192.8 48.1,192.2 48.4,190.4 48.8,193.0 49.1,195.3 49.4,192.6 49.8,193.0 50.1,191.6 50.4,191.7 50.8,191.5 51.1,190.9 51.5,192.9 51.8,191.5 52.1,193.3 52.5,193.0 52.8,190.8 53.2,196.0 53.5,192.3 53.8,193.0 54.2,192.2 54.5,191.2 54.9,192.8 55.2,193.6 55.5,189.8 55.9,192.9 56.2,193.0 56.6,195.4 56.9,190.0 57.2,191.8 57.6,194.4 57.9,191.8 58.2,193.7 58.6,191.4 58.9,191.2 59.3,193.9 59.6,192.0 59.9,191.3 60.3,192.9 60.6,194.5 61.0,192.7 61.3,196.0 61.6,191.0 62.0,195.2 62.3,193.2 62.7,194.1 63.0,192.8 63.5,213.7 63.8,212.2 64.2,212.2 64.5,210.7 64.8,211.6 65.2,211.6 65.5,212.6 66.0,194.2 66.3,192.2 66.7,193.3 67.0,192.7 67.3,196.1 67.7,191.7 68.0,192.8 68.5,211.3 68.9,213.5 69.2,210.1 69.6,212.7 69.9,211.2 70.3,211.4 70.6,212.3 71.0,212.6 71.5,195.7 71.8,194.1 72.2,194.0 72.5,193.5 72.9,193.5 73.2,191.8 73.5,193.0 73.9,192.6 74.2,193.7 74.6,194.0 74.9,191.2 75.3,190.9 75.6,194.9 75.9,191.2 76.3,194.5 76.6,196.8 77.0,194.3 77.3,193.2 77.6,192.6 78.0,193.1 78.3,194.1 78.7,197.1 79.0,194.1 79.4,192.6 79.7,195.1 80.0,192.8 80.4,194.7 80.7,193.2 81.1,193.1 81.4,193.9 81.7,192.6 82.1,191.9 82.4,192.7 82.8,192.9 83.1,192.3 83.5,193.9 83.8,193.3 84.1,193.2 84.5,192.3 84.8,193.1 85.2,193.8 85.5,192.4 85.8,192.5 86.2,193.2 86.5,193.1 86.9,192.0 87.2,194.0 87.6,193.4 87.9,195.5 88.2,191.2 88.6,191.0 88.9,193.2 89.3,195.5 89.6,192.8 90.0,213.9 90.3,212.6 90.7,211.5 91.0,213.0 91.4,211.9 91.7,211.5 92.0,212.7 92.4,211.6 92.7,212.2 93.1,211.6 93.4,212.3 93.7,213.3 94.1,212.7 94.4,213.0 94.8,211.1 95.1,210.6 95.4,212.4 95.8,212.6 96.1,213.5 96.5,210.6 96.8,213.9 97.2,212.4 97.5,211.1 97.8,211.8 98.2,211.9 98.5,214.5 98.9,212.0 99.2,213.0 99.5,211.3 99.9,210.7 100.2,211.6 100.6,210.3 100.9,212.1 101.2,212.3 101.6,215.0 101.9,211.9 102.3,214.1 102.6,213.5 102.9,213.7 103.3,212.9 103.6,212.4 104.0,213.3 104.3,214.2 104.6,211.4 105.0,210.8 105.3,211.7 105.7,210.5 106.0,212.0 106.3,212.1 106.7,211.5 107.0,212.3 107.4,214.3 107.7,212.7 108.0,214.1 108.4,212.4 108.7,212.7 109.1,210.6 109.4,214.3 109.8,213.0 110.1,214.6 110.4,212.5 110.8,211.7 111.1,215.5 111.5,211.0 111.8,209.8 112.1,213.7 112.5,211.1 112.8,210.9 113.2,212.9 113.5,211.4 113.8,215.1 114.2,215.5 114.5,215.6 114.9,211.8 115.2,213.9 115.5,211.7 115.9,211.8 116.2,212.2 116.6,212.3 116.9,213.1 117.2,212.1 117.6,214.5 117.9,210.6 118.3,213.1 118.6,210.3 118.9,213.3 119.3,214.3 119.6,214.7 120.0,213.5 120.3,212.8 120.6,211.7 121.0,212.0 121.3,212.8 121.7,211.5 122.0,210.7 122.4,214.4 122.7,213.3 123.0,213.2 123.4,212.0 123.7,213.5 124.1,212.0 124.4,213.2 124.7,212.7 125.1,212.6 125.4,211.7 125.8,213.6 126.1,211.4 126.4,214.8 126.8,213.9 127.1,212.3 127.5,213.3 127.8,213.8 128.1,212.6 128.5,211.0 128.8,213.0 129.2,212.1 129.5,212.3 129.8,215.5 130.2,212.7 130.5,210.6 130.9,213.6 131.2,214.1 131.5,211.4 131.9,212.5 132.2,211.6 132.6,213.0 132.9,214.2 133.2,216.3 133.6,212.3 133.9,212.8 134.3,214.6 134.6,212.3 135.0,213.9 135.3,211.7 135.6,217.1 136.0,211.4 136.3,213.6 136.7,214.9 137.0,214.0 137.3,214.9 137.7,213.9 138.0,212.7 138.4,213.6 138.7,213.9 139.0,212.9 139.4,213.9 139.7,212.2 140.1,211.5 140.4,212.6 142.5,125.0 143.5,114.0 143.9,111.5 144.2,112.7 144.6,112.2 145.0,108.1 145.3,111.1 145.7,109.3 146.0,109.3 146.4,106.3 146.7,108.1 147.0,108.4 147.4,107.9 147.7,107.0 148.1,106.3 148.4,108.9 148.7,109.3 149.1,109.9 149.4,106.7 149.8,106.5 150.1,111.6 150.4,108.5 150.8,108.6 151.1,110.2 151.5,107.2 151.8,108.5 152.1,109.9 152.5,109.3 152.8,109.9 153.1,108.1 153.5,110.8 153.8,106.7 154.2,105.6 154.5,108.4 154.8,108.9 155.2,108.7 155.5,105.8 155.9,106.8 156.2,108.2 156.5,109.9 156.9,110.4 157.2,111.1 157.6,107.0 157.9,108.0 158.2,106.2 158.6,107.0 158.9,106.9 159.3,108.5 159.6,107.5 159.9,109.1 160.3,110.7 160.6,108.3 161.0,108.1 161.3,108.7 161.6,108.4 162.0,108.4 162.3,107.8 162.7,108.9 163.0,107.9 163.3,109.3 163.7,108.9 164.0,110.2 164.4,109.5 164.7,109.4 165.0,108.6 165.4,108.1 165.7,109.5 166.1,107.5 166.4,109.3 166.7,111.0 167.1,107.7 167.4,109.6 167.7,109.6 168.1,108.7 168.4,110.2 168.8,108.1 169.1,107.0 169.4,109.4 169.8,109.4 170.1,109.1 170.5,110.0 170.8,107.2 171.1,107.5 171.5,111.2 171.8,108.3 172.2,110.2 172.5,109.3 172.8,106.0 173.2,107.9 173.5,112.6 173.9,109.0 174.2,109.8 174.5,106.9 174.9,108.5 175.2,107.2 175.6,108.3 175.9,108.9 176.2,107.7 176.6,106.8 176.9,109.5 177.3,109.5 177.6,108.0 177.9,107.7 178.3,109.9 178.6,108.5 179.0,110.4 179.3,109.6 179.6,108.3 180.0,110.1 180.3,106.1 180.6,107.4 181.0,108.8 181.3,110.0 181.7,109.9 182.0,109.5 182.3,107.6 182.7,108.6 183.0,111.3 183.4,109.7 183.7,110.2 184.0,108.9 184.4,107.0 184.7,108.2 185.1,110.5 185.4,107.6 185.7,110.5 186.1,109.4 186.4,106.3 186.8,108.8 187.1,108.0 187.4,108.4 187.8,110.8 188.1,106.8 188.5,106.5 188.8,108.2 189.1,108.9 189.5,109.1 189.8,108.9 190.2,107.5 190.5,108.4 190.8,111.7 191.2,109.4 191.5,109.9 191.9,109.2 192.2,109.0 192.5,106.6 192.9,109.4 193.2,112.2 193.6,106.2 193.9,109.5 194.2,106.9 194.6,109.7 194.9,109.2 195.2,108.6 195.6,107.0 195.9,107.9 196.3,110.6 196.6,108.3 196.9,108.6 197.3,109.5 197.6,107.9 198.0,108.4 198.3,106.6 198.6,111.5 199.0,109.1 199.3,109.6 199.7,107.9 200.0,107.2 200.3,109.7 200.7,108.0 201.0,108.8 201.4,107.3 201.7,111.8 202.0,108.6 202.4,109.2 202.7,110.0 203.1,107.1 203.4,109.0 203.7,106.9 204.1,107.5 204.4,109.9 204.8,110.3 205.1,109.3 205.4,107.4 205.8,108.6 206.1,109.8 206.5,108.1 206.8,108.3 207.1,109.0 207.5,109.9 207.8,107.8 208.2,106.6 208.5,107.9 208.8,108.5 209.2,108.4 209.5,109.1 209.8,110.3 210.2,108.7 210.5,109.3 210.9,107.8 211.2,108.6 211.5,109.5 211.9,107.1 212.2,110.1 212.6,107.5 212.9,108.3 213.2,109.5 213.6,109.5 213.9,108.8 214.3,107.8 214.6,111.4 214.9,108.6 215.3,108.8 215.6,108.8 216.0,108.9 216.3,108.3 216.6,107.9 217.0,107.3 217.3,107.1 217.7,109.7 218.0,111.0 218.3,109.0 218.7,108.9 219.0,108.4 219.4,108.2 219.7,111.3 220.0,109.0 220.4,109.4 220.7,110.1 221.1,104.7 221.4,109.6 221.7,108.6 222.1,108.8 222.4,108.8 222.7,109.6 223.1,109.5 223.4,111.0 223.8,108.1 224.1,109.3 224.4,110.0 224.8,107.9 225.1,108.5 225.5,109.6 225.8,109.0 226.1,108.6 226.5,109.1 226.8,112.4 227.2,108.1 227.5,107.2 227.8,109.0 228.2,106.2 228.5,107.8 228.9,106.0 229.2,110.4 229.5,109.8 229.9,108.4 230.2,105.6 230.6,107.0 230.9,107.3 231.2,112.8 231.6,106.6 231.9,108.7 232.3,109.9 232.6,109.5 232.9,108.2 233.3,107.9 233.6,110.1 234.0,108.4 234.3,106.5 234.6,107.7 235.0,107.9 235.3,110.7 235.7,108.4 236.0,106.3 236.3,108.2 236.7,109.9 237.0,107.4 237.3,107.9 237.7,106.9 238.0,109.0 238.4,108.7 238.7,107.9 239.0,108.9 239.4,109.4 239.7,107.8 240.1,108.6 240.4,109.6 240.7,108.3 241.1,106.4 241.4,109.5 241.8,108.6 242.1,109.3 242.4,109.0 242.8,110.9 243.1,106.7 243.5,111.4 243.8,109.4 244.2,112.6 244.5,113.2 244.9,117.4 245.2,120.0 245.6,123.7 245.9,123.7 246.2,124.5 246.6,120.4 246.9,124.7 247.3,119.4 247.7,118.0 248.0,116.7 248.3,117.9 248.7,117.9 249.0,117.1 249.3,113.3 249.7,114.7 250.0,115.1 250.3,114.6 250.7,115.1 251.0,112.8 251.3,113.0 251.7,110.7 252.0,113.3 252.4,114.3 252.7,113.7 253.0,112.3 253.4,113.4 253.7,113.5 254.1,112.1 254.4,112.7 254.7,113.7 255.1,114.3 255.4,116.1 255.8,112.1 256.1,113.0 256.4,114.5 256.8,112.7 257.1,114.5 257.5,110.8 257.8,115.8 258.1,114.7 258.5,113.5 258.8,111.5 259.2,112.8 259.5,112.2 259.8,115.3 260.2,112.6 260.5,113.7 260.9,114.2 261.2,112.8 261.6,112.4 261.9,110.2 262.2,114.5 262.6,115.4 262.9,113.5 263.3,112.0 263.6,114.0 263.9,112.9 264.3,109.4 264.6,112.8 265.0,110.5 265.3,112.8 265.6,111.6 266.0,114.4 266.3,111.1 266.7,113.4 267.0,113.0 267.3,111.0 267.7,113.3 268.0,112.3 268.4,111.8 268.7,111.2 269.0,113.2 269.4,112.3 269.7,113.0 270.1,113.1 270.4,115.2 270.7,112.8 271.1,113.2 271.4,115.1 271.8,112.5 272.1,114.8 272.4,113.8 272.8,110.5 273.1,115.2 273.5,112.9 273.8,111.5 274.1,112.7 274.5,113.3 274.8,113.4 275.2,116.0 275.5,110.7 275.8,113.5 276.2,112.3 276.5,112.4 276.9,112.4 277.2,112.0 277.5,115.3 277.9,113.3 278.2,113.0 278.6,113.5 278.9,110.9 279.2,112.8 279.6,112.3 279.9,111.7 280.3,114.9 280.6,113.3 280.9,113.8 281.3,112.2 281.6,113.1 282.0,112.9 282.3,113.8 282.6,113.2 283.0,113.6 283.3,111.9 283.7,113.6 284.0,113.5 284.4,113.6 284.7,112.5 285.0,113.3 285.4,112.8 285.7,113.4 286.1,112.9 286.4,112.2 286.7,112.2 287.1,113.1 287.4,111.4 287.8,109.5 288.1,112.7 288.4,112.3 288.8,113.2 289.1,113.7 289.5,113.3 289.8,112.5 290.1,113.1 290.5,110.5 290.8,113.6 291.2,111.6 291.5,111.7 291.8,113.5 292.2,111.9 292.5,111.5 292.9,112.4 293.2,111.4 293.5,113.9 293.9,111.2 294.2,112.6 294.6,114.3 294.9,113.2 295.2,115.9 295.6,114.2 295.9,113.2 296.3,111.1 296.6,113.6 296.9,114.4 297.3,114.0 297.6,113.5 298.0,113.6 298.3,112.5 298.6,113.3 299.0,113.2 299.3,112.7 299.7,114.5 300.0,111.5 300.3,114.4 300.7,111.9 301.0,111.3 301.4,112.3 301.7,111.5 302.0,112.3 302.4,113.5 302.7,114.3 303.1,113.7 303.4,109.0 303.8,114.3 304.1,111.6 304.4,113.2 304.8,114.4 305.1,114.1 305.5,115.0 305.8,112.7 306.1,111.3 306.5,111.3 306.8,115.3 307.2,112.1 307.5,112.8 307.8,111.9 308.2,111.3 308.5,114.6 308.9,114.4 309.2,112.8 309.5,113.5 309.9,111.5 310.2,112.4 310.6,111.8 310.9,113.9 311.2,114.2 311.6,111.7 311.9,110.1 312.3,113.6 312.6,115.3 312.9,111.1 313.3,115.0 313.6,112.9 314.0,112.9 314.3,112.5 314.5,221.0"/><path fill="none" stroke="#1ec81e" stroke-width="1.6" stroke-linejoin="round" d="M25.0,195.2 L25.3,193.2 L25.7,192.0 L26.0,195.0 L26.4,191.5 L26.7,195.4 L27.0,191.3 L27.4,193.5 L27.7,193.3 L28.1,193.1 L28.4,192.0 L28.7,191.4 L29.1,194.8 L29.4,193.5 L29.8,191.6 L30.1,191.0 L30.4,193.9 L30.8,194.8 L31.1,192.7 L31.4,192.2 L31.8,193.7 L32.1,193.5 L32.5,194.6 L32.8,192.6 L33.1,191.8 L33.5,192.7 L33.8,190.9 L34.2,191.3 L34.5,192.0 L34.8,192.6 L35.2,192.9 L35.5,190.8 L35.9,192.3 L36.2,195.7 L36.5,190.4 L36.9,192.3 L37.2,192.1 L37.6,193.7 L37.9,191.7 L38.2,196.1 L38.6,192.0 L38.9,193.2 L39.2,193.0 L39.6,194.8 L39.9,193.4 L40.3,190.8 L40.6,192.9 L40.9,191.9 L41.3,194.5 L41.6,193.6 L42.0,193.3 L42.3,192.7 L42.6,191.8 L43.0,194.3 L43.3,194.1 L43.7,196.1 L44.0,192.5 L44.3,194.4 L44.7,191.3 L45.0,193.6 L45.4,192.8 L45.7,191.3 L46.0,191.9 L46.4,193.0 L46.7,192.5 L47.1,192.4 L47.4,192.4 L47.7,192.8 L48.1,192.2 L48.4,190.4 L48.8,193.0 L49.1,195.3 L49.4,192.6 L49.8,193.0 L50.1,191.6 L50.4,191.7 L50.8,191.5 L51.1,190.9 L51.5,192.9 L51.8,191.5 L52.1,193.3 L52.5,193.0 L52.8,190.8 L53.2,196.0 L53.5,192.3 L53.8,193.0 L54.2,192.2 L54.5,191.2 L54.9,192.8 L55.2,193.6 L55.5,189.8 L55.9,192.9 L56.2,193.0 L56.6,195.4 L56.9,190.0 L57.2,191.8 L57.6,194.4 L57.9,191.8 L58.2,193.7 L58.6,191.4 L58.9,191.2 L59.3,193.9 L59.6,192.0 L59.9,191.3 L60.3,192.9 L60.6,194.5 L61.0,192.7 L61.3,196.0 L61.6,191.0 L62.0,195.2 L62.3,193.2 L62.7,194.1 L63.0,192.8 M63.5,213.7 L63.8,212.2 L64.2,212.2 L64.5,210.7 L64.8,211.6 L65.2,211.6 L65.5,212.6 M66.0,194.2 L66.3,192.2 L66.7,193.3 L67.0,192.7 L67.3,196.1 L67.7,191.7 L68.0,192.8 M68.5,211.3 L68.9,213.5 L69.2,210.1 L69.6,212.7 L69.9,211.2 L70.3,211.4 L70.6,212.3 L71.0,212.6 M71.5,195.7 L71.8,194.1 L72.2,194.0 L72.5,193.5 L72.9,193.5 L73.2,191.8 L73.5,193.0 L73.9,192.6 L74.2,193.7 L74.6,194.0 L74.9,191.2 L75.3,190.9 L75.6,194.9 L75.9,191.2 L76.3,194.5 L76.6,196.8 L77.0,194.3 L77.3,193.2 L77.6,192.6 L78.0,193.1 L78.3,194.1 L78.7,197.1 L79.0,194.1 L79.4,192.6 L79.7,195.1 L80.0,192.8 L80.4,194.7 L80.7,193.2 L81.1,193.1 L81.4,193.9 L81.7,192.6 L82.1,191.9 L82.4,192.7 L82.8,192.9 L83.1,192.3 L83.5,193.9 L83.8,193.3 L84.1,193.2 L84.5,192.3 L84.8,193.1 L85.2,193.8 L85.5,192.4 L85.8,192.5 L86.2,193.2 L86.5,193.1 L86.9,192.0 L87.2,194.0 L87.6,193.4 L87.9,195.5 L88.2,191.2 L88.6,191.0 L88.9,193.2 L89.3,195.5 L89.6,192.8 M90.0,213.9 L90.3,212.6 L90.7,211.5 L91.0,213.0 L91.4,211.9 L91.7,211.5 L92.0,212.7 L92.4,211.6 L92.7,212.2 L93.1,211.6 L93.4,212.3 L93.7,213.3 L94.1,212.7 L94.4,213.0 L94.8,211.1 L95.1,210.6 L95.4,212.4 L95.8,212.6 L96.1,213.5 L96.5,210.6 L96.8,213.9 L97.2,212.4 L97.5,211.1 L97.8,211.8 L98.2,211.9 L98.5,214.5 L98.9,212.0 L99.2,213.0 L99.5,211.3 L99.9,210.7 L100.2,211.6 L100.6,210.3 L100.9,212.1 L101.2,212.3 L101.6,215.0 L101.9,211.9 L102.3,214.1 L102.6,213.5 L102.9,213.7 L103.3,212.9 L103.6,212.4 L104.0,213.3 L104.3,214.2 L104.6,211.4 L105.0,210.8 L105.3,211.7 L105.7,210.5 L106.0,212.0 L106.3,212.1 L106.7,211.5 L107.0,212.3 L107.4,214.3 L107.7,212.7 L108.0,214.1 L108.4,212.4 L108.7,212.7 L109.1,210.6 L109.4,214.3 L109.8,213.0 L110.1,214.6 L110.4,212.5 L110.8,211.7 L111.1,215.5 L111.5,211.0 L111.8,209.8 L112.1,213.7 L112.5,211.1 L112.8,210.9 L113.2,212.9 L113.5,211.4 L113.8,215.1 L114.2,215.5 L114.5,215.6 L114.9,211.8 L115.2,213.9 L115.5,211.7 L115.9,211.8 L116.2,212.2 L116.6,212.3 L116.9,213.1 L117.2,212.1 L117.6,214.5 L117.9,210.6 L118.3,213.1 L118.6,210.3 L118.9,213.3 L119.3,214.3 L119.6,214.7 L120.0,213.5 L120.3,212.8 L120.6,211.7 L121.0,212.0 L121.3,212.8 L121.7,211.5 L122.0,210.7 L122.4,214.4 L122.7,213.3 L123.0,213.2 L123.4,212.0 L123.7,213.5 L124.1,212.0 L124.4,213.2 L124.7,212.7 L125.1,212.6 L125.4,211.7 L125.8,213.6 L126.1,211.4 L126.4,214.8 L126.8,213.9 L127.1,212.3 L127.5,213.3 L127.8,213.8 L128.1,212.6 L128.5,211.0 L128.8,213.0 L129.2,212.1 L129.5,212.3 L129.8,215.5 L130.2,212.7 L130.5,210.6 L130.9,213.6 L131.2,214.1 L131.5,211.4 L131.9,212.5 L132.2,211.6 L132.6,213.0 L132.9,214.2 L133.2,216.3 L133.6,212.3 L133.9,212.8 L134.3,214.6 L134.6,212.3 L135.0,213.9 L135.3,211.7 L135.6,217.1 L136.0,211.4 L136.3,213.6 L136.7,214.9 L137.0,214.0 L137.3,214.9 L137.7,213.9 L138.0,212.7 L138.4,213.6 L138.7,213.9 L139.0,212.9 L139.4,213.9 L139.7,212.2 L140.1,211.5 L140.4,212.6 M143.5,114.0 L143.9,111.5 L144.2,112.7 L144.6,112.2 L145.0,108.1 L145.3,111.1 L145.7,109.3 L146.0,109.3 L146.4,106.3 L146.7,108.1 L147.0,108.4 L147.4,107.9 L147.7,107.0 L148.1,106.3 L148.4,108.9 L148.7,109.3 L149.1,109.9 L149.4,106.7 L149.8,106.5 L150.1,111.6 L150.4,108.5 L150.8,108.6 L151.1,110.2 L151.5,107.2 L151.8,108.5 L152.1,109.9 L152.5,109.3 L152.8,109.9 L153.1,108.1 L153.5,110.8 L153.8,106.7 L154.2,105.6 L154.5,108.4 L154.8,108.9 L155.2,108.7 L155.5,105.8 L155.9,106.8 L156.2,108.2 L156.5,109.9 L156.9,110.4 L157.2,111.1 L157.6,107.0 L157.9,108.0 L158.2,106.2 L158.6,107.0 L158.9,106.9 L159.3,108.5 L159.6,107.5 L159.9,109.1 L160.3,110.7 L160.6,108.3 L161.0,108.1 L161.3,108.7 L161.6,108.4 L162.0,108.4 L162.3,107.8 L162.7,108.9 L163.0,107.9 L163.3,109.3 L163.7,108.9 L164.0,110.2 L164.4,109.5 L164.7,109.4 L165.0,108.6 L165.4,108.1 L165.7,109.5 L166.1,107.5 L166.4,109.3 L166.7,111.0 L167.1,107.7 L167.4,109.6 L167.7,109.6 L168.1,108.7 L168.4,110.2 L168.8,108.1 L169.1,107.0 L169.4,109.4 L169.8,109.4 L170.1,109.1 L170.5,110.0 L170.8,107.2 L171.1,107.5 L171.5,111.2 L171.8,108.3 L172.2,110.2 L172.5,109.3 L172.8,106.0 L173.2,107.9 L173.5,112.6 L173.9,109.0 L174.2,109.8 L174.5,106.9 L174.9,108.5 L175.2,107.2 L175.6,108.3 L175.9,108.9 L176.2,107.7 L176.6,106.8 L176.9,109.5 L177.3,109.5 L177.6,108.0 L177.9,107.7 L178.3,109.9 L178.6,108.5 L179.0,110.4 L179.3,109.6 L179.6,108.3 L180.0,110.1 L180.3,106.1 L180.6,107.4 L181.0,108.8 L181.3,110.0 L181.7,109.9 L182.0,109.5 L182.3,107.6 L182.7,108.6 L183.0,111.3 L183.4,109.7 L183.7,110.2 L184.0,108.9 L184.4,107.0 L184.7,108.2 L185.1,110.5 L185.4,107.6 L185.7,110.5 L186.1,109.4 L186.4,106.3 L186.8,108.8 L187.1,108.0 L187.4,108.4 L187.8,110.8 L188.1,106.8 L188.5,106.5 L188.8,108.2 L189.1,108.9 L189.5,109.1 L189.8,108.9 L190.2,107.5 L190.5,108.4 L190.8,111.7 L191.2,109.4 L191.5,109.9 L191.9,109.2 L192.2,109.0 L192.5,106.6 L192.9,109.4 L193.2,112.2 L193.6,106.2 L193.9,109.5 L194.2,106.9 L194.6,109.7 L194.9,109.2 L195.2,108.6 L195.6,107.0 L195.9,107.9 L196.3,110.6 L196.6,108.3 L196.9,108.6 L197.3,109.5 L197.6,107.9 L198.0,108.4 L198.3,106.6 L198.6,111.5 L199.0,109.1 L199.3,109.6 L199.7,107.9 L200.0,107.2 L200.3,109.7 L200.7,108.0 L201.0,108.8 L201.4,107.3 L201.7,111.8 L202.0,108.6 L202.4,109.2 L202.7,110.0 L203.1,107.1 L203.4,109.0 L203.7,106.9 L204.1,107.5 L204.4,109.9 L204.8,110.3 L205.1,109.3 L205.4,107.4 L205.8,108.6 L206.1,109.8 L206.5,108.1 L206.8,108.3 L207.1,109.0 L207.5,109.9 L207.8,107.8 L208.2,106.6 L208.5,107.9 L208.8,108.5 L209.2,108.4 L209.5,109.1 L209.8,110.3 L210.2,108.7 L210.5,109.3 L210.9,107.8 L211.2,108.6 L211.5,109.5 L211.9,107.1 L212.2,110.1 L212.6,107.5 L212.9,108.3 L213.2,109.5 L213.6,109.5 L213.9,108.8 L214.3,107.8 L214.6,111.4 L214.9,108.6 L215.3,108.8 L215.6,108.8 L216.0,108.9 L216.3,108.3 L216.6,107.9 L217.0,107.3 L217.3,107.1 L217.7,109.7 L218.0,111.0 L218.3,109.0 L218.7,108.9 L219.0,108.4 L219.4,108.2 L219.7,111.3 L220.0,109.0 L220.4,109.4 L220.7,110.1 L221.1,104.7 L221.4,109.6 L221.7,108.6 L222.1,108.8 L222.4,108.8 L222.7,109.6 L223.1,109.5 L223.4,111.0 L223.8,108.1 L224.1,109.3 L224.4,110.0 L224.8,107.9 L225.1,108.5 L225.5,109.6 L225.8,109.0 L226.1,108.6 L226.5,109.1 L226.8,112.4 L227.2,108.1 L227.5,107.2 L227.8,109.0 L228.2,106.2 L228.5,107.8 L228.9,106.0 L229.2,110.4 L229.5,109.8 L229.9,108.4 L230.2,105.6 L230.6,107.0 L230.9,107.3 L231.2,112.8 L231.6,106.6 L231.9,108.7 L232.3,109.9 L232.6,109.5 L232.9,108.2 L233.3,107.9 L233.6,110.1 L234.0,108.4 L234.3,106.5 L234.6,107.7 L235.0,107.9 L235.3,110.7 L235.7,108.4 L236.0,106.3 L236.3,108.2 L236.7,109.9 L237.0,107.4 L237.3,107.9 L237.7,106.9 L238.0,109.0 L238.4,108.7 L238.7,107.9 L239.0,108.9 L239.4,109.4 L239.7,107.8 L240.1,108.6 L240.4,109.6 L240.7,108.3 L241.1,106.4 L241.4,109.5 L241.8,108.6 L242.1,109.3 L242.4,109.0 L242.8,110.9 L243.1,106.7 L243.5,111.4 L243.8,109.4 L244.2,112.6 L244.5,113.2 L244.9,117.4 L245.2,120.0 L245.6,123.7 L245.9,123.7 L246.2,124.5 L246.6,120.4 L246.9,124.7 L247.3,119.4 L247.7,118.0 L248.0,116.7 L248.3,117.9 L248.7,117.9 L249.0,117.1 L249.3,113.3 L249.7,114.7 L250.0,115.1 L250.3,114.6 L250.7,115.1 L251.0,112.8 L251.3,113.0 L251.7,110.7 L252.0,113.3 L252.4,114.3 L252.7,113.7 L253.0,112.3 L253.4,113.4 L253.7,113.5 L254.1,112.1 L254.4,112.7 L254.7,113.7 L255.1,114.3 L255.4,116.1 L255.8,112.1 L256.1,113.0 L256.4,114.5 L256.8,112.7 L257.1,114.5 L257.5,110.8 L257.8,115.8 L258.1,114.7 L258.5,113.5 L258.8,111.5 L259.2,112.8 L259.5,112.2 L259.8,115.3 L260.2,112.6 L260.5,113.7 L260.9,114.2 L261.2,112.8 L261.6,112.4 L261.9,110.2 L262.2,114.5 L262.6,115.4 L262.9,113.5 L263.3,112.0 L263.6,114.0 L263.9,112.9 L264.3,109.4 L264.6,112.8 L265.0,110.5 L265.3,112.8 L265.6,111.6 L266.0,114.4 L266.3,111.1 L266.7,113.4 L267.0,113.0 L267.3,111.0 L267.7,113.3 L268.0,112.3 L268.4,111.8 L268.7,111.2 L269.0,113.2 L269.4,112.3 L269.7,113.0 L270.1,113.1 L270.4,115.2 L270.7,112.8 L271.1,113.2 L271.4,115.1 L271.8,112.5 L272.1,114.8 L272.4,113.8 L272.8,110.5 L273.1,115.2 L273.5,112.9 L273.8,111.5 L274.1,112.7 L274.5,113.3 L274.8,113.4 L275.2,116.0 L275.5,110.7 L275.8,113.5 L276.2,112.3 L276.5,112.4 L276.9,112.4 L277.2,112.0 L277.5,115.3 L277.9,113.3 L278.2,113.0 L278.6,113.5 L278.9,110.9 L279.2,112.8 L279.6,112.3 L279.9,111.7 L280.3,114.9 L280.6,113.3 L280.9,113.8 L281.3,112.2 L281.6,113.1 L282.0,112.9 L282.3,113.8 L282.6,113.2 L283.0,113.6 L283.3,111.9 L283.7,113.6 L284.0,113.5 L284.4,113.6 L284.7,112.5 L285.0,113.3 L285.4,112.8 L285.7,113.4 L286.1,112.9 L286.4,112.2 L286.7,112.2 L287.1,113.1 L287.4,111.4 L287.8,109.5 L288.1,112.7 L288.4,112.3 L288.8,113.2 L289.1,113.7 L289.5,113.3 L289.8,112.5 L290.1,113.1 L290.5,110.5 L290.8,113.6 L291.2,111.6 L291.5,111.7 L291.8,113.5 L292.2,111.9 L292.5,111.5 L292.9,112.4 L293.2,111.4 L293.5,113.9 L293.9,111.2 L294.2,112.6 L294.6,114.3 L294.9,113.2 L295.2,115.9 L295.6,114.2 L295.9,113.2 L296.3,111.1 L296.6,113.6 L296.9,114.4 L297.3,114.0 L297.6,113.5 L298.0,113.6 L298.3,112.5 L298.6,113.3 L299.0,113.2 L299.3,112.7 L299.7,114.5 L300.0,111.5 L300.3,114.4 L300.7,111.9 L301.0,111.3 L301.4,112.3 L301.7,111.5 L302.0,112.3 L302.4,113.5 L302.7,114.3 L303.1,113.7 L303.4,109.0 L303.8,114.3 L304.1,111.6 L304.4,113.2 L304.8,114.4 L305.1,114.1 L305.5,115.0 L305.8,112.7 L306.1,111.3 L306.5,111.3 L306.8,115.3 L307.2,112.1 L307.5,112.8 L307.8,111.9 L308.2,111.3 L308.5,114.6 L308.9,114.4 L309.2,112.8 L309.5,113.5 L309.9,111.5 L310.2,112.4 L310.6,111.8 L310.9,113.9 L311.2,114.2 L311.6,111.7 L311.9,110.1 L312.3,113.6 L312.6,115.3 L312.9,111.1 L313.3,115.0 L313.6,112.9 L314.0,112.9 L314.3,112.5"/>
<polyline fill="none" stroke="#1ec81e" stroke-width="1" stroke-opacity="0.55" points="347.0,221.0 348.0,181.8 348.3,184.6 348.7,183.8 349.0,187.6 349.3,190.8 349.7,188.9 350.0,188.5 350.3,189.0 350.7,190.1 351.0,190.9 351.3,193.1 351.7,191.7 352.0,192.1 352.3,190.6 352.7,190.7 353.0,192.3 353.4,191.8 353.7,191.7 354.0,192.7 354.4,194.2 354.7,190.7 355.1,192.9 355.4,193.3 355.7,191.3 356.1,190.2 356.4,190.3 356.8,192.2 357.1,192.1 357.4,192.5 357.8,192.9 358.1,193.4 358.5,193.8 358.8,194.3 359.1,191.9 359.5,192.2 359.8,190.7 360.2,190.4 360.5,191.9 360.8,190.5 361.2,193.8 361.5,190.9 361.9,194.3 362.2,191.0 362.5,191.8 362.9,193.5 363.2,192.5 363.6,193.9 363.9,190.8 364.2,193.0 364.6,191.4 364.9,192.6 365.3,190.1 365.6,190.8 365.9,191.6 366.3,192.6 366.6,190.5 367.0,190.7 367.3,189.5 367.6,191.2 368.0,194.2 368.3,191.1 368.7,189.3 369.0,190.1 369.3,190.4 369.7,191.3 370.0,192.3 370.4,193.2 370.7,191.3 371.1,192.8 371.4,191.9 371.7,192.9 372.1,193.4 372.4,193.1 372.8,189.7 373.1,193.0 373.4,191.5 373.8,188.8 374.1,192.6 374.5,191.6 374.8,190.3 375.1,189.3 375.5,192.7 375.8,192.4 376.2,192.9 376.5,192.1 376.8,194.7 377.2,191.1 377.5,192.1 377.9,192.1 378.2,194.2 378.5,193.7 378.9,191.2 379.2,193.6 379.6,191.1 379.9,193.1 380.2,189.8 380.6,189.5 380.9,193.3 381.3,192.6 381.6,191.4 381.9,189.6 382.3,191.2 382.6,191.2 383.0,193.0 383.3,192.2 383.6,189.2 384.0,190.9 384.3,190.4 384.7,191.0 385.0,190.3 385.3,193.6 385.7,193.6 386.0,191.7 386.4,190.9 386.7,190.7 387.0,191.9 387.4,195.0 387.7,193.3 388.1,192.7 388.4,193.6 388.7,191.2 389.1,191.3 389.4,192.6 389.8,190.4 390.1,193.7 390.4,191.2 390.8,190.2 391.1,193.3 391.5,191.6 391.8,191.6 392.1,193.9 392.5,194.0 392.8,191.1 393.2,193.6 393.5,189.9 393.8,194.0 394.2,192.3 394.5,192.1 394.9,194.1 395.2,192.6 395.5,189.5 395.9,192.5 396.2,193.3 396.6,193.4 396.9,194.2 397.2,191.5 397.6,190.3 397.9,189.8 398.3,191.3 398.6,191.2 398.9,192.3 399.3,194.3 399.6,191.3 400.0,190.2 400.3,192.1 400.6,192.3 401.0,193.0 401.3,193.9 401.7,192.7 402.0,192.4 402.3,191.0 402.7,192.5 403.0,193.4 403.4,191.5 403.7,194.3 404.0,192.0 404.4,193.1 404.7,189.7 405.1,193.6 405.4,191.8 405.7,191.3 406.1,192.3 406.4,192.4 406.8,191.0 407.1,190.2 407.4,192.6 407.8,193.0 408.1,192.3 408.5,191.6 408.8,191.7 409.2,189.4 409.5,191.3 409.8,191.0 410.2,191.8 410.5,188.8 410.9,190.2 411.2,191.3 411.5,189.4 411.9,190.1 412.2,194.0 412.6,191.7 412.9,191.3 413.2,192.1 413.6,190.5 413.9,192.1 414.3,191.3 414.6,190.5 414.9,192.0 415.3,192.9 415.6,192.0 416.0,190.2 416.3,192.1 416.6,191.1 417.0,191.3 417.3,192.2 417.7,192.6 418.0,193.1 418.3,191.5 418.7,195.4 419.0,193.3 419.4,193.0 419.7,194.4 420.0,193.6 420.4,194.2 420.7,193.7 421.1,191.5 421.4,193.2 421.7,193.6 422.1,193.1 422.4,193.9 422.8,192.9 423.1,190.9 423.4,191.8 423.8,190.7 424.1,190.2 424.5,194.8 424.8,193.2 425.1,193.8 425.5,190.2 425.8,193.1 426.2,191.4 426.5,192.0"/><path fill="none" stroke="#1ec81e" stroke-width="1.6" stroke-linejoin="round" d="M348.0,181.8 L348.3,184.6 L348.7,183.8 L349.0,187.6 L349.3,190.8 L349.7,188.9 L350.0,188.5 L350.3,189.0 L350.7,190.1 L351.0,190.9 L351.3,193.1 L351.7,191.7 L352.0,192.1 L352.3,190.6 L352.7,190.7 L353.0,192.3 L353.4,191.8 L353.7,191.7 L354.0,192.7 L354.4,194.2 L354.7,190.7 L355.1,192.9 L355.4,193.3 L355.7,191.3 L356.1,190.2 L356.4,190.3 L356.8,192.2 L357.1,192.1 L357.4,192.5 L357.8,192.9 L358.1,193.4 L358.5,193.8 L358.8,194.3 L359.1,191.9 L359.5,192.2 L359.8,190.7 L360.2,190.4 L360.5,191.9 L360.8,190.5 L361.2,193.8 L361.5,190.9 L361.9,194.3 L362.2,191.0 L362.5,191.8 L362.9,193.5 L363.2,192.5 L363.6,193.9 L363.9,190.8 L364.2,193.0 L364.6,191.4 L364.9,192.6 L365.3,190.1 L365.6,190.8 L365.9,191.6 L366.3,192.6 L366.6,190.5 L367.0,190.7 L367.3,189.5 L367.6,191.2 L368.0,194.2 L368.3,191.1 L368.7,189.3 L369.0,190.1 L369.3,190.4 L369.7,191.3 L370.0,192.3 L370.4,193.2 L370.7,191.3 L371.1,192.8 L371.4,191.9 L371.7,192.9 L372.1,193.4 L372.4,193.1 L372.8,189.7 L373.1,193.0 L373.4,191.5 L373.8,188.8 L374.1,192.6 L374.5,191.6 L374.8,190.3 L375.1,189.3 L375.5,192.7 L375.8,192.4 L376.2,192.9 L376.5,192.1 L376.8,194.7 L377.2,191.1 L377.5,192.1 L377.9,192.1 L378.2,194.2 L378.5,193.7 L378.9,191.2 L379.2,193.6 L379.6,191.1 L379.9,193.1 L380.2,189.8 L380.6,189.5 L380.9,193.3 L381.3,192.6 L381.6,191.4 L381.9,189.6 L382.3,191.2 L382.6,191.2 L383.0,193.0 L383.3,192.2 L383.6,189.2 L384.0,190.9 L384.3,190.4 L384.7,191.0 L385.0,190.3 L385.3,193.6 L385.7,193.6 L386.0,191.7 L386.4,190.9 L386.7,190.7 L387.0,191.9 L387.4,195.0 L387.7,193.3 L388.1,192.7 L388.4,193.6 L388.7,191.2 L389.1,191.3 L389.4,192.6 L389.8,190.4 L390.1,193.7 L390.4,191.2 L390.8,190.2 L391.1,193.3 L391.5,191.6 L391.8,191.6 L392.1,193.9 L392.5,194.0 L392.8,191.1 L393.2,193.6 L393.5,189.9 L393.8,194.0 L394.2,192.3 L394.5,192.1 L394.9,194.1 L395.2,192.6 L395.5,189.5 L395.9,192.5 L396.2,193.3 L396.6,193.4 L396.9,194.2 L397.2,191.5 L397.6,190.3 L397.9,189.8 L398.3,191.3 L398.6,191.2 L398.9,192.3 L399.3,194.3 L399.6,191.3 L400.0,190.2 L400.3,192.1 L400.6,192.3 L401.0,193.0 L401.3,193.9 L401.7,192.7 L402.0,192.4 L402.3,191.0 L402.7,192.5 L403.0,193.4 L403.4,191.5 L403.7,194.3 L404.0,192.0 L404.4,193.1 L404.7,189.7 L405.1,193.6 L405.4,191.8 L405.7,191.3 L406.1,192.3 L406.4,192.4 L406.8,191.0 L407.1,190.2 L407.4,192.6 L407.8,193.0 L408.1,192.3 L408.5,191.6 L408.8,191.7 L409.2,189.4 L409.5,191.3 L409.8,191.0 L410.2,191.8 L410.5,188.8 L410.9,190.2 L411.2,191.3 L411.5,189.4 L411.9,190.1 L412.2,194.0 L412.6,191.7 L412.9,191.3 L413.2,192.1 L413.6,190.5 L413.9,192.1 L414.3,191.3 L414.6,190.5 L414.9,192.0 L415.3,192.9 L415.6,192.0 L416.0,190.2 L416.3,192.1 L416.6,191.1 L417.0,191.3 L417.3,192.2 L417.7,192.6 L418.0,193.1 L418.3,191.5 L418.7,195.4 L419.0,193.3 L419.4,193.0 L419.7,194.4 L420.0,193.6 L420.4,194.2 L420.7,193.7 L421.1,191.5 L421.4,193.2 L421.7,193.6 L422.1,193.1 L422.4,193.9 L422.8,192.9 L423.1,190.9 L423.4,191.8 L423.8,190.7 L424.1,190.2 L424.5,194.8 L424.8,193.2 L425.1,193.8 L425.5,190.2 L425.8,193.1 L426.2,191.4 L426.5,192.0"/>
<path fill="none" stroke="#1ec81e" stroke-width="1.6" d="M426.5,210.6 L426.8,210.5 L427.2,211.5 L427.5,210.5 L427.8,212.1 L428.2,211.6 L428.5,209.6 L428.8,211.0 L429.2,213.3 L429.5,210.4 M429.5,192.6 L429.8,191.1 L430.2,194.3 L430.5,192.7 L430.9,192.2 L431.2,190.7 L431.6,194.2 L431.9,192.3 L432.3,194.0 L432.6,190.8 L432.9,191.7 L433.3,192.5 L433.6,192.0 L434.0,194.5 L434.3,192.9 L434.7,193.0 L435.0,190.7 L435.4,190.1 L435.7,194.8 L436.1,191.9 L436.4,191.7 L436.7,194.7 L437.1,192.1 L437.4,192.6 L437.8,193.6 L438.1,192.8 L438.5,193.3 L438.8,193.0 L439.2,192.1 L439.5,192.4 M439.5,209.8 L439.8,211.6 L440.2,212.5 L440.5,211.1 L440.8,212.7 L441.2,211.7 L441.5,211.2 L441.8,210.8 L442.2,213.0 L442.5,214.1 M442.5,194.2 L442.8,192.6 L443.2,192.9 L443.5,192.6 L443.8,191.2 L444.2,194.3 L444.5,195.6 L444.8,191.9 L445.2,192.0 L445.5,194.4 L445.8,193.0 L446.2,193.9 L446.5,190.8 M446.5,211.7 L446.8,212.6 L447.2,211.3 L447.5,212.3 L447.8,212.8 L448.2,211.5 L448.5,212.5 M448.5,192.2 L448.8,193.3 L449.2,195.3 L449.5,190.2 L449.9,192.8 L450.2,193.5 L450.6,195.9 L450.9,193.8 L451.3,195.3 L451.6,193.8 L451.9,192.3 L452.3,192.8 L452.6,193.4 L453.0,193.1 L453.3,194.2 L453.7,194.4 L454.0,195.7 L454.4,193.7 L454.7,193.4 L455.1,194.0 L455.4,195.1 L455.7,193.8 L456.1,191.6 L456.4,193.9 L456.8,192.0 L457.1,191.3 L457.5,195.2 L457.8,192.8 L458.2,193.8 L458.5,194.7 M458.5,209.6 L458.8,212.0 L459.2,212.0 L459.5,212.5 L459.8,210.5 L460.2,213.3 L460.5,209.8 M460.5,193.1 L460.8,194.0 L461.2,190.6 L461.5,195.9 L461.8,194.9 L462.2,193.2 L462.5,192.6 L462.8,191.6 L463.2,193.8 L463.5,194.4 M463.5,210.9 L463.8,212.5 L464.2,208.6 L464.5,209.8 L464.8,212.0 L465.2,212.2 L465.5,213.6 L465.8,212.4 L466.2,209.9 L466.5,211.4 M466.5,192.4 L466.8,194.9 L467.2,193.1 L467.5,193.6 L467.8,192.2 L468.2,195.5 L468.5,191.9 L468.8,193.0 L469.2,193.7 L469.5,191.8 L469.8,193.9 L470.2,193.5 L470.5,191.8 L470.8,195.6 L471.2,193.7 L471.5,195.4 M471.5,212.5 L471.8,211.8 L472.2,210.9 L472.5,212.5 L472.8,212.9 L473.2,211.2 L473.5,209.1 M473.5,190.1 L473.8,193.4 L474.2,194.1 L474.5,193.8 L474.8,192.2 L475.2,193.1 L475.5,193.1 L475.8,191.5 L476.2,190.8 L476.5,192.9 M476.5,209.8 L476.8,213.3 L477.2,212.3 L477.5,211.1 M477.5,191.6 L477.8,193.0 L478.2,193.8 L478.5,194.8 L478.8,191.5 L479.2,193.3 L479.5,196.7 L479.8,193.9 L480.2,192.0 L480.5,193.2 L480.8,193.8 L481.2,191.7 L481.5,191.3 L481.8,193.4 L482.2,194.8 L482.5,194.0 L482.8,190.5 L483.2,195.0 L483.5,194.2 L483.8,192.8 L484.2,192.6 L484.5,193.4 L484.8,191.1 L485.2,194.3 L485.5,194.5 M485.5,210.7 L485.8,209.4 L486.2,209.6 L486.5,213.2 L486.8,213.2 L487.2,212.4 L487.5,211.7 L487.8,211.9 L488.2,213.6 L488.5,211.1 M488.5,194.4 L488.8,193.2 L489.2,192.6 L489.5,192.3 L489.8,193.2 L490.2,193.8 L490.5,194.8 L490.8,192.1 L491.2,193.8 L491.5,191.9 M491.5,212.4 L491.8,210.3 L492.2,210.2 L492.5,209.1 M492.5,192.8 L492.8,193.5 L493.2,195.4 L493.5,194.3 L493.8,190.7 L494.2,192.8 L494.5,194.3 L494.8,194.1 L495.2,192.9 L495.5,196.0 M495.5,211.6 L495.8,211.5 L496.2,210.6 L496.5,213.6 M496.5,194.7 L496.8,194.2 L497.2,194.2 L497.5,193.2 L497.8,193.1 L498.2,193.9 L498.5,195.2 M498.5,212.8 L498.8,212.6 L499.2,211.7 L499.5,210.1 L499.8,211.3 L500.2,210.8 L500.5,212.2 M500.5,193.6 L500.8,191.6 L501.2,193.1 L501.5,193.8 L501.8,194.0 L502.2,194.0 L502.5,195.7 L502.8,196.3 L503.2,193.1 L503.5,193.7 L503.8,193.6 L504.2,194.7 L504.5,192.9 M504.5,210.1 L504.8,211.9 L505.2,210.0 L505.5,212.3 M505.5,193.8 L505.8,192.6 L506.2,191.3 L506.5,193.9 L506.9,192.6 L507.2,193.8 L507.6,194.1 L507.9,194.6 L508.3,196.0 L508.6,193.6 L508.9,193.9 L509.3,191.4 L509.6,194.5 L510.0,191.9 L510.3,191.8 L510.7,194.3 L511.0,189.6 L511.4,193.2 L511.7,193.6 L512.1,192.4 L512.4,195.1 L512.7,192.2 L513.1,193.7 L513.4,190.9 L513.8,191.0 L514.1,194.8 L514.5,194.8 L514.8,191.9 L515.2,193.5 L515.5,191.1 M515.5,212.7 L515.8,212.1 L516.2,211.4 L516.5,211.6 L516.8,210.5 L517.2,213.1 L517.5,210.9 M517.5,192.6 L517.8,192.3 L518.2,194.9 L518.5,191.8 L518.9,192.6 L519.2,189.0 L519.6,196.8 L519.9,192.0 L520.3,191.7 L520.6,193.6 L520.9,189.7 L521.3,195.1 L521.6,193.6 L522.0,193.2 L522.3,192.3 L522.7,193.0 L523.0,193.5 L523.4,193.7 L523.7,194.5 L524.1,194.1 L524.4,193.9 L524.7,194.7 L525.1,192.4 L525.4,189.9 L525.8,193.1 L526.1,189.4 L526.5,191.5 L526.8,191.8 L527.2,191.5 L527.5,194.9 M527.5,212.4 L527.8,212.3 L528.2,211.3 L528.5,210.8 L528.8,211.7 L529.2,209.8 L529.5,211.7 M529.5,191.9 L529.8,194.1 L530.2,192.3 L530.5,192.6 L530.8,192.9 L531.2,195.1 L531.5,192.3 L531.8,192.9 L532.2,193.1 L532.5,192.2 L532.8,194.3 L533.2,193.4 L533.5,194.0 M533.5,211.8 L533.8,213.3 L534.2,210.3 L534.5,215.3 L534.8,212.8 L535.2,212.1 L535.5,211.4 M535.5,189.8 L535.8,193.8 L536.2,193.4 L536.5,194.9 L536.9,195.2 L537.2,192.5 L537.6,189.8 L537.9,194.0 L538.3,194.0 L538.6,191.7 L538.9,194.7 L539.3,194.5 L539.6,192.5 L540.0,193.5 L540.3,194.8 L540.7,193.8 L541.0,194.3 L541.4,194.3 L541.7,192.6 L542.1,192.1 L542.4,193.2 L542.7,195.0 L543.1,191.3 L543.4,194.4 L543.8,188.9 L544.1,192.4 L544.5,195.3 L544.8,192.7 L545.2,193.3 L545.5,193.9 M545.5,210.7 L545.8,210.7 L546.2,211.3 L546.5,213.6 M546.5,191.8 L546.8,191.7 L547.2,193.7 L547.5,194.2 L547.8,196.2 L548.2,192.9 L548.5,193.6 L548.8,193.0 L549.2,194.3 L549.5,193.7 M549.5,212.9 L549.8,212.6 L550.2,212.1 L550.5,211.8 L550.8,210.9 L551.2,210.1 L551.5,210.7 L551.8,210.7 L552.2,210.7 L552.5,211.7 M552.5,193.6 L552.8,192.9 L553.2,195.0 L553.5,194.9 L553.8,191.7 L554.2,191.7 L554.5,193.6 L554.8,194.6 L555.2,193.2 L555.5,195.7 L555.8,192.0 L556.2,194.7 L556.5,194.5 L556.8,193.2 L557.2,191.2 L557.5,192.7 M557.5,211.2 L557.8,212.0 L558.2,212.0 L558.5,211.2 L558.8,213.1 L559.2,212.4 L559.5,209.6 L559.8,211.8 L560.2,210.9 L560.5,213.7 M560.5,193.0 L560.8,192.8 L561.2,192.6 L561.5,195.3 L561.8,192.9 L562.2,192.3 L562.5,194.1 L562.8,194.3 L563.2,193.1 L563.5,192.1 M563.5,209.0 L563.8,210.4 L564.2,214.3 L564.5,210.5 L564.8,209.4 L565.2,212.5 L565.5,211.2 M565.5,194.4 L565.8,194.1 L566.2,192.7 L566.5,192.5 L566.8,194.2 L567.2,192.4 L567.5,194.3 L567.8,192.6 L568.2,193.9 L568.5,191.2 L568.8,192.4 L569.2,190.9 L569.5,192.7 L569.8,192.6 L570.2,193.0 L570.5,193.5 L570.8,190.6 L571.2,193.2 L571.5,193.6 M571.5,208.5 L571.8,210.2 L572.2,210.2 L572.5,209.7 L572.8,213.1 L573.2,212.2 L573.5,211.7 M573.5,192.8 L573.8,193.7 L574.2,193.0 L574.5,192.8 L574.8,192.8 L575.2,193.3 L575.5,191.4 L575.8,193.3 L576.2,194.2 L576.5,193.5 L576.8,191.7 L577.2,193.4 L577.5,192.0 L577.8,191.5 L578.2,196.2 L578.5,192.6 M578.5,210.3 L578.8,210.8 L579.2,208.8 L579.5,209.5 M579.5,194.6 L579.8,194.1 L580.2,191.0 L580.5,195.8 L580.8,191.2 L581.2,192.3 L581.5,192.1 L581.8,192.7 L582.2,191.0 L582.5,192.1 M582.5,212.2 L582.8,212.9 L583.2,211.5 L583.5,212.0 M583.5,194.1 L583.8,193.7 L584.2,193.2 L584.5,193.1 L584.8,193.9 L585.2,192.0 L585.5,191.5 L585.8,193.5 L586.2,193.7 L586.5,191.6 L586.8,193.7 L587.2,193.6 L587.5,193.1 L587.8,193.9 L588.2,193.8 L588.5,193.5 L588.8,194.2 L589.2,192.9 L589.5,191.6 L589.8,193.4 L590.2,194.1 L590.5,193.1 L590.8,194.1 L591.2,193.4 L591.5,192.2 M591.5,210.6 L591.8,211.7 L592.2,213.8 L592.5,209.7 M592.5,194.7 L592.8,192.9 L593.2,193.4 L593.5,193.7 L593.8,195.5 L594.2,192.5 L594.5,192.1 L594.8,194.4 L595.2,192.3 L595.5,193.2 L595.8,195.2 L596.2,193.2 L596.5,193.3 L596.8,193.5 L597.2,192.1 L597.5,193.5 M597.5,211.0 L597.8,211.1 L598.2,212.2 L598.5,212.6 L598.8,211.4 L599.2,214.2 L599.5,209.8 L599.8,211.4 L600.2,212.6 L600.5,211.6 M600.5,193.3 L600.8,193.2 L601.2,194.4 L601.5,191.0 L601.8,193.5 L602.2,192.8 L602.5,193.0 L602.8,195.3 L603.2,194.5 L603.5,194.2 M603.5,209.4 L603.8,210.3 L604.2,210.8 L604.5,213.8 M604.5,195.3 L604.8,194.6 L605.2,193.7 L605.5,194.9 L605.8,192.5 L606.2,193.2 L606.5,193.9 M606.5,210.6 L606.8,211.1 L607.2,213.0 L607.5,211.3 L607.8,210.4 L608.2,211.4 L608.5,211.0 M608.5,195.7 L608.8,192.8 L609.2,193.2 L609.5,193.1 L609.8,191.8 L610.2,194.7 L610.5,193.4 L610.8,195.0 L611.2,193.1 L611.5,193.3 L611.8,195.6 L612.2,193.2 L612.5,193.8 M612.5,213.3 L612.8,210.5 L613.2,211.3 L613.5,210.9 M613.5,194.4 L613.8,194.0 L614.2,195.3 L614.5,191.8 L614.9,196.0 L615.2,191.4 L615.6,192.5 L615.9,192.1 L616.3,195.4 L616.6,193.9 L616.9,193.7 L617.3,194.9 L617.6,194.4 L618.0,193.1 L618.3,192.5 L618.7,191.3 L619.0,194.7 L619.4,192.8 L619.7,193.0 L620.1,193.4 L620.4,194.1 L620.7,194.2 L621.1,194.2 L621.4,195.9 L621.8,194.6 L622.1,191.9 L622.5,194.0 L622.8,192.0 L623.2,191.5 L623.5,193.9 M623.5,210.4 L623.8,212.9 L624.2,211.7 L624.5,210.5 L624.8,208.1 L625.2,212.1 L625.5,209.7 L625.8,211.4 L626.2,211.4 L626.5,211.0 M626.5,194.3 L626.8,192.2 L627.2,194.4 L627.5,193.9 L627.8,190.9 L628.2,192.7 L628.5,192.8 L628.8,193.6 L629.2,190.5 L629.5,192.1 L629.8,192.9 L630.2,192.6 L630.5,193.3 L630.8,192.4 L631.2,189.6 L631.5,191.2 L631.8,193.1 L632.2,193.7 L632.5,192.6 L632.8,195.0 L633.2,192.7 L633.5,193.5 L633.8,193.8 L634.2,193.4 L634.5,195.0 M634.5,212.7 L634.8,211.1 L635.2,210.9 L635.5,211.8 L635.8,212.3 L636.2,211.5 L636.5,212.9 L636.8,210.7 L637.2,210.1 L637.5,211.0 M637.5,195.7 L637.8,193.2 L638.2,192.8 L638.5,192.9 L638.8,193.8 L639.2,192.3 L639.5,194.1 L639.8,192.7 L640.2,191.1 L640.5,192.2 M640.5,211.9 L640.8,211.8 L641.2,213.2 L641.5,215.1 L641.8,213.4 L642.2,210.9 L642.5,210.9 M642.5,195.1 L642.8,191.3 L643.2,192.0 L643.5,194.2 L643.8,193.4 L644.2,192.6 L644.5,193.4 L644.8,192.0 L645.2,194.4 L645.5,194.0 L645.8,194.7 L646.2,193.2 L646.5,195.0 L646.8,192.4 L647.2,194.9 L647.5,195.2 M647.5,212.1 L647.8,210.4 L648.2,210.7 L648.5,210.1 L648.8,212.6 L649.2,210.8 L649.5,209.6 M649.5,195.8 L649.8,193.2 L650.2,194.1 L650.5,192.2 L650.8,191.8 L651.2,194.0 L651.5,194.6 L651.8,192.4 L652.2,191.9 L652.5,193.1 M652.5,213.6 L652.8,212.3 L653.2,213.3 L653.5,210.4 L653.8,209.8 L654.2,210.4 L654.5,211.0 M654.5,194.9 L654.8,191.8 L655.2,193.8 L655.5,193.0 L655.8,193.6 L656.2,192.8 L656.5,191.8 L656.8,193.4 L657.2,194.4 L657.5,192.5 L657.8,193.9 L658.2,195.9 L658.5,194.5 L658.8,195.2 L659.2,192.9 L659.5,194.2 L659.8,192.3 L660.2,193.6 L660.5,192.4 M660.5,212.1 L660.8,211.3 L661.2,211.8 L661.5,211.0 M661.5,194.3 L661.8,193.3 L662.2,192.9 L662.5,194.4 L662.8,195.8 L663.2,194.4 L663.5,193.8 L663.8,192.1 L664.2,192.2 L664.5,194.7 L664.8,193.6 L665.2,193.4 L665.5,194.2 L665.8,192.6 L666.2,190.3 L666.5,193.3 L666.8,194.8 L667.2,193.1 L667.5,193.6 L667.8,194.3 L668.2,195.7 L668.5,192.0 L668.8,194.1 L669.2,195.6 L669.5,192.4 M669.5,212.8 L669.8,212.5 L670.2,211.6 L670.5,211.0 M670.5,192.7 L670.8,194.9 L671.2,194.6 L671.5,192.2 L671.8,195.9 L672.2,194.7 L672.5,191.8 L672.8,194.6 L673.2,194.8 L673.5,194.6 M673.5,211.1 L673.8,210.9 L674.2,213.5 L674.5,211.9 L674.8,212.4 L675.2,211.8 L675.5,213.5 M675.5,191.9 L675.8,191.0 L676.2,192.5 L676.5,192.8 L676.8,192.4 L677.2,196.1 L677.5,192.8 L677.8,192.4 L678.2,192.9 L678.5,192.9 M678.5,210.0 L678.8,211.3 L679.2,213.3 L679.5,212.1 M679.5,193.5 L679.8,192.8 L680.2,192.8 L680.5,195.4 L680.8,193.3 L681.2,194.4 L681.5,192.5 M681.5,211.4 L681.8,213.0 L682.2,211.9 L682.5,211.6 L682.8,210.3 L683.2,213.0 L683.5,210.9 L683.8,212.3 L684.2,213.1 L684.5,210.8 M684.5,192.3 L684.8,191.8 L685.2,193.1 L685.5,194.4 L685.9,191.7 L686.2,190.1 L686.6,192.9 L686.9,194.3 L687.3,195.3 L687.6,194.2 L687.9,194.8 L688.3,193.4 L688.6,194.7 L689.0,193.6 L689.3,191.0 L689.7,193.5 L690.0,192.4 L690.4,192.4 L690.7,193.4 L691.1,192.0 L691.4,192.6 L691.7,195.0 L692.1,193.7 L692.4,192.9 L692.8,191.6 L693.1,193.9 L693.5,192.7 L693.8,193.4 L694.2,193.5 L694.5,191.9 M694.5,211.6 L694.8,211.8 L695.2,211.1 L695.5,213.0 L695.8,210.7 L696.2,209.4 L696.5,211.0 M696.5,193.2 L696.8,193.7 L697.2,192.6 L697.5,195.0 L697.8,192.3 L698.2,193.1 L698.5,192.8 L698.8,193.0 L699.2,193.6 L699.5,192.6 L699.8,193.3 L700.2,194.1 L700.5,192.4 M700.5,209.3 L700.8,210.6 L701.2,212.3 L701.5,212.3 L701.8,215.0 L702.2,213.1 L702.5,212.0 L702.8,211.9 L703.2,207.8 L703.5,212.5 M703.5,194.4 L703.8,193.5 L704.2,196.0 L704.5,194.1 L704.8,194.3 L705.2,192.9 L705.5,194.6 L705.8,193.6 L706.2,193.5 L706.5,195.5 L706.8,193.2 L707.2,193.2 L707.5,192.4 M707.5,211.7 L707.8,213.0 L708.2,212.7 L708.5,211.1 L708.8,209.7 L709.2,214.7 L709.5,211.3 M709.5,193.1 L709.8,194.4 L710.2,193.7 L710.5,192.4 L710.8,190.9 L711.2,191.0 L711.5,191.8 L711.8,192.0 L712.2,193.6 L712.5,194.0 L712.8,192.2 L713.2,193.5 L713.5,192.4 L713.8,192.8 L714.2,194.0 L714.5,192.6 L714.8,193.1 L715.2,193.6 L715.5,194.2 L715.8,192.2 L716.2,193.5 L716.5,189.4 L716.8,194.6 L717.2,192.2 L717.5,191.0 M717.5,213.4 L717.8,212.5 L718.2,210.9 L718.5,212.4 L718.8,212.4 L719.2,211.7 L719.5,211.5 L719.8,212.9 L720.2,213.4 L720.5,210.6 M720.5,195.0 L720.8,195.8 L721.2,191.9 L721.5,195.0 L721.8,192.8 L722.2,190.5 L722.5,194.4 L722.8,193.4 L723.2,192.9 L723.5,193.7 M723.5,211.8 L723.8,210.0 L724.2,212.8 L724.5,212.0 L724.8,211.6 L725.2,212.0 L725.5,212.6 L725.8,213.0 L726.2,212.7 L726.5,211.8 M726.5,194.6 L726.8,194.8 L727.2,193.2 L727.5,195.4 L727.8,192.9 L728.2,192.7 L728.5,193.6 L728.8,194.3 L729.2,193.0 L729.5,192.0 L729.8,191.3 L730.2,195.0 L730.5,193.5 L730.8,194.4 L731.2,192.8 L731.5,194.0 L731.8,193.6 L732.2,193.4 L732.5,192.2 L732.8,192.1 L733.2,194.6 L733.5,190.0 L733.8,192.7 L734.2,195.1 L734.5,194.1 M734.5,211.2 L734.8,214.1 L735.2,210.9 L735.5,211.8 L735.8,213.4 L736.2,212.8 L736.5,212.3 M736.5,192.4 L736.8,194.1 L737.2,192.2 L737.5,193.3 L737.8,194.0 L738.2,194.4 L738.5,192.5 M738.5,211.7 L738.8,212.6 L739.2,212.3 L739.5,210.9 L739.8,211.9 L740.2,209.8 L740.5,210.6 M740.5,194.6 L740.8,193.5 L741.2,193.0 L741.5,193.7 L741.8,192.9 L742.2,193.5 L742.5,191.6 L742.8,193.3 L743.2,192.2 L743.5,193.5 L743.8,193.3 L744.2,193.6 L744.5,191.7 L744.8,195.5 L745.2,192.4 L745.5,192.9 M745.5,209.8 L745.8,211.9 L746.2,212.8 L746.5,211.3 M746.5,193.5 L746.8,191.5 L747.2,192.3 L747.5,192.4 L747.8,192.4 L748.2,193.8 L748.5,194.6 L748.8,191.0 L749.2,191.2 L749.5,195.2 L749.8,194.0 L750.2,193.5 L750.5,192.2 M750.5,211.6 L750.8,212.1 L751.2,212.3 L751.5,211.9 L751.8,213.5 L752.2,211.6 L752.5,211.7 M752.5,193.4 L752.8,194.8 L753.2,192.3 L753.5,192.0 L753.9,192.1 L754.2,192.1 L754.6,195.0 L754.9,190.3 L755.3,192.7 L755.6,194.3 L756.0,194.2 L756.3,192.6 L756.7,192.9 L757.0,191.3"/>
<path fill="none" stroke="#20c420" stroke-width="0.6" stroke-opacity="0.35" d="M429.5,192.6 L429.5,214.4 M439.5,191.3 L439.5,213.4 M442.5,190.8 L442.5,214.4 M446.5,192.1 L446.5,214.1 M448.5,192.8 L448.5,211.6 M458.5,191.0 L458.5,213.2 M460.5,191.6 L460.5,215.1 M463.5,190.6 L463.5,215.5 M466.5,192.8 L466.5,212.9 M471.5,191.2 L471.5,215.4 M473.5,191.6 L473.5,212.8 M476.5,190.7 L476.5,215.5 M477.5,192.3 L477.5,212.4 M485.5,191.4 L485.5,212.0 M488.5,192.8 L488.5,212.4 M491.5,191.5 L491.5,215.0 M492.5,192.9 L492.5,212.6 M495.5,192.0 L495.5,214.8 M496.5,190.6 L496.5,215.5 M498.5,193.2 L498.5,213.8 M500.5,191.0 L500.5,212.9 M504.5,193.3 L504.5,214.4 M505.5,192.1 L505.5,214.5 M515.5,190.5 L515.5,214.3 M517.5,191.0 L517.5,211.8 M527.5,193.1 L527.5,215.4 M529.5,191.0 L529.5,213.2 M533.5,190.6 L533.5,213.3 M535.5,190.6 L535.5,214.7 M545.5,191.6 L545.5,214.0 M546.5,192.0 L546.5,214.1 M549.5,192.3 L549.5,214.6 M552.5,190.5 L552.5,213.3 M557.5,193.1 L557.5,212.5 M560.5,192.9 L560.5,214.4 M563.5,192.1 L563.5,215.3 M565.5,191.8 L565.5,213.8 M571.5,193.1 L571.5,214.5 M573.5,191.7 L573.5,214.5 M578.5,191.3 L578.5,215.0 M579.5,192.9 L579.5,214.6 M582.5,192.0 L582.5,212.8 M583.5,191.7 L583.5,214.9 M591.5,192.3 L591.5,213.8 M592.5,190.9 L592.5,214.5 M597.5,191.7 L597.5,212.2 M600.5,191.9 L600.5,215.4 M603.5,192.0 L603.5,215.3 M604.5,192.4 L604.5,211.9 M606.5,192.1 L606.5,213.4 M608.5,192.4 L608.5,213.1 M612.5,191.3 L612.5,212.6 M613.5,192.3 L613.5,213.2 M623.5,191.3 L623.5,212.0 M626.5,191.2 L626.5,212.9 M634.5,192.5 L634.5,215.2 M637.5,192.7 L637.5,213.8 M640.5,191.1 L640.5,213.1 M642.5,192.9 L642.5,215.4 M647.5,191.0 L647.5,213.5 M649.5,190.6 L649.5,212.9 M652.5,193.1 L652.5,212.1 M654.5,191.1 L654.5,213.9 M660.5,191.7 L660.5,215.4 M661.5,192.8 L661.5,215.1 M669.5,190.7 L669.5,211.8 M670.5,193.1 L670.5,212.5 M673.5,190.9 L673.5,213.1 M675.5,190.4 L675.5,213.4 M678.5,192.4 L678.5,212.6 M679.5,190.6 L679.5,215.6 M681.5,191.3 L681.5,214.7 M684.5,192.0 L684.5,212.7 M694.5,192.6 L694.5,212.2 M696.5,190.9 L696.5,211.8 M700.5,191.1 L700.5,211.8 M703.5,192.5 L703.5,213.8 M707.5,192.1 L707.5,214.2 M709.5,192.7 L709.5,213.1 M717.5,192.5 L717.5,213.0 M720.5,190.7 L720.5,212.9 M723.5,192.0 L723.5,213.8 M726.5,191.2 L726.5,214.3 M734.5,192.1 L734.5,211.8 M736.5,191.3 L736.5,212.6 M738.5,191.6 L738.5,214.4 M740.5,191.3 L740.5,212.3 M745.5,191.6 L745.5,215.4 M746.5,192.2 L746.5,215.5 M750.5,191.7 L750.5,213.2 M752.5,191.2 L752.5,215.5"/>
</g>
<line x1="314.5" y1="48.0" x2="314.5" y2="403.0" stroke="#4cc84c" stroke-width="1.6" stroke-dasharray="4.6 2.5"/>
<line x1="347.5" y1="48.0" x2="347.5" y2="403.0" stroke="#4cc84c" stroke-width="1.6" stroke-dasharray="4.6 2.5"/>
<line x1="303" y1="50.5" x2="311" y2="50.5" stroke="#2ecc40" stroke-width="1" stroke-dasharray="2 2"/>
<polygon points="310.5,47.5 314.5,50.5 310.5,53.5" fill="#2ecc40"/>
<line x1="351" y1="50.5" x2="359" y2="50.5" stroke="#2ecc40" stroke-width="1" stroke-dasharray="2 2"/>
<polygon points="351.5,47.5 347.5,50.5 351.5,53.5" fill="#2ecc40"/>
<rect x="310.5" y="39.5" width="8" height="7" fill="#000" stroke="#9a9a9a" stroke-width="1"/>
<rect x="343.5" y="39.5" width="8" height="7" fill="#000" stroke="#9a9a9a" stroke-width="1"/>
<polygon points="241,40 248.3,40 244.6,44" fill="#4a90d9"/>
<polygon points="388,40.5 395.5,40.5 394,43.5 389.5,43.5" fill="none" stroke="#6f8fc8" stroke-width="0.9"/>
<polygon points="758,168.5 754,172 758,175.5" fill="#2ecc40"/>
<rect x="14.3" y="217.5" width="8.7" height="6.5" rx="1.5" fill="#22d822"/><polygon points="23,219.5 24.5,221 23,222.5" fill="#22d822"/><text x="18.6" y="223" font-size="5.5" fill="#0e8a0e" text-anchor="middle" font-family="Liberation Sans" font-weight="bold">C4</text>
<rect x="306" y="391" width="17" height="8" fill="#000" stroke="#2ecc40" stroke-width="0.9"/>
<rect x="339" y="391" width="16.5" height="8" fill="#000" stroke="#2ecc40" stroke-width="0.9"/>
<text x="314.5" y="45.2" fill="#eee" font-size="6.5" text-anchor="middle" font-family="Liberation Sans">A</text>
<text x="347.5" y="45.2" fill="#eee" font-size="6.5" text-anchor="middle" font-family="Liberation Sans">B</text>
<text x="314.5" y="397.8" fill="#2ecc40" font-size="6.6" text-anchor="middle" font-family="Liberation Sans">MX1</text>
<text x="347.3" y="397.8" fill="#2ecc40" font-size="6.6" text-anchor="middle" font-family="Liberation Sans">MX2</text>
</svg>
<div class="ax" style="left:25.5px;top:75.9px">1.5 V</div>
<div class="ax" style="left:25.5px;top:121.4px">1 V</div>
<div class="ax" style="left:25.5px;top:166.9px">0.5 V</div>
<div class="ax" style="left:25.5px;top:257.9px">-0.5 V</div>
<div class="ax" style="left:25.5px;top:303.4px">-1 V</div>
<div class="ax" style="left:25.5px;top:348.9px">-1.5 V</div>
<div class="ax" style="left:25.5px;top:394.4px">-2 V</div>
<div class="ax" style="left:90.0px;top:393px">-0.4 μs</div>
<div class="ax" style="left:163.3px;top:393px">-0.2 μs</div>
<div class="ax" style="left:236.5px;top:393px">0 μs</div>
<div class="ax" style="left:309.8px;top:393px">0.2 μs</div>
<div class="ax" style="left:383.1px;top:393px">0.4 μs</div>
<div class="ax" style="left:456.4px;top:393px">0.6 μs</div>
<div class="ax" style="left:529.7px;top:393px">0.8 μs</div>
<div class="ax" style="left:602.9px;top:393px">1 μs</div>
<div class="ax" style="left:676.2px;top:393px">1.2 μs</div>
<div class="abs" style="left:359px;top:42px;width:100px;height:16px;background:#181818"></div>
<div class="lab" style="left:359px;top:42.8px;background:none">ΔX(MX2-MX1)=90ns</div>
<div class="lab" style="left:359px;top:50.2px;background:none">1/ΔX(MX2-MX1)=11.1MHz</div>
<div class="lab" style="left:267px;top:273px;width:46px">MX1=190ns</div>
<div class="lab" style="left:300.5px;top:222px;width:44.5px">MX2=280ns</div>

<div class="abs" style="left:13px;top:404px;width:750px;height:27px;background:#111"></div>
<div class="ch" style="left:15px;width:62.5px">
 <div class="tag" style="background:#12e0f0;color:#0b5a66">C3</div><div class="r" style="top:0.5px;color:#2a9fb5">DC1M</div>
 <div class="l" style="top:8.5px">10X</div><div class="r" style="top:8.5px">500mV/</div>
 <div class="l" style="top:15.5px">FULL</div><div class="r" style="top:15.5px">0.00V</div>
</div>
<div class="ch" style="left:79px;width:63.5px;border:1px solid #3b5f95">
 <div class="tag" style="background:#18dd18;color:#0a5a0a;left:0.5px;top:0px">C4</div><div class="r" style="top:0px;color:#28bd28">DC1M</div>
 <div class="l" style="top:7.5px;left:0.5px">10X</div><div class="r" style="top:7.5px">500mV/</div>
 <div class="l" style="top:14.5px;left:0.5px">FULL</div><div class="r" style="top:14.5px">0.00V</div>
</div>
<div class="ch" style="left:144px;width:63px">
 <div class="tag" style="background:#e4622a;color:#5a1a0a">F1</div><div class="r" style="top:0.5px;color:#d0622a">C3-C4</div>
 <div class="r" style="top:8.5px">500mV/</div>
 <div class="r" style="top:15.5px">0.00V</div>
</div>
<div class="abs" style="left:208.5px;top:407.5px;width:62px;height:22px;border:1px dashed #2e2e2e;background:#141414"></div>
<div class="abs" style="left:228px;top:418px;width:23px;height:1px;background:#4a4a4a"></div>
<div class="abs" style="left:239px;top:412px;width:1px;height:13px;background:#4a4a4a"></div>
<div class="abs" style="left:271px;top:407px;width:492px;height:23px;background:#161616"></div>
<div class="bb" style="left:608px;width:63px">
 <div class="abs" style="left:0.5px;top:1px;color:#ccc;font-size:6.8px">Timebase</div>
 <div class="abs" style="left:8px;top:8.5px">0ps</div><div class="abs" style="right:1px;top:8.5px">200ns/div</div>
 <div class="abs" style="left:2px;top:15.5px"></div><div class="abs" style="right:1px;top:15.5px">10.0GSa/s</div>
</div>
<div class="bb" style="left:672px;width:57.5px">
 <div class="abs" style="left:3px;top:1px;color:#2aa8b5">Trigger</div><div class="abs" style="right:1px;top:1px;color:#2aa8b5">C3 DC</div>
 <div class="abs" style="left:3px;top:8.5px">Stop</div><div class="abs" style="right:1px;top:8.5px">560mV</div>
 <div class="abs" style="left:3px;top:15.5px">Qualified</div><div class="abs" style="right:1px;top:15.5px">Falling</div>
</div>
<div class="bb" style="left:730.5px;width:32.5px">
 <div class="abs" style="right:4px;top:8.5px">09:50:44</div>
 <div class="abs" style="right:4px;top:15.5px;font-size:5.6px">2025/05/26</div>
</div>


<svg width="780" height="441" viewBox="0 0 780 441" style="position:absolute;left:0;top:0">
<defs><linearGradient id="lg" x1="0" y1="388" x2="0" y2="430" gradientUnits="userSpaceOnUse">
<stop offset="0" stop-color="#ea8a26"/><stop offset="0.5" stop-color="#e0342c"/><stop offset="1" stop-color="#b41a22"/></linearGradient></defs>
<path fill="url(#lg)" fill-rule="evenodd" d="M629.5,388 L610,388.8 C602,389.5 596,392.5 591,397.5 L566.5,429.6 L612.5,429.6 C628,428 641,419 649.6,408.2 C640,415 627,420 613.8,421.5 Z M609.5,399.3 C604,399.3 599,400.5 596.5,404.5 L590.5,414.3 C595,414.3 599.5,413.5 601.5,412 C605,408 608,403 609.5,399.3 Z"/>
<g fill="#d8222e">
<rect x="655" y="389.6" width="25" height="3.4"/>
<rect x="659.3" y="388" width="3.4" height="6"/>
<rect x="672.4" y="388" width="3.4" height="6"/>
<path d="M656,397.8 L659,394.6 L679,406.3 L676.8,409.3 Z"/>
<path d="M674.6,394.6 L677.6,397.6 L658,409.3 L655.2,406 Z"/>
<rect x="684" y="389.3" width="25" height="3.4"/>
<rect x="694.6" y="388" width="3.4" height="7.5"/>
<path fill-rule="evenodd" d="M685.2,394.5 H704.8 V401.3 H685.2 Z M688.6,397.4 V398.4 H701.4 V397.4 Z"/>
<path d="M690,400.5 L694,400.5 L688.8,409 L685.2,408 Z"/>
<path d="M697,400.5 H700.6 V404 H705.5 V401.5 H709 V407.8 H697 Z"/>
<rect x="723.8" y="387.4" width="3.4" height="3"/>
<path d="M713.8,389.8 H737.8 V394 H735 V392.6 H716.6 V394 H713.8 Z"/>
<rect x="715.2" y="393.4" width="21.6" height="2.2"/>
<rect x="716.2" y="396" width="19.6" height="2"/>
<rect x="716.2" y="398.3" width="19.6" height="2"/>
<rect x="713" y="400.3" width="25.4" height="2.4"/>
<rect x="718.7" y="393" width="3.2" height="9.5"/>
<rect x="728.4" y="393" width="3.2" height="9.5"/>
<path d="M725.5,401.5 L727.5,403.2 L717.2,407.5 L715.2,405.6 Z"/>
<path d="M725.5,401.5 L723.5,403.2 L734.3,407.5 L736.3,405.6 Z"/>
<path fill-rule="evenodd" d="M718.3,404.3 H733.3 V409.7 H718.3 Z M721,406.2 V407.8 H730.6 V406.2 Z"/>
<rect x="746.3" y="387.5" width="3.4" height="3"/>
<rect x="757.3" y="387.5" width="3.4" height="3"/>
<rect x="742.8" y="389.5" width="24" height="2.8"/>
<rect x="743.3" y="392.8" width="23" height="1.8"/>
<rect x="747.3" y="392" width="2.8" height="6"/>
<rect x="752.8" y="392" width="2.8" height="6"/>
<rect x="756.3" y="392" width="2.8" height="6"/>
<rect x="760.8" y="392" width="2.8" height="6"/>
<rect x="742.8" y="396.3" width="24" height="2.6"/>
<path fill-rule="evenodd" d="M743.8,400.3 H765.8 V409.2 H743.8 Z M746.8,402.8 V403.6 H762.8 V402.8 Z M746.8,405.3 V406.6 H762.8 V405.3 Z"/>
</g>
<text x="762" y="419.5" fill="#000" font-family="Liberation Serif" font-weight="bold" font-style="italic" font-size="10">e</text><text x="763" y="429.5" fill="#000" font-family="Liberation Serif" font-weight="bold" font-style="italic" font-size="10">t</text>
<text x="0" y="0" fill="#fff" fill-opacity="0.92" font-family="Liberation Sans" font-weight="bold" font-style="italic" font-size="13.2" stroke="#fff" stroke-width="0.5" stroke-opacity="0.9" transform="translate(593.5 429.8) skewX(-8) scale(1.06 1)">CCEXP</text>
</svg>

</body></html>
